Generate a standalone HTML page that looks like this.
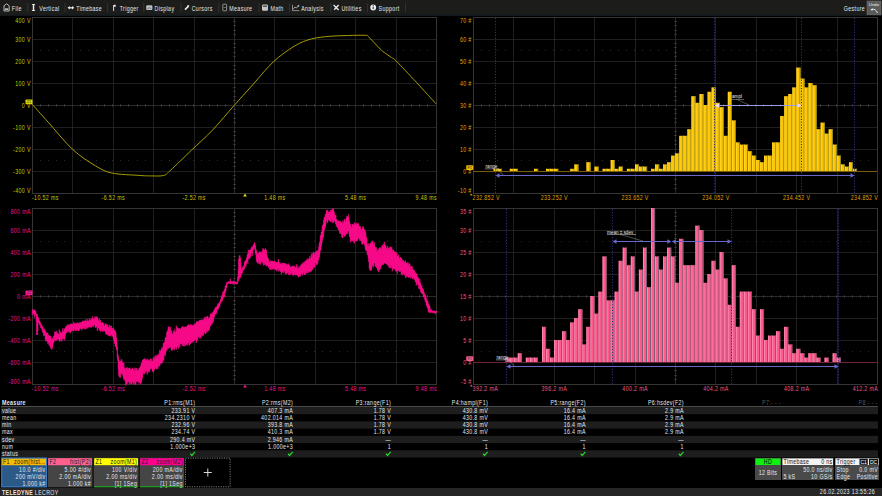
<!DOCTYPE html><html><head><meta charset="utf-8"><style>
html,body{margin:0;padding:0;background:#000;width:882px;height:496px;overflow:hidden}
svg{display:block}
text{font-family:"Liberation Sans", sans-serif}
</style></head><body>
<svg width="882" height="496" viewBox="0 0 882 496">
<rect x="0" y="0" width="882" height="496" fill="#000"/>

<rect x="0" y="0" width="882" height="15" fill="#1c1c1a"/>
<rect x="0" y="14.6" width="882" height="1.2" fill="#161d22"/>
<text transform="translate(11.8 10.7) scale(0.8 1)" letter-spacing="0.45" font-size="6.6" fill="#e4eaf0">File</text>
<rect x="27.4" y="3" width="0.8" height="9" fill="#383838"/>
<text transform="translate(39.3 10.7) scale(0.8 1)" letter-spacing="0.45" font-size="6.6" fill="#e4eaf0">Vertical</text>
<rect x="64.6" y="3" width="0.8" height="9" fill="#383838"/>
<text transform="translate(76.3 10.7) scale(0.8 1)" letter-spacing="0.45" font-size="6.6" fill="#e4eaf0">Timebase</text>
<rect x="107.3" y="3" width="0.8" height="9" fill="#383838"/>
<text transform="translate(119.7 10.7) scale(0.8 1)" letter-spacing="0.45" font-size="6.6" fill="#e4eaf0">Trigger</text>
<rect x="143.4" y="3" width="0.8" height="9" fill="#383838"/>
<text transform="translate(154.6 10.7) scale(0.8 1)" letter-spacing="0.45" font-size="6.6" fill="#e4eaf0">Display</text>
<rect x="180.5" y="3" width="0.8" height="9" fill="#383838"/>
<text transform="translate(191.7 10.7) scale(0.8 1)" letter-spacing="0.45" font-size="6.6" fill="#e4eaf0">Cursors</text>
<rect x="218.5" y="3" width="0.8" height="9" fill="#383838"/>
<text transform="translate(229.3 10.7) scale(0.8 1)" letter-spacing="0.45" font-size="6.6" fill="#e4eaf0">Measure</text>
<rect x="258.6" y="3" width="0.8" height="9" fill="#383838"/>
<text transform="translate(270.5 10.7) scale(0.8 1)" letter-spacing="0.45" font-size="6.6" fill="#e4eaf0">Math</text>
<rect x="289.2" y="3" width="0.8" height="9" fill="#383838"/>
<text transform="translate(301.2 10.7) scale(0.8 1)" letter-spacing="0.45" font-size="6.6" fill="#e4eaf0">Analysis</text>
<rect x="330.5" y="3" width="0.8" height="9" fill="#383838"/>
<text transform="translate(341.4 10.7) scale(0.8 1)" letter-spacing="0.45" font-size="6.6" fill="#e4eaf0">Utilities</text>
<rect x="367.3" y="3" width="0.8" height="9" fill="#383838"/>
<text transform="translate(378.6 10.7) scale(0.8 1)" letter-spacing="0.45" font-size="6.6" fill="#e4eaf0">Support</text>
<rect x="405" y="3" width="0.8" height="9" fill="#383838"/>
<path d="M4 11 v-5.2 l2.6 -2 l2.6 2 v5.2 z" fill="none" stroke="#b8b8b8" stroke-width="1"/><rect x="4.9" y="8.3" width="3.4" height="1.7" fill="#bbb"/>
<path d="M33.5 5.2 v4.6" stroke="#f4f4f4" stroke-width="1.4"/><path d="M31.6 4 h3.8 l-1.9 2 z M31.6 11 h3.8 l-1.9 -2 z" fill="#f4f4f4"/>
<path d="M69.5 7.8 h3" stroke="#eee" stroke-width="1.3"/><path d="M67.5 7.8 l2.3 -1.8 v3.6 z M74.3 7.8 l-2.3 -1.8 v3.6 z" fill="#eee"/>
<path d="M113.6 5 v6" stroke="#ddd" stroke-width="1"/><path d="M114 4.8 h1.8 v2 h-1.8 z" fill="#ddd"/>
<rect x="146.2" y="5.3" width="6.2" height="4.8" rx="1.2" fill="#bdbdbd"/><path d="M147.3 8.8 q2 -2.2 4 0" stroke="#555" stroke-width="0.7" fill="none"/>
<path d="M185 9.6 l3.6 -3.6" stroke="#eee" stroke-width="1.5"/><path d="M189.2 5.2 l-2.4 0.3 l2.1 2.1 z" fill="#eee"/>
<rect x="222.8" y="4.2" width="3.8" height="6.6" rx="0.6" fill="none" stroke="#aaa" stroke-width="0.8"/><rect x="223.6" y="7.3" width="2.2" height="0.6" fill="#aaa"/>
<rect x="262" y="4.6" width="6" height="6.2" rx="1.2" fill="#c4c4c4"/><rect x="263" y="5.5" width="4" height="1.5" fill="#555"/>
<path d="M292.5 4.8 v5.8 h6.8" stroke="#aaa" stroke-width="0.8" fill="none"/><path d="M293.3 9 l1.6 -2 l1.5 1 l1.6 -2" stroke="#bbb" stroke-width="0.8" fill="none"/><rect x="297.6" y="5.2" width="1.6" height="1.4" fill="#ccc"/>
<path d="M333.6 5 l5 5 M338.6 5 l-4.4 4.8" stroke="#eee" stroke-width="1.3" fill="none"/>
<circle cx="373.2" cy="7.5" r="2.9" fill="#eee"/><rect x="372.7" y="6.6" width="1" height="2.6" fill="#222"/><rect x="372.7" y="5.2" width="1" height="0.9" fill="#222"/>
<text transform="translate(865.10 11) scale(0.8 1)" letter-spacing="0.45" font-size="6.6" fill="#e4eaf0" text-anchor="end">Gesture</text>
<rect x="867" y="1" width="14" height="13.8" fill="#5a5a5a" stroke="#777" stroke-width="0.5"/>
<text x="874" y="6.2" font-size="4.3" fill="#eee" text-anchor="middle">Undo</text>
<path d="M871.5 9.6 q4 -1.6 6 3.4" stroke="#eee" stroke-width="0.9" fill="none"/><path d="M870.3 9.9 l2.2 -1.6 l0.3 2.2 z" fill="#eee"/>
<rect x="72" y="17" width="1" height="176" fill="#1f1f1f"/>
<rect x="113" y="17" width="1" height="176" fill="#1f1f1f"/>
<rect x="153" y="17" width="1" height="176" fill="#1f1f1f"/>
<rect x="194" y="17" width="1" height="176" fill="#1f1f1f"/>
<rect x="274" y="17" width="1" height="176" fill="#1f1f1f"/>
<rect x="315" y="17" width="1" height="176" fill="#1f1f1f"/>
<rect x="355" y="17" width="1" height="176" fill="#1f1f1f"/>
<rect x="396" y="17" width="1" height="176" fill="#1f1f1f"/>
<rect x="32" y="39" width="404" height="1" fill="#1f1f1f"/>
<rect x="32" y="61" width="404" height="1" fill="#1f1f1f"/>
<rect x="32" y="83" width="404" height="1" fill="#1f1f1f"/>
<rect x="32" y="127" width="404" height="1" fill="#1f1f1f"/>
<rect x="32" y="149" width="404" height="1" fill="#1f1f1f"/>
<rect x="32" y="171" width="404" height="1" fill="#1f1f1f"/>
<rect x="40" y="50" width="1" height="1" fill="#2a2a2a"/>
<rect x="48" y="50" width="1" height="1" fill="#2a2a2a"/>
<rect x="56" y="50" width="1" height="1" fill="#2a2a2a"/>
<rect x="64" y="50" width="1" height="1" fill="#2a2a2a"/>
<rect x="72" y="50" width="1" height="1" fill="#2a2a2a"/>
<rect x="80" y="50" width="1" height="1" fill="#2a2a2a"/>
<rect x="88" y="50" width="1" height="1" fill="#2a2a2a"/>
<rect x="96" y="50" width="1" height="1" fill="#2a2a2a"/>
<rect x="104" y="50" width="1" height="1" fill="#2a2a2a"/>
<rect x="112" y="50" width="1" height="1" fill="#2a2a2a"/>
<rect x="120" y="50" width="1" height="1" fill="#2a2a2a"/>
<rect x="128" y="50" width="1" height="1" fill="#2a2a2a"/>
<rect x="137" y="50" width="1" height="1" fill="#2a2a2a"/>
<rect x="145" y="50" width="1" height="1" fill="#2a2a2a"/>
<rect x="153" y="50" width="1" height="1" fill="#2a2a2a"/>
<rect x="161" y="50" width="1" height="1" fill="#2a2a2a"/>
<rect x="169" y="50" width="1" height="1" fill="#2a2a2a"/>
<rect x="177" y="50" width="1" height="1" fill="#2a2a2a"/>
<rect x="185" y="50" width="1" height="1" fill="#2a2a2a"/>
<rect x="193" y="50" width="1" height="1" fill="#2a2a2a"/>
<rect x="201" y="50" width="1" height="1" fill="#2a2a2a"/>
<rect x="209" y="50" width="1" height="1" fill="#2a2a2a"/>
<rect x="217" y="50" width="1" height="1" fill="#2a2a2a"/>
<rect x="225" y="50" width="1" height="1" fill="#2a2a2a"/>
<rect x="234" y="50" width="1" height="1" fill="#2a2a2a"/>
<rect x="242" y="50" width="1" height="1" fill="#2a2a2a"/>
<rect x="250" y="50" width="1" height="1" fill="#2a2a2a"/>
<rect x="258" y="50" width="1" height="1" fill="#2a2a2a"/>
<rect x="266" y="50" width="1" height="1" fill="#2a2a2a"/>
<rect x="274" y="50" width="1" height="1" fill="#2a2a2a"/>
<rect x="282" y="50" width="1" height="1" fill="#2a2a2a"/>
<rect x="290" y="50" width="1" height="1" fill="#2a2a2a"/>
<rect x="298" y="50" width="1" height="1" fill="#2a2a2a"/>
<rect x="306" y="50" width="1" height="1" fill="#2a2a2a"/>
<rect x="314" y="50" width="1" height="1" fill="#2a2a2a"/>
<rect x="322" y="50" width="1" height="1" fill="#2a2a2a"/>
<rect x="330" y="50" width="1" height="1" fill="#2a2a2a"/>
<rect x="339" y="50" width="1" height="1" fill="#2a2a2a"/>
<rect x="347" y="50" width="1" height="1" fill="#2a2a2a"/>
<rect x="355" y="50" width="1" height="1" fill="#2a2a2a"/>
<rect x="363" y="50" width="1" height="1" fill="#2a2a2a"/>
<rect x="371" y="50" width="1" height="1" fill="#2a2a2a"/>
<rect x="379" y="50" width="1" height="1" fill="#2a2a2a"/>
<rect x="387" y="50" width="1" height="1" fill="#2a2a2a"/>
<rect x="395" y="50" width="1" height="1" fill="#2a2a2a"/>
<rect x="403" y="50" width="1" height="1" fill="#2a2a2a"/>
<rect x="411" y="50" width="1" height="1" fill="#2a2a2a"/>
<rect x="419" y="50" width="1" height="1" fill="#2a2a2a"/>
<rect x="427" y="50" width="1" height="1" fill="#2a2a2a"/>
<rect x="40" y="160" width="1" height="1" fill="#2a2a2a"/>
<rect x="48" y="160" width="1" height="1" fill="#2a2a2a"/>
<rect x="56" y="160" width="1" height="1" fill="#2a2a2a"/>
<rect x="64" y="160" width="1" height="1" fill="#2a2a2a"/>
<rect x="72" y="160" width="1" height="1" fill="#2a2a2a"/>
<rect x="80" y="160" width="1" height="1" fill="#2a2a2a"/>
<rect x="88" y="160" width="1" height="1" fill="#2a2a2a"/>
<rect x="96" y="160" width="1" height="1" fill="#2a2a2a"/>
<rect x="104" y="160" width="1" height="1" fill="#2a2a2a"/>
<rect x="112" y="160" width="1" height="1" fill="#2a2a2a"/>
<rect x="120" y="160" width="1" height="1" fill="#2a2a2a"/>
<rect x="128" y="160" width="1" height="1" fill="#2a2a2a"/>
<rect x="137" y="160" width="1" height="1" fill="#2a2a2a"/>
<rect x="145" y="160" width="1" height="1" fill="#2a2a2a"/>
<rect x="153" y="160" width="1" height="1" fill="#2a2a2a"/>
<rect x="161" y="160" width="1" height="1" fill="#2a2a2a"/>
<rect x="169" y="160" width="1" height="1" fill="#2a2a2a"/>
<rect x="177" y="160" width="1" height="1" fill="#2a2a2a"/>
<rect x="185" y="160" width="1" height="1" fill="#2a2a2a"/>
<rect x="193" y="160" width="1" height="1" fill="#2a2a2a"/>
<rect x="201" y="160" width="1" height="1" fill="#2a2a2a"/>
<rect x="209" y="160" width="1" height="1" fill="#2a2a2a"/>
<rect x="217" y="160" width="1" height="1" fill="#2a2a2a"/>
<rect x="225" y="160" width="1" height="1" fill="#2a2a2a"/>
<rect x="234" y="160" width="1" height="1" fill="#2a2a2a"/>
<rect x="242" y="160" width="1" height="1" fill="#2a2a2a"/>
<rect x="250" y="160" width="1" height="1" fill="#2a2a2a"/>
<rect x="258" y="160" width="1" height="1" fill="#2a2a2a"/>
<rect x="266" y="160" width="1" height="1" fill="#2a2a2a"/>
<rect x="274" y="160" width="1" height="1" fill="#2a2a2a"/>
<rect x="282" y="160" width="1" height="1" fill="#2a2a2a"/>
<rect x="290" y="160" width="1" height="1" fill="#2a2a2a"/>
<rect x="298" y="160" width="1" height="1" fill="#2a2a2a"/>
<rect x="306" y="160" width="1" height="1" fill="#2a2a2a"/>
<rect x="314" y="160" width="1" height="1" fill="#2a2a2a"/>
<rect x="322" y="160" width="1" height="1" fill="#2a2a2a"/>
<rect x="330" y="160" width="1" height="1" fill="#2a2a2a"/>
<rect x="339" y="160" width="1" height="1" fill="#2a2a2a"/>
<rect x="347" y="160" width="1" height="1" fill="#2a2a2a"/>
<rect x="355" y="160" width="1" height="1" fill="#2a2a2a"/>
<rect x="363" y="160" width="1" height="1" fill="#2a2a2a"/>
<rect x="371" y="160" width="1" height="1" fill="#2a2a2a"/>
<rect x="379" y="160" width="1" height="1" fill="#2a2a2a"/>
<rect x="387" y="160" width="1" height="1" fill="#2a2a2a"/>
<rect x="395" y="160" width="1" height="1" fill="#2a2a2a"/>
<rect x="403" y="160" width="1" height="1" fill="#2a2a2a"/>
<rect x="411" y="160" width="1" height="1" fill="#2a2a2a"/>
<rect x="419" y="160" width="1" height="1" fill="#2a2a2a"/>
<rect x="427" y="160" width="1" height="1" fill="#2a2a2a"/>
<rect x="32" y="105" width="404" height="1" fill="#2a2a2a"/>
<rect x="234" y="17" width="1" height="176" fill="#2a2a2a"/>
<rect x="40" y="104" width="1" height="3" fill="#262626"/><rect x="40" y="105" width="1" height="1" fill="#444"/>
<rect x="48" y="104" width="1" height="3" fill="#262626"/><rect x="48" y="105" width="1" height="1" fill="#444"/>
<rect x="56" y="104" width="1" height="3" fill="#262626"/><rect x="56" y="105" width="1" height="1" fill="#444"/>
<rect x="64" y="104" width="1" height="3" fill="#262626"/><rect x="64" y="105" width="1" height="1" fill="#444"/>
<rect x="72" y="104" width="1" height="3" fill="#262626"/><rect x="72" y="105" width="1" height="1" fill="#444"/>
<rect x="80" y="104" width="1" height="3" fill="#262626"/><rect x="80" y="105" width="1" height="1" fill="#444"/>
<rect x="88" y="104" width="1" height="3" fill="#262626"/><rect x="88" y="105" width="1" height="1" fill="#444"/>
<rect x="96" y="104" width="1" height="3" fill="#262626"/><rect x="96" y="105" width="1" height="1" fill="#444"/>
<rect x="104" y="104" width="1" height="3" fill="#262626"/><rect x="104" y="105" width="1" height="1" fill="#444"/>
<rect x="112" y="104" width="1" height="3" fill="#262626"/><rect x="112" y="105" width="1" height="1" fill="#444"/>
<rect x="120" y="104" width="1" height="3" fill="#262626"/><rect x="120" y="105" width="1" height="1" fill="#444"/>
<rect x="128" y="104" width="1" height="3" fill="#262626"/><rect x="128" y="105" width="1" height="1" fill="#444"/>
<rect x="137" y="104" width="1" height="3" fill="#262626"/><rect x="137" y="105" width="1" height="1" fill="#444"/>
<rect x="145" y="104" width="1" height="3" fill="#262626"/><rect x="145" y="105" width="1" height="1" fill="#444"/>
<rect x="153" y="104" width="1" height="3" fill="#262626"/><rect x="153" y="105" width="1" height="1" fill="#444"/>
<rect x="161" y="104" width="1" height="3" fill="#262626"/><rect x="161" y="105" width="1" height="1" fill="#444"/>
<rect x="169" y="104" width="1" height="3" fill="#262626"/><rect x="169" y="105" width="1" height="1" fill="#444"/>
<rect x="177" y="104" width="1" height="3" fill="#262626"/><rect x="177" y="105" width="1" height="1" fill="#444"/>
<rect x="185" y="104" width="1" height="3" fill="#262626"/><rect x="185" y="105" width="1" height="1" fill="#444"/>
<rect x="193" y="104" width="1" height="3" fill="#262626"/><rect x="193" y="105" width="1" height="1" fill="#444"/>
<rect x="201" y="104" width="1" height="3" fill="#262626"/><rect x="201" y="105" width="1" height="1" fill="#444"/>
<rect x="209" y="104" width="1" height="3" fill="#262626"/><rect x="209" y="105" width="1" height="1" fill="#444"/>
<rect x="217" y="104" width="1" height="3" fill="#262626"/><rect x="217" y="105" width="1" height="1" fill="#444"/>
<rect x="225" y="104" width="1" height="3" fill="#262626"/><rect x="225" y="105" width="1" height="1" fill="#444"/>
<rect x="234" y="104" width="1" height="3" fill="#262626"/><rect x="234" y="105" width="1" height="1" fill="#444"/>
<rect x="242" y="104" width="1" height="3" fill="#262626"/><rect x="242" y="105" width="1" height="1" fill="#444"/>
<rect x="250" y="104" width="1" height="3" fill="#262626"/><rect x="250" y="105" width="1" height="1" fill="#444"/>
<rect x="258" y="104" width="1" height="3" fill="#262626"/><rect x="258" y="105" width="1" height="1" fill="#444"/>
<rect x="266" y="104" width="1" height="3" fill="#262626"/><rect x="266" y="105" width="1" height="1" fill="#444"/>
<rect x="274" y="104" width="1" height="3" fill="#262626"/><rect x="274" y="105" width="1" height="1" fill="#444"/>
<rect x="282" y="104" width="1" height="3" fill="#262626"/><rect x="282" y="105" width="1" height="1" fill="#444"/>
<rect x="290" y="104" width="1" height="3" fill="#262626"/><rect x="290" y="105" width="1" height="1" fill="#444"/>
<rect x="298" y="104" width="1" height="3" fill="#262626"/><rect x="298" y="105" width="1" height="1" fill="#444"/>
<rect x="306" y="104" width="1" height="3" fill="#262626"/><rect x="306" y="105" width="1" height="1" fill="#444"/>
<rect x="314" y="104" width="1" height="3" fill="#262626"/><rect x="314" y="105" width="1" height="1" fill="#444"/>
<rect x="322" y="104" width="1" height="3" fill="#262626"/><rect x="322" y="105" width="1" height="1" fill="#444"/>
<rect x="330" y="104" width="1" height="3" fill="#262626"/><rect x="330" y="105" width="1" height="1" fill="#444"/>
<rect x="339" y="104" width="1" height="3" fill="#262626"/><rect x="339" y="105" width="1" height="1" fill="#444"/>
<rect x="347" y="104" width="1" height="3" fill="#262626"/><rect x="347" y="105" width="1" height="1" fill="#444"/>
<rect x="355" y="104" width="1" height="3" fill="#262626"/><rect x="355" y="105" width="1" height="1" fill="#444"/>
<rect x="363" y="104" width="1" height="3" fill="#262626"/><rect x="363" y="105" width="1" height="1" fill="#444"/>
<rect x="371" y="104" width="1" height="3" fill="#262626"/><rect x="371" y="105" width="1" height="1" fill="#444"/>
<rect x="379" y="104" width="1" height="3" fill="#262626"/><rect x="379" y="105" width="1" height="1" fill="#444"/>
<rect x="387" y="104" width="1" height="3" fill="#262626"/><rect x="387" y="105" width="1" height="1" fill="#444"/>
<rect x="395" y="104" width="1" height="3" fill="#262626"/><rect x="395" y="105" width="1" height="1" fill="#444"/>
<rect x="403" y="104" width="1" height="3" fill="#262626"/><rect x="403" y="105" width="1" height="1" fill="#444"/>
<rect x="411" y="104" width="1" height="3" fill="#262626"/><rect x="411" y="105" width="1" height="1" fill="#444"/>
<rect x="419" y="104" width="1" height="3" fill="#262626"/><rect x="419" y="105" width="1" height="1" fill="#444"/>
<rect x="427" y="104" width="1" height="3" fill="#262626"/><rect x="427" y="105" width="1" height="1" fill="#444"/>
<rect x="233" y="21" width="3" height="1" fill="#262626"/><rect x="234" y="21" width="1" height="1" fill="#444"/>
<rect x="233" y="25" width="3" height="1" fill="#262626"/><rect x="234" y="25" width="1" height="1" fill="#444"/>
<rect x="233" y="30" width="3" height="1" fill="#262626"/><rect x="234" y="30" width="1" height="1" fill="#444"/>
<rect x="233" y="34" width="3" height="1" fill="#262626"/><rect x="234" y="34" width="1" height="1" fill="#444"/>
<rect x="233" y="39" width="3" height="1" fill="#262626"/><rect x="234" y="39" width="1" height="1" fill="#444"/>
<rect x="233" y="43" width="3" height="1" fill="#262626"/><rect x="234" y="43" width="1" height="1" fill="#444"/>
<rect x="233" y="47" width="3" height="1" fill="#262626"/><rect x="234" y="47" width="1" height="1" fill="#444"/>
<rect x="233" y="52" width="3" height="1" fill="#262626"/><rect x="234" y="52" width="1" height="1" fill="#444"/>
<rect x="233" y="56" width="3" height="1" fill="#262626"/><rect x="234" y="56" width="1" height="1" fill="#444"/>
<rect x="233" y="61" width="3" height="1" fill="#262626"/><rect x="234" y="61" width="1" height="1" fill="#444"/>
<rect x="233" y="65" width="3" height="1" fill="#262626"/><rect x="234" y="65" width="1" height="1" fill="#444"/>
<rect x="233" y="69" width="3" height="1" fill="#262626"/><rect x="234" y="69" width="1" height="1" fill="#444"/>
<rect x="233" y="74" width="3" height="1" fill="#262626"/><rect x="234" y="74" width="1" height="1" fill="#444"/>
<rect x="233" y="78" width="3" height="1" fill="#262626"/><rect x="234" y="78" width="1" height="1" fill="#444"/>
<rect x="233" y="83" width="3" height="1" fill="#262626"/><rect x="234" y="83" width="1" height="1" fill="#444"/>
<rect x="233" y="87" width="3" height="1" fill="#262626"/><rect x="234" y="87" width="1" height="1" fill="#444"/>
<rect x="233" y="91" width="3" height="1" fill="#262626"/><rect x="234" y="91" width="1" height="1" fill="#444"/>
<rect x="233" y="96" width="3" height="1" fill="#262626"/><rect x="234" y="96" width="1" height="1" fill="#444"/>
<rect x="233" y="100" width="3" height="1" fill="#262626"/><rect x="234" y="100" width="1" height="1" fill="#444"/>
<rect x="233" y="105" width="3" height="1" fill="#262626"/><rect x="234" y="105" width="1" height="1" fill="#444"/>
<rect x="233" y="109" width="3" height="1" fill="#262626"/><rect x="234" y="109" width="1" height="1" fill="#444"/>
<rect x="233" y="113" width="3" height="1" fill="#262626"/><rect x="234" y="113" width="1" height="1" fill="#444"/>
<rect x="233" y="118" width="3" height="1" fill="#262626"/><rect x="234" y="118" width="1" height="1" fill="#444"/>
<rect x="233" y="122" width="3" height="1" fill="#262626"/><rect x="234" y="122" width="1" height="1" fill="#444"/>
<rect x="233" y="127" width="3" height="1" fill="#262626"/><rect x="234" y="127" width="1" height="1" fill="#444"/>
<rect x="233" y="131" width="3" height="1" fill="#262626"/><rect x="234" y="131" width="1" height="1" fill="#444"/>
<rect x="233" y="135" width="3" height="1" fill="#262626"/><rect x="234" y="135" width="1" height="1" fill="#444"/>
<rect x="233" y="140" width="3" height="1" fill="#262626"/><rect x="234" y="140" width="1" height="1" fill="#444"/>
<rect x="233" y="144" width="3" height="1" fill="#262626"/><rect x="234" y="144" width="1" height="1" fill="#444"/>
<rect x="233" y="149" width="3" height="1" fill="#262626"/><rect x="234" y="149" width="1" height="1" fill="#444"/>
<rect x="233" y="153" width="3" height="1" fill="#262626"/><rect x="234" y="153" width="1" height="1" fill="#444"/>
<rect x="233" y="157" width="3" height="1" fill="#262626"/><rect x="234" y="157" width="1" height="1" fill="#444"/>
<rect x="233" y="162" width="3" height="1" fill="#262626"/><rect x="234" y="162" width="1" height="1" fill="#444"/>
<rect x="233" y="166" width="3" height="1" fill="#262626"/><rect x="234" y="166" width="1" height="1" fill="#444"/>
<rect x="233" y="171" width="3" height="1" fill="#262626"/><rect x="234" y="171" width="1" height="1" fill="#444"/>
<rect x="233" y="175" width="3" height="1" fill="#262626"/><rect x="234" y="175" width="1" height="1" fill="#444"/>
<rect x="233" y="179" width="3" height="1" fill="#262626"/><rect x="234" y="179" width="1" height="1" fill="#444"/>
<rect x="233" y="184" width="3" height="1" fill="#262626"/><rect x="234" y="184" width="1" height="1" fill="#444"/>
<rect x="233" y="188" width="3" height="1" fill="#262626"/><rect x="234" y="188" width="1" height="1" fill="#444"/>
<rect x="72" y="39" width="1" height="1" fill="#2c2c2c"/>
<rect x="72" y="61" width="1" height="1" fill="#2c2c2c"/>
<rect x="72" y="83" width="1" height="1" fill="#2c2c2c"/>
<rect x="72" y="105" width="1" height="1" fill="#2c2c2c"/>
<rect x="72" y="127" width="1" height="1" fill="#2c2c2c"/>
<rect x="72" y="149" width="1" height="1" fill="#2c2c2c"/>
<rect x="72" y="171" width="1" height="1" fill="#2c2c2c"/>
<rect x="113" y="39" width="1" height="1" fill="#2c2c2c"/>
<rect x="113" y="61" width="1" height="1" fill="#2c2c2c"/>
<rect x="113" y="83" width="1" height="1" fill="#2c2c2c"/>
<rect x="113" y="105" width="1" height="1" fill="#2c2c2c"/>
<rect x="113" y="127" width="1" height="1" fill="#2c2c2c"/>
<rect x="113" y="149" width="1" height="1" fill="#2c2c2c"/>
<rect x="113" y="171" width="1" height="1" fill="#2c2c2c"/>
<rect x="153" y="39" width="1" height="1" fill="#2c2c2c"/>
<rect x="153" y="61" width="1" height="1" fill="#2c2c2c"/>
<rect x="153" y="83" width="1" height="1" fill="#2c2c2c"/>
<rect x="153" y="105" width="1" height="1" fill="#2c2c2c"/>
<rect x="153" y="127" width="1" height="1" fill="#2c2c2c"/>
<rect x="153" y="149" width="1" height="1" fill="#2c2c2c"/>
<rect x="153" y="171" width="1" height="1" fill="#2c2c2c"/>
<rect x="194" y="39" width="1" height="1" fill="#2c2c2c"/>
<rect x="194" y="61" width="1" height="1" fill="#2c2c2c"/>
<rect x="194" y="83" width="1" height="1" fill="#2c2c2c"/>
<rect x="194" y="105" width="1" height="1" fill="#2c2c2c"/>
<rect x="194" y="127" width="1" height="1" fill="#2c2c2c"/>
<rect x="194" y="149" width="1" height="1" fill="#2c2c2c"/>
<rect x="194" y="171" width="1" height="1" fill="#2c2c2c"/>
<rect x="234" y="39" width="1" height="1" fill="#2c2c2c"/>
<rect x="234" y="61" width="1" height="1" fill="#2c2c2c"/>
<rect x="234" y="83" width="1" height="1" fill="#2c2c2c"/>
<rect x="234" y="105" width="1" height="1" fill="#2c2c2c"/>
<rect x="234" y="127" width="1" height="1" fill="#2c2c2c"/>
<rect x="234" y="149" width="1" height="1" fill="#2c2c2c"/>
<rect x="234" y="171" width="1" height="1" fill="#2c2c2c"/>
<rect x="274" y="39" width="1" height="1" fill="#2c2c2c"/>
<rect x="274" y="61" width="1" height="1" fill="#2c2c2c"/>
<rect x="274" y="83" width="1" height="1" fill="#2c2c2c"/>
<rect x="274" y="105" width="1" height="1" fill="#2c2c2c"/>
<rect x="274" y="127" width="1" height="1" fill="#2c2c2c"/>
<rect x="274" y="149" width="1" height="1" fill="#2c2c2c"/>
<rect x="274" y="171" width="1" height="1" fill="#2c2c2c"/>
<rect x="315" y="39" width="1" height="1" fill="#2c2c2c"/>
<rect x="315" y="61" width="1" height="1" fill="#2c2c2c"/>
<rect x="315" y="83" width="1" height="1" fill="#2c2c2c"/>
<rect x="315" y="105" width="1" height="1" fill="#2c2c2c"/>
<rect x="315" y="127" width="1" height="1" fill="#2c2c2c"/>
<rect x="315" y="149" width="1" height="1" fill="#2c2c2c"/>
<rect x="315" y="171" width="1" height="1" fill="#2c2c2c"/>
<rect x="355" y="39" width="1" height="1" fill="#2c2c2c"/>
<rect x="355" y="61" width="1" height="1" fill="#2c2c2c"/>
<rect x="355" y="83" width="1" height="1" fill="#2c2c2c"/>
<rect x="355" y="105" width="1" height="1" fill="#2c2c2c"/>
<rect x="355" y="127" width="1" height="1" fill="#2c2c2c"/>
<rect x="355" y="149" width="1" height="1" fill="#2c2c2c"/>
<rect x="355" y="171" width="1" height="1" fill="#2c2c2c"/>
<rect x="396" y="39" width="1" height="1" fill="#2c2c2c"/>
<rect x="396" y="61" width="1" height="1" fill="#2c2c2c"/>
<rect x="396" y="83" width="1" height="1" fill="#2c2c2c"/>
<rect x="396" y="105" width="1" height="1" fill="#2c2c2c"/>
<rect x="396" y="127" width="1" height="1" fill="#2c2c2c"/>
<rect x="396" y="149" width="1" height="1" fill="#2c2c2c"/>
<rect x="396" y="171" width="1" height="1" fill="#2c2c2c"/>
<rect x="32.5" y="17.5" width="404" height="176" fill="none" stroke="#353535" stroke-width="1"/>
<rect x="72" y="208" width="1" height="176" fill="#1f1f1f"/>
<rect x="113" y="208" width="1" height="176" fill="#1f1f1f"/>
<rect x="153" y="208" width="1" height="176" fill="#1f1f1f"/>
<rect x="194" y="208" width="1" height="176" fill="#1f1f1f"/>
<rect x="274" y="208" width="1" height="176" fill="#1f1f1f"/>
<rect x="315" y="208" width="1" height="176" fill="#1f1f1f"/>
<rect x="355" y="208" width="1" height="176" fill="#1f1f1f"/>
<rect x="396" y="208" width="1" height="176" fill="#1f1f1f"/>
<rect x="32" y="230" width="404" height="1" fill="#1f1f1f"/>
<rect x="32" y="252" width="404" height="1" fill="#1f1f1f"/>
<rect x="32" y="274" width="404" height="1" fill="#1f1f1f"/>
<rect x="32" y="318" width="404" height="1" fill="#1f1f1f"/>
<rect x="32" y="340" width="404" height="1" fill="#1f1f1f"/>
<rect x="32" y="362" width="404" height="1" fill="#1f1f1f"/>
<rect x="40" y="241" width="1" height="1" fill="#2a2a2a"/>
<rect x="48" y="241" width="1" height="1" fill="#2a2a2a"/>
<rect x="56" y="241" width="1" height="1" fill="#2a2a2a"/>
<rect x="64" y="241" width="1" height="1" fill="#2a2a2a"/>
<rect x="72" y="241" width="1" height="1" fill="#2a2a2a"/>
<rect x="80" y="241" width="1" height="1" fill="#2a2a2a"/>
<rect x="88" y="241" width="1" height="1" fill="#2a2a2a"/>
<rect x="96" y="241" width="1" height="1" fill="#2a2a2a"/>
<rect x="104" y="241" width="1" height="1" fill="#2a2a2a"/>
<rect x="112" y="241" width="1" height="1" fill="#2a2a2a"/>
<rect x="120" y="241" width="1" height="1" fill="#2a2a2a"/>
<rect x="128" y="241" width="1" height="1" fill="#2a2a2a"/>
<rect x="137" y="241" width="1" height="1" fill="#2a2a2a"/>
<rect x="145" y="241" width="1" height="1" fill="#2a2a2a"/>
<rect x="153" y="241" width="1" height="1" fill="#2a2a2a"/>
<rect x="161" y="241" width="1" height="1" fill="#2a2a2a"/>
<rect x="169" y="241" width="1" height="1" fill="#2a2a2a"/>
<rect x="177" y="241" width="1" height="1" fill="#2a2a2a"/>
<rect x="185" y="241" width="1" height="1" fill="#2a2a2a"/>
<rect x="193" y="241" width="1" height="1" fill="#2a2a2a"/>
<rect x="201" y="241" width="1" height="1" fill="#2a2a2a"/>
<rect x="209" y="241" width="1" height="1" fill="#2a2a2a"/>
<rect x="217" y="241" width="1" height="1" fill="#2a2a2a"/>
<rect x="225" y="241" width="1" height="1" fill="#2a2a2a"/>
<rect x="234" y="241" width="1" height="1" fill="#2a2a2a"/>
<rect x="242" y="241" width="1" height="1" fill="#2a2a2a"/>
<rect x="250" y="241" width="1" height="1" fill="#2a2a2a"/>
<rect x="258" y="241" width="1" height="1" fill="#2a2a2a"/>
<rect x="266" y="241" width="1" height="1" fill="#2a2a2a"/>
<rect x="274" y="241" width="1" height="1" fill="#2a2a2a"/>
<rect x="282" y="241" width="1" height="1" fill="#2a2a2a"/>
<rect x="290" y="241" width="1" height="1" fill="#2a2a2a"/>
<rect x="298" y="241" width="1" height="1" fill="#2a2a2a"/>
<rect x="306" y="241" width="1" height="1" fill="#2a2a2a"/>
<rect x="314" y="241" width="1" height="1" fill="#2a2a2a"/>
<rect x="322" y="241" width="1" height="1" fill="#2a2a2a"/>
<rect x="330" y="241" width="1" height="1" fill="#2a2a2a"/>
<rect x="339" y="241" width="1" height="1" fill="#2a2a2a"/>
<rect x="347" y="241" width="1" height="1" fill="#2a2a2a"/>
<rect x="355" y="241" width="1" height="1" fill="#2a2a2a"/>
<rect x="363" y="241" width="1" height="1" fill="#2a2a2a"/>
<rect x="371" y="241" width="1" height="1" fill="#2a2a2a"/>
<rect x="379" y="241" width="1" height="1" fill="#2a2a2a"/>
<rect x="387" y="241" width="1" height="1" fill="#2a2a2a"/>
<rect x="395" y="241" width="1" height="1" fill="#2a2a2a"/>
<rect x="403" y="241" width="1" height="1" fill="#2a2a2a"/>
<rect x="411" y="241" width="1" height="1" fill="#2a2a2a"/>
<rect x="419" y="241" width="1" height="1" fill="#2a2a2a"/>
<rect x="427" y="241" width="1" height="1" fill="#2a2a2a"/>
<rect x="40" y="351" width="1" height="1" fill="#2a2a2a"/>
<rect x="48" y="351" width="1" height="1" fill="#2a2a2a"/>
<rect x="56" y="351" width="1" height="1" fill="#2a2a2a"/>
<rect x="64" y="351" width="1" height="1" fill="#2a2a2a"/>
<rect x="72" y="351" width="1" height="1" fill="#2a2a2a"/>
<rect x="80" y="351" width="1" height="1" fill="#2a2a2a"/>
<rect x="88" y="351" width="1" height="1" fill="#2a2a2a"/>
<rect x="96" y="351" width="1" height="1" fill="#2a2a2a"/>
<rect x="104" y="351" width="1" height="1" fill="#2a2a2a"/>
<rect x="112" y="351" width="1" height="1" fill="#2a2a2a"/>
<rect x="120" y="351" width="1" height="1" fill="#2a2a2a"/>
<rect x="128" y="351" width="1" height="1" fill="#2a2a2a"/>
<rect x="137" y="351" width="1" height="1" fill="#2a2a2a"/>
<rect x="145" y="351" width="1" height="1" fill="#2a2a2a"/>
<rect x="153" y="351" width="1" height="1" fill="#2a2a2a"/>
<rect x="161" y="351" width="1" height="1" fill="#2a2a2a"/>
<rect x="169" y="351" width="1" height="1" fill="#2a2a2a"/>
<rect x="177" y="351" width="1" height="1" fill="#2a2a2a"/>
<rect x="185" y="351" width="1" height="1" fill="#2a2a2a"/>
<rect x="193" y="351" width="1" height="1" fill="#2a2a2a"/>
<rect x="201" y="351" width="1" height="1" fill="#2a2a2a"/>
<rect x="209" y="351" width="1" height="1" fill="#2a2a2a"/>
<rect x="217" y="351" width="1" height="1" fill="#2a2a2a"/>
<rect x="225" y="351" width="1" height="1" fill="#2a2a2a"/>
<rect x="234" y="351" width="1" height="1" fill="#2a2a2a"/>
<rect x="242" y="351" width="1" height="1" fill="#2a2a2a"/>
<rect x="250" y="351" width="1" height="1" fill="#2a2a2a"/>
<rect x="258" y="351" width="1" height="1" fill="#2a2a2a"/>
<rect x="266" y="351" width="1" height="1" fill="#2a2a2a"/>
<rect x="274" y="351" width="1" height="1" fill="#2a2a2a"/>
<rect x="282" y="351" width="1" height="1" fill="#2a2a2a"/>
<rect x="290" y="351" width="1" height="1" fill="#2a2a2a"/>
<rect x="298" y="351" width="1" height="1" fill="#2a2a2a"/>
<rect x="306" y="351" width="1" height="1" fill="#2a2a2a"/>
<rect x="314" y="351" width="1" height="1" fill="#2a2a2a"/>
<rect x="322" y="351" width="1" height="1" fill="#2a2a2a"/>
<rect x="330" y="351" width="1" height="1" fill="#2a2a2a"/>
<rect x="339" y="351" width="1" height="1" fill="#2a2a2a"/>
<rect x="347" y="351" width="1" height="1" fill="#2a2a2a"/>
<rect x="355" y="351" width="1" height="1" fill="#2a2a2a"/>
<rect x="363" y="351" width="1" height="1" fill="#2a2a2a"/>
<rect x="371" y="351" width="1" height="1" fill="#2a2a2a"/>
<rect x="379" y="351" width="1" height="1" fill="#2a2a2a"/>
<rect x="387" y="351" width="1" height="1" fill="#2a2a2a"/>
<rect x="395" y="351" width="1" height="1" fill="#2a2a2a"/>
<rect x="403" y="351" width="1" height="1" fill="#2a2a2a"/>
<rect x="411" y="351" width="1" height="1" fill="#2a2a2a"/>
<rect x="419" y="351" width="1" height="1" fill="#2a2a2a"/>
<rect x="427" y="351" width="1" height="1" fill="#2a2a2a"/>
<rect x="32" y="296" width="404" height="1" fill="#2a2a2a"/>
<rect x="234" y="208" width="1" height="176" fill="#2a2a2a"/>
<rect x="40" y="295" width="1" height="3" fill="#262626"/><rect x="40" y="296" width="1" height="1" fill="#444"/>
<rect x="48" y="295" width="1" height="3" fill="#262626"/><rect x="48" y="296" width="1" height="1" fill="#444"/>
<rect x="56" y="295" width="1" height="3" fill="#262626"/><rect x="56" y="296" width="1" height="1" fill="#444"/>
<rect x="64" y="295" width="1" height="3" fill="#262626"/><rect x="64" y="296" width="1" height="1" fill="#444"/>
<rect x="72" y="295" width="1" height="3" fill="#262626"/><rect x="72" y="296" width="1" height="1" fill="#444"/>
<rect x="80" y="295" width="1" height="3" fill="#262626"/><rect x="80" y="296" width="1" height="1" fill="#444"/>
<rect x="88" y="295" width="1" height="3" fill="#262626"/><rect x="88" y="296" width="1" height="1" fill="#444"/>
<rect x="96" y="295" width="1" height="3" fill="#262626"/><rect x="96" y="296" width="1" height="1" fill="#444"/>
<rect x="104" y="295" width="1" height="3" fill="#262626"/><rect x="104" y="296" width="1" height="1" fill="#444"/>
<rect x="112" y="295" width="1" height="3" fill="#262626"/><rect x="112" y="296" width="1" height="1" fill="#444"/>
<rect x="120" y="295" width="1" height="3" fill="#262626"/><rect x="120" y="296" width="1" height="1" fill="#444"/>
<rect x="128" y="295" width="1" height="3" fill="#262626"/><rect x="128" y="296" width="1" height="1" fill="#444"/>
<rect x="137" y="295" width="1" height="3" fill="#262626"/><rect x="137" y="296" width="1" height="1" fill="#444"/>
<rect x="145" y="295" width="1" height="3" fill="#262626"/><rect x="145" y="296" width="1" height="1" fill="#444"/>
<rect x="153" y="295" width="1" height="3" fill="#262626"/><rect x="153" y="296" width="1" height="1" fill="#444"/>
<rect x="161" y="295" width="1" height="3" fill="#262626"/><rect x="161" y="296" width="1" height="1" fill="#444"/>
<rect x="169" y="295" width="1" height="3" fill="#262626"/><rect x="169" y="296" width="1" height="1" fill="#444"/>
<rect x="177" y="295" width="1" height="3" fill="#262626"/><rect x="177" y="296" width="1" height="1" fill="#444"/>
<rect x="185" y="295" width="1" height="3" fill="#262626"/><rect x="185" y="296" width="1" height="1" fill="#444"/>
<rect x="193" y="295" width="1" height="3" fill="#262626"/><rect x="193" y="296" width="1" height="1" fill="#444"/>
<rect x="201" y="295" width="1" height="3" fill="#262626"/><rect x="201" y="296" width="1" height="1" fill="#444"/>
<rect x="209" y="295" width="1" height="3" fill="#262626"/><rect x="209" y="296" width="1" height="1" fill="#444"/>
<rect x="217" y="295" width="1" height="3" fill="#262626"/><rect x="217" y="296" width="1" height="1" fill="#444"/>
<rect x="225" y="295" width="1" height="3" fill="#262626"/><rect x="225" y="296" width="1" height="1" fill="#444"/>
<rect x="234" y="295" width="1" height="3" fill="#262626"/><rect x="234" y="296" width="1" height="1" fill="#444"/>
<rect x="242" y="295" width="1" height="3" fill="#262626"/><rect x="242" y="296" width="1" height="1" fill="#444"/>
<rect x="250" y="295" width="1" height="3" fill="#262626"/><rect x="250" y="296" width="1" height="1" fill="#444"/>
<rect x="258" y="295" width="1" height="3" fill="#262626"/><rect x="258" y="296" width="1" height="1" fill="#444"/>
<rect x="266" y="295" width="1" height="3" fill="#262626"/><rect x="266" y="296" width="1" height="1" fill="#444"/>
<rect x="274" y="295" width="1" height="3" fill="#262626"/><rect x="274" y="296" width="1" height="1" fill="#444"/>
<rect x="282" y="295" width="1" height="3" fill="#262626"/><rect x="282" y="296" width="1" height="1" fill="#444"/>
<rect x="290" y="295" width="1" height="3" fill="#262626"/><rect x="290" y="296" width="1" height="1" fill="#444"/>
<rect x="298" y="295" width="1" height="3" fill="#262626"/><rect x="298" y="296" width="1" height="1" fill="#444"/>
<rect x="306" y="295" width="1" height="3" fill="#262626"/><rect x="306" y="296" width="1" height="1" fill="#444"/>
<rect x="314" y="295" width="1" height="3" fill="#262626"/><rect x="314" y="296" width="1" height="1" fill="#444"/>
<rect x="322" y="295" width="1" height="3" fill="#262626"/><rect x="322" y="296" width="1" height="1" fill="#444"/>
<rect x="330" y="295" width="1" height="3" fill="#262626"/><rect x="330" y="296" width="1" height="1" fill="#444"/>
<rect x="339" y="295" width="1" height="3" fill="#262626"/><rect x="339" y="296" width="1" height="1" fill="#444"/>
<rect x="347" y="295" width="1" height="3" fill="#262626"/><rect x="347" y="296" width="1" height="1" fill="#444"/>
<rect x="355" y="295" width="1" height="3" fill="#262626"/><rect x="355" y="296" width="1" height="1" fill="#444"/>
<rect x="363" y="295" width="1" height="3" fill="#262626"/><rect x="363" y="296" width="1" height="1" fill="#444"/>
<rect x="371" y="295" width="1" height="3" fill="#262626"/><rect x="371" y="296" width="1" height="1" fill="#444"/>
<rect x="379" y="295" width="1" height="3" fill="#262626"/><rect x="379" y="296" width="1" height="1" fill="#444"/>
<rect x="387" y="295" width="1" height="3" fill="#262626"/><rect x="387" y="296" width="1" height="1" fill="#444"/>
<rect x="395" y="295" width="1" height="3" fill="#262626"/><rect x="395" y="296" width="1" height="1" fill="#444"/>
<rect x="403" y="295" width="1" height="3" fill="#262626"/><rect x="403" y="296" width="1" height="1" fill="#444"/>
<rect x="411" y="295" width="1" height="3" fill="#262626"/><rect x="411" y="296" width="1" height="1" fill="#444"/>
<rect x="419" y="295" width="1" height="3" fill="#262626"/><rect x="419" y="296" width="1" height="1" fill="#444"/>
<rect x="427" y="295" width="1" height="3" fill="#262626"/><rect x="427" y="296" width="1" height="1" fill="#444"/>
<rect x="233" y="212" width="3" height="1" fill="#262626"/><rect x="234" y="212" width="1" height="1" fill="#444"/>
<rect x="233" y="216" width="3" height="1" fill="#262626"/><rect x="234" y="216" width="1" height="1" fill="#444"/>
<rect x="233" y="221" width="3" height="1" fill="#262626"/><rect x="234" y="221" width="1" height="1" fill="#444"/>
<rect x="233" y="225" width="3" height="1" fill="#262626"/><rect x="234" y="225" width="1" height="1" fill="#444"/>
<rect x="233" y="230" width="3" height="1" fill="#262626"/><rect x="234" y="230" width="1" height="1" fill="#444"/>
<rect x="233" y="234" width="3" height="1" fill="#262626"/><rect x="234" y="234" width="1" height="1" fill="#444"/>
<rect x="233" y="238" width="3" height="1" fill="#262626"/><rect x="234" y="238" width="1" height="1" fill="#444"/>
<rect x="233" y="243" width="3" height="1" fill="#262626"/><rect x="234" y="243" width="1" height="1" fill="#444"/>
<rect x="233" y="247" width="3" height="1" fill="#262626"/><rect x="234" y="247" width="1" height="1" fill="#444"/>
<rect x="233" y="252" width="3" height="1" fill="#262626"/><rect x="234" y="252" width="1" height="1" fill="#444"/>
<rect x="233" y="256" width="3" height="1" fill="#262626"/><rect x="234" y="256" width="1" height="1" fill="#444"/>
<rect x="233" y="260" width="3" height="1" fill="#262626"/><rect x="234" y="260" width="1" height="1" fill="#444"/>
<rect x="233" y="265" width="3" height="1" fill="#262626"/><rect x="234" y="265" width="1" height="1" fill="#444"/>
<rect x="233" y="269" width="3" height="1" fill="#262626"/><rect x="234" y="269" width="1" height="1" fill="#444"/>
<rect x="233" y="274" width="3" height="1" fill="#262626"/><rect x="234" y="274" width="1" height="1" fill="#444"/>
<rect x="233" y="278" width="3" height="1" fill="#262626"/><rect x="234" y="278" width="1" height="1" fill="#444"/>
<rect x="233" y="282" width="3" height="1" fill="#262626"/><rect x="234" y="282" width="1" height="1" fill="#444"/>
<rect x="233" y="287" width="3" height="1" fill="#262626"/><rect x="234" y="287" width="1" height="1" fill="#444"/>
<rect x="233" y="291" width="3" height="1" fill="#262626"/><rect x="234" y="291" width="1" height="1" fill="#444"/>
<rect x="233" y="296" width="3" height="1" fill="#262626"/><rect x="234" y="296" width="1" height="1" fill="#444"/>
<rect x="233" y="300" width="3" height="1" fill="#262626"/><rect x="234" y="300" width="1" height="1" fill="#444"/>
<rect x="233" y="304" width="3" height="1" fill="#262626"/><rect x="234" y="304" width="1" height="1" fill="#444"/>
<rect x="233" y="309" width="3" height="1" fill="#262626"/><rect x="234" y="309" width="1" height="1" fill="#444"/>
<rect x="233" y="313" width="3" height="1" fill="#262626"/><rect x="234" y="313" width="1" height="1" fill="#444"/>
<rect x="233" y="318" width="3" height="1" fill="#262626"/><rect x="234" y="318" width="1" height="1" fill="#444"/>
<rect x="233" y="322" width="3" height="1" fill="#262626"/><rect x="234" y="322" width="1" height="1" fill="#444"/>
<rect x="233" y="326" width="3" height="1" fill="#262626"/><rect x="234" y="326" width="1" height="1" fill="#444"/>
<rect x="233" y="331" width="3" height="1" fill="#262626"/><rect x="234" y="331" width="1" height="1" fill="#444"/>
<rect x="233" y="335" width="3" height="1" fill="#262626"/><rect x="234" y="335" width="1" height="1" fill="#444"/>
<rect x="233" y="340" width="3" height="1" fill="#262626"/><rect x="234" y="340" width="1" height="1" fill="#444"/>
<rect x="233" y="344" width="3" height="1" fill="#262626"/><rect x="234" y="344" width="1" height="1" fill="#444"/>
<rect x="233" y="348" width="3" height="1" fill="#262626"/><rect x="234" y="348" width="1" height="1" fill="#444"/>
<rect x="233" y="353" width="3" height="1" fill="#262626"/><rect x="234" y="353" width="1" height="1" fill="#444"/>
<rect x="233" y="357" width="3" height="1" fill="#262626"/><rect x="234" y="357" width="1" height="1" fill="#444"/>
<rect x="233" y="362" width="3" height="1" fill="#262626"/><rect x="234" y="362" width="1" height="1" fill="#444"/>
<rect x="233" y="366" width="3" height="1" fill="#262626"/><rect x="234" y="366" width="1" height="1" fill="#444"/>
<rect x="233" y="370" width="3" height="1" fill="#262626"/><rect x="234" y="370" width="1" height="1" fill="#444"/>
<rect x="233" y="375" width="3" height="1" fill="#262626"/><rect x="234" y="375" width="1" height="1" fill="#444"/>
<rect x="233" y="379" width="3" height="1" fill="#262626"/><rect x="234" y="379" width="1" height="1" fill="#444"/>
<rect x="72" y="230" width="1" height="1" fill="#2c2c2c"/>
<rect x="72" y="252" width="1" height="1" fill="#2c2c2c"/>
<rect x="72" y="274" width="1" height="1" fill="#2c2c2c"/>
<rect x="72" y="296" width="1" height="1" fill="#2c2c2c"/>
<rect x="72" y="318" width="1" height="1" fill="#2c2c2c"/>
<rect x="72" y="340" width="1" height="1" fill="#2c2c2c"/>
<rect x="72" y="362" width="1" height="1" fill="#2c2c2c"/>
<rect x="113" y="230" width="1" height="1" fill="#2c2c2c"/>
<rect x="113" y="252" width="1" height="1" fill="#2c2c2c"/>
<rect x="113" y="274" width="1" height="1" fill="#2c2c2c"/>
<rect x="113" y="296" width="1" height="1" fill="#2c2c2c"/>
<rect x="113" y="318" width="1" height="1" fill="#2c2c2c"/>
<rect x="113" y="340" width="1" height="1" fill="#2c2c2c"/>
<rect x="113" y="362" width="1" height="1" fill="#2c2c2c"/>
<rect x="153" y="230" width="1" height="1" fill="#2c2c2c"/>
<rect x="153" y="252" width="1" height="1" fill="#2c2c2c"/>
<rect x="153" y="274" width="1" height="1" fill="#2c2c2c"/>
<rect x="153" y="296" width="1" height="1" fill="#2c2c2c"/>
<rect x="153" y="318" width="1" height="1" fill="#2c2c2c"/>
<rect x="153" y="340" width="1" height="1" fill="#2c2c2c"/>
<rect x="153" y="362" width="1" height="1" fill="#2c2c2c"/>
<rect x="194" y="230" width="1" height="1" fill="#2c2c2c"/>
<rect x="194" y="252" width="1" height="1" fill="#2c2c2c"/>
<rect x="194" y="274" width="1" height="1" fill="#2c2c2c"/>
<rect x="194" y="296" width="1" height="1" fill="#2c2c2c"/>
<rect x="194" y="318" width="1" height="1" fill="#2c2c2c"/>
<rect x="194" y="340" width="1" height="1" fill="#2c2c2c"/>
<rect x="194" y="362" width="1" height="1" fill="#2c2c2c"/>
<rect x="234" y="230" width="1" height="1" fill="#2c2c2c"/>
<rect x="234" y="252" width="1" height="1" fill="#2c2c2c"/>
<rect x="234" y="274" width="1" height="1" fill="#2c2c2c"/>
<rect x="234" y="296" width="1" height="1" fill="#2c2c2c"/>
<rect x="234" y="318" width="1" height="1" fill="#2c2c2c"/>
<rect x="234" y="340" width="1" height="1" fill="#2c2c2c"/>
<rect x="234" y="362" width="1" height="1" fill="#2c2c2c"/>
<rect x="274" y="230" width="1" height="1" fill="#2c2c2c"/>
<rect x="274" y="252" width="1" height="1" fill="#2c2c2c"/>
<rect x="274" y="274" width="1" height="1" fill="#2c2c2c"/>
<rect x="274" y="296" width="1" height="1" fill="#2c2c2c"/>
<rect x="274" y="318" width="1" height="1" fill="#2c2c2c"/>
<rect x="274" y="340" width="1" height="1" fill="#2c2c2c"/>
<rect x="274" y="362" width="1" height="1" fill="#2c2c2c"/>
<rect x="315" y="230" width="1" height="1" fill="#2c2c2c"/>
<rect x="315" y="252" width="1" height="1" fill="#2c2c2c"/>
<rect x="315" y="274" width="1" height="1" fill="#2c2c2c"/>
<rect x="315" y="296" width="1" height="1" fill="#2c2c2c"/>
<rect x="315" y="318" width="1" height="1" fill="#2c2c2c"/>
<rect x="315" y="340" width="1" height="1" fill="#2c2c2c"/>
<rect x="315" y="362" width="1" height="1" fill="#2c2c2c"/>
<rect x="355" y="230" width="1" height="1" fill="#2c2c2c"/>
<rect x="355" y="252" width="1" height="1" fill="#2c2c2c"/>
<rect x="355" y="274" width="1" height="1" fill="#2c2c2c"/>
<rect x="355" y="296" width="1" height="1" fill="#2c2c2c"/>
<rect x="355" y="318" width="1" height="1" fill="#2c2c2c"/>
<rect x="355" y="340" width="1" height="1" fill="#2c2c2c"/>
<rect x="355" y="362" width="1" height="1" fill="#2c2c2c"/>
<rect x="396" y="230" width="1" height="1" fill="#2c2c2c"/>
<rect x="396" y="252" width="1" height="1" fill="#2c2c2c"/>
<rect x="396" y="274" width="1" height="1" fill="#2c2c2c"/>
<rect x="396" y="296" width="1" height="1" fill="#2c2c2c"/>
<rect x="396" y="318" width="1" height="1" fill="#2c2c2c"/>
<rect x="396" y="340" width="1" height="1" fill="#2c2c2c"/>
<rect x="396" y="362" width="1" height="1" fill="#2c2c2c"/>
<rect x="32.5" y="208.5" width="404" height="176" fill="none" stroke="#353535" stroke-width="1"/>
<rect x="513" y="17" width="1" height="176" fill="#1f1f1f"/>
<rect x="554" y="17" width="1" height="176" fill="#1f1f1f"/>
<rect x="594" y="17" width="1" height="176" fill="#1f1f1f"/>
<rect x="635" y="17" width="1" height="176" fill="#1f1f1f"/>
<rect x="715" y="17" width="1" height="176" fill="#1f1f1f"/>
<rect x="756" y="17" width="1" height="176" fill="#1f1f1f"/>
<rect x="796" y="17" width="1" height="176" fill="#1f1f1f"/>
<rect x="837" y="17" width="1" height="176" fill="#1f1f1f"/>
<rect x="473" y="39" width="404" height="1" fill="#1f1f1f"/>
<rect x="473" y="61" width="404" height="1" fill="#1f1f1f"/>
<rect x="473" y="83" width="404" height="1" fill="#1f1f1f"/>
<rect x="473" y="127" width="404" height="1" fill="#1f1f1f"/>
<rect x="473" y="149" width="404" height="1" fill="#1f1f1f"/>
<rect x="473" y="171" width="404" height="1" fill="#1f1f1f"/>
<rect x="481" y="50" width="1" height="1" fill="#2a2a2a"/>
<rect x="489" y="50" width="1" height="1" fill="#2a2a2a"/>
<rect x="497" y="50" width="1" height="1" fill="#2a2a2a"/>
<rect x="505" y="50" width="1" height="1" fill="#2a2a2a"/>
<rect x="513" y="50" width="1" height="1" fill="#2a2a2a"/>
<rect x="521" y="50" width="1" height="1" fill="#2a2a2a"/>
<rect x="529" y="50" width="1" height="1" fill="#2a2a2a"/>
<rect x="537" y="50" width="1" height="1" fill="#2a2a2a"/>
<rect x="545" y="50" width="1" height="1" fill="#2a2a2a"/>
<rect x="553" y="50" width="1" height="1" fill="#2a2a2a"/>
<rect x="561" y="50" width="1" height="1" fill="#2a2a2a"/>
<rect x="569" y="50" width="1" height="1" fill="#2a2a2a"/>
<rect x="578" y="50" width="1" height="1" fill="#2a2a2a"/>
<rect x="586" y="50" width="1" height="1" fill="#2a2a2a"/>
<rect x="594" y="50" width="1" height="1" fill="#2a2a2a"/>
<rect x="602" y="50" width="1" height="1" fill="#2a2a2a"/>
<rect x="610" y="50" width="1" height="1" fill="#2a2a2a"/>
<rect x="618" y="50" width="1" height="1" fill="#2a2a2a"/>
<rect x="626" y="50" width="1" height="1" fill="#2a2a2a"/>
<rect x="634" y="50" width="1" height="1" fill="#2a2a2a"/>
<rect x="642" y="50" width="1" height="1" fill="#2a2a2a"/>
<rect x="650" y="50" width="1" height="1" fill="#2a2a2a"/>
<rect x="658" y="50" width="1" height="1" fill="#2a2a2a"/>
<rect x="666" y="50" width="1" height="1" fill="#2a2a2a"/>
<rect x="675" y="50" width="1" height="1" fill="#2a2a2a"/>
<rect x="683" y="50" width="1" height="1" fill="#2a2a2a"/>
<rect x="691" y="50" width="1" height="1" fill="#2a2a2a"/>
<rect x="699" y="50" width="1" height="1" fill="#2a2a2a"/>
<rect x="707" y="50" width="1" height="1" fill="#2a2a2a"/>
<rect x="715" y="50" width="1" height="1" fill="#2a2a2a"/>
<rect x="723" y="50" width="1" height="1" fill="#2a2a2a"/>
<rect x="731" y="50" width="1" height="1" fill="#2a2a2a"/>
<rect x="739" y="50" width="1" height="1" fill="#2a2a2a"/>
<rect x="747" y="50" width="1" height="1" fill="#2a2a2a"/>
<rect x="755" y="50" width="1" height="1" fill="#2a2a2a"/>
<rect x="763" y="50" width="1" height="1" fill="#2a2a2a"/>
<rect x="771" y="50" width="1" height="1" fill="#2a2a2a"/>
<rect x="780" y="50" width="1" height="1" fill="#2a2a2a"/>
<rect x="788" y="50" width="1" height="1" fill="#2a2a2a"/>
<rect x="796" y="50" width="1" height="1" fill="#2a2a2a"/>
<rect x="804" y="50" width="1" height="1" fill="#2a2a2a"/>
<rect x="812" y="50" width="1" height="1" fill="#2a2a2a"/>
<rect x="820" y="50" width="1" height="1" fill="#2a2a2a"/>
<rect x="828" y="50" width="1" height="1" fill="#2a2a2a"/>
<rect x="836" y="50" width="1" height="1" fill="#2a2a2a"/>
<rect x="844" y="50" width="1" height="1" fill="#2a2a2a"/>
<rect x="852" y="50" width="1" height="1" fill="#2a2a2a"/>
<rect x="860" y="50" width="1" height="1" fill="#2a2a2a"/>
<rect x="868" y="50" width="1" height="1" fill="#2a2a2a"/>
<rect x="481" y="160" width="1" height="1" fill="#2a2a2a"/>
<rect x="489" y="160" width="1" height="1" fill="#2a2a2a"/>
<rect x="497" y="160" width="1" height="1" fill="#2a2a2a"/>
<rect x="505" y="160" width="1" height="1" fill="#2a2a2a"/>
<rect x="513" y="160" width="1" height="1" fill="#2a2a2a"/>
<rect x="521" y="160" width="1" height="1" fill="#2a2a2a"/>
<rect x="529" y="160" width="1" height="1" fill="#2a2a2a"/>
<rect x="537" y="160" width="1" height="1" fill="#2a2a2a"/>
<rect x="545" y="160" width="1" height="1" fill="#2a2a2a"/>
<rect x="553" y="160" width="1" height="1" fill="#2a2a2a"/>
<rect x="561" y="160" width="1" height="1" fill="#2a2a2a"/>
<rect x="569" y="160" width="1" height="1" fill="#2a2a2a"/>
<rect x="578" y="160" width="1" height="1" fill="#2a2a2a"/>
<rect x="586" y="160" width="1" height="1" fill="#2a2a2a"/>
<rect x="594" y="160" width="1" height="1" fill="#2a2a2a"/>
<rect x="602" y="160" width="1" height="1" fill="#2a2a2a"/>
<rect x="610" y="160" width="1" height="1" fill="#2a2a2a"/>
<rect x="618" y="160" width="1" height="1" fill="#2a2a2a"/>
<rect x="626" y="160" width="1" height="1" fill="#2a2a2a"/>
<rect x="634" y="160" width="1" height="1" fill="#2a2a2a"/>
<rect x="642" y="160" width="1" height="1" fill="#2a2a2a"/>
<rect x="650" y="160" width="1" height="1" fill="#2a2a2a"/>
<rect x="658" y="160" width="1" height="1" fill="#2a2a2a"/>
<rect x="666" y="160" width="1" height="1" fill="#2a2a2a"/>
<rect x="675" y="160" width="1" height="1" fill="#2a2a2a"/>
<rect x="683" y="160" width="1" height="1" fill="#2a2a2a"/>
<rect x="691" y="160" width="1" height="1" fill="#2a2a2a"/>
<rect x="699" y="160" width="1" height="1" fill="#2a2a2a"/>
<rect x="707" y="160" width="1" height="1" fill="#2a2a2a"/>
<rect x="715" y="160" width="1" height="1" fill="#2a2a2a"/>
<rect x="723" y="160" width="1" height="1" fill="#2a2a2a"/>
<rect x="731" y="160" width="1" height="1" fill="#2a2a2a"/>
<rect x="739" y="160" width="1" height="1" fill="#2a2a2a"/>
<rect x="747" y="160" width="1" height="1" fill="#2a2a2a"/>
<rect x="755" y="160" width="1" height="1" fill="#2a2a2a"/>
<rect x="763" y="160" width="1" height="1" fill="#2a2a2a"/>
<rect x="771" y="160" width="1" height="1" fill="#2a2a2a"/>
<rect x="780" y="160" width="1" height="1" fill="#2a2a2a"/>
<rect x="788" y="160" width="1" height="1" fill="#2a2a2a"/>
<rect x="796" y="160" width="1" height="1" fill="#2a2a2a"/>
<rect x="804" y="160" width="1" height="1" fill="#2a2a2a"/>
<rect x="812" y="160" width="1" height="1" fill="#2a2a2a"/>
<rect x="820" y="160" width="1" height="1" fill="#2a2a2a"/>
<rect x="828" y="160" width="1" height="1" fill="#2a2a2a"/>
<rect x="836" y="160" width="1" height="1" fill="#2a2a2a"/>
<rect x="844" y="160" width="1" height="1" fill="#2a2a2a"/>
<rect x="852" y="160" width="1" height="1" fill="#2a2a2a"/>
<rect x="860" y="160" width="1" height="1" fill="#2a2a2a"/>
<rect x="868" y="160" width="1" height="1" fill="#2a2a2a"/>
<rect x="473" y="105" width="404" height="1" fill="#2a2a2a"/>
<rect x="675" y="17" width="1" height="176" fill="#2a2a2a"/>
<rect x="481" y="104" width="1" height="3" fill="#262626"/><rect x="481" y="105" width="1" height="1" fill="#444"/>
<rect x="489" y="104" width="1" height="3" fill="#262626"/><rect x="489" y="105" width="1" height="1" fill="#444"/>
<rect x="497" y="104" width="1" height="3" fill="#262626"/><rect x="497" y="105" width="1" height="1" fill="#444"/>
<rect x="505" y="104" width="1" height="3" fill="#262626"/><rect x="505" y="105" width="1" height="1" fill="#444"/>
<rect x="513" y="104" width="1" height="3" fill="#262626"/><rect x="513" y="105" width="1" height="1" fill="#444"/>
<rect x="521" y="104" width="1" height="3" fill="#262626"/><rect x="521" y="105" width="1" height="1" fill="#444"/>
<rect x="529" y="104" width="1" height="3" fill="#262626"/><rect x="529" y="105" width="1" height="1" fill="#444"/>
<rect x="537" y="104" width="1" height="3" fill="#262626"/><rect x="537" y="105" width="1" height="1" fill="#444"/>
<rect x="545" y="104" width="1" height="3" fill="#262626"/><rect x="545" y="105" width="1" height="1" fill="#444"/>
<rect x="553" y="104" width="1" height="3" fill="#262626"/><rect x="553" y="105" width="1" height="1" fill="#444"/>
<rect x="561" y="104" width="1" height="3" fill="#262626"/><rect x="561" y="105" width="1" height="1" fill="#444"/>
<rect x="569" y="104" width="1" height="3" fill="#262626"/><rect x="569" y="105" width="1" height="1" fill="#444"/>
<rect x="578" y="104" width="1" height="3" fill="#262626"/><rect x="578" y="105" width="1" height="1" fill="#444"/>
<rect x="586" y="104" width="1" height="3" fill="#262626"/><rect x="586" y="105" width="1" height="1" fill="#444"/>
<rect x="594" y="104" width="1" height="3" fill="#262626"/><rect x="594" y="105" width="1" height="1" fill="#444"/>
<rect x="602" y="104" width="1" height="3" fill="#262626"/><rect x="602" y="105" width="1" height="1" fill="#444"/>
<rect x="610" y="104" width="1" height="3" fill="#262626"/><rect x="610" y="105" width="1" height="1" fill="#444"/>
<rect x="618" y="104" width="1" height="3" fill="#262626"/><rect x="618" y="105" width="1" height="1" fill="#444"/>
<rect x="626" y="104" width="1" height="3" fill="#262626"/><rect x="626" y="105" width="1" height="1" fill="#444"/>
<rect x="634" y="104" width="1" height="3" fill="#262626"/><rect x="634" y="105" width="1" height="1" fill="#444"/>
<rect x="642" y="104" width="1" height="3" fill="#262626"/><rect x="642" y="105" width="1" height="1" fill="#444"/>
<rect x="650" y="104" width="1" height="3" fill="#262626"/><rect x="650" y="105" width="1" height="1" fill="#444"/>
<rect x="658" y="104" width="1" height="3" fill="#262626"/><rect x="658" y="105" width="1" height="1" fill="#444"/>
<rect x="666" y="104" width="1" height="3" fill="#262626"/><rect x="666" y="105" width="1" height="1" fill="#444"/>
<rect x="675" y="104" width="1" height="3" fill="#262626"/><rect x="675" y="105" width="1" height="1" fill="#444"/>
<rect x="683" y="104" width="1" height="3" fill="#262626"/><rect x="683" y="105" width="1" height="1" fill="#444"/>
<rect x="691" y="104" width="1" height="3" fill="#262626"/><rect x="691" y="105" width="1" height="1" fill="#444"/>
<rect x="699" y="104" width="1" height="3" fill="#262626"/><rect x="699" y="105" width="1" height="1" fill="#444"/>
<rect x="707" y="104" width="1" height="3" fill="#262626"/><rect x="707" y="105" width="1" height="1" fill="#444"/>
<rect x="715" y="104" width="1" height="3" fill="#262626"/><rect x="715" y="105" width="1" height="1" fill="#444"/>
<rect x="723" y="104" width="1" height="3" fill="#262626"/><rect x="723" y="105" width="1" height="1" fill="#444"/>
<rect x="731" y="104" width="1" height="3" fill="#262626"/><rect x="731" y="105" width="1" height="1" fill="#444"/>
<rect x="739" y="104" width="1" height="3" fill="#262626"/><rect x="739" y="105" width="1" height="1" fill="#444"/>
<rect x="747" y="104" width="1" height="3" fill="#262626"/><rect x="747" y="105" width="1" height="1" fill="#444"/>
<rect x="755" y="104" width="1" height="3" fill="#262626"/><rect x="755" y="105" width="1" height="1" fill="#444"/>
<rect x="763" y="104" width="1" height="3" fill="#262626"/><rect x="763" y="105" width="1" height="1" fill="#444"/>
<rect x="771" y="104" width="1" height="3" fill="#262626"/><rect x="771" y="105" width="1" height="1" fill="#444"/>
<rect x="780" y="104" width="1" height="3" fill="#262626"/><rect x="780" y="105" width="1" height="1" fill="#444"/>
<rect x="788" y="104" width="1" height="3" fill="#262626"/><rect x="788" y="105" width="1" height="1" fill="#444"/>
<rect x="796" y="104" width="1" height="3" fill="#262626"/><rect x="796" y="105" width="1" height="1" fill="#444"/>
<rect x="804" y="104" width="1" height="3" fill="#262626"/><rect x="804" y="105" width="1" height="1" fill="#444"/>
<rect x="812" y="104" width="1" height="3" fill="#262626"/><rect x="812" y="105" width="1" height="1" fill="#444"/>
<rect x="820" y="104" width="1" height="3" fill="#262626"/><rect x="820" y="105" width="1" height="1" fill="#444"/>
<rect x="828" y="104" width="1" height="3" fill="#262626"/><rect x="828" y="105" width="1" height="1" fill="#444"/>
<rect x="836" y="104" width="1" height="3" fill="#262626"/><rect x="836" y="105" width="1" height="1" fill="#444"/>
<rect x="844" y="104" width="1" height="3" fill="#262626"/><rect x="844" y="105" width="1" height="1" fill="#444"/>
<rect x="852" y="104" width="1" height="3" fill="#262626"/><rect x="852" y="105" width="1" height="1" fill="#444"/>
<rect x="860" y="104" width="1" height="3" fill="#262626"/><rect x="860" y="105" width="1" height="1" fill="#444"/>
<rect x="868" y="104" width="1" height="3" fill="#262626"/><rect x="868" y="105" width="1" height="1" fill="#444"/>
<rect x="674" y="21" width="3" height="1" fill="#262626"/><rect x="675" y="21" width="1" height="1" fill="#444"/>
<rect x="674" y="25" width="3" height="1" fill="#262626"/><rect x="675" y="25" width="1" height="1" fill="#444"/>
<rect x="674" y="30" width="3" height="1" fill="#262626"/><rect x="675" y="30" width="1" height="1" fill="#444"/>
<rect x="674" y="34" width="3" height="1" fill="#262626"/><rect x="675" y="34" width="1" height="1" fill="#444"/>
<rect x="674" y="39" width="3" height="1" fill="#262626"/><rect x="675" y="39" width="1" height="1" fill="#444"/>
<rect x="674" y="43" width="3" height="1" fill="#262626"/><rect x="675" y="43" width="1" height="1" fill="#444"/>
<rect x="674" y="47" width="3" height="1" fill="#262626"/><rect x="675" y="47" width="1" height="1" fill="#444"/>
<rect x="674" y="52" width="3" height="1" fill="#262626"/><rect x="675" y="52" width="1" height="1" fill="#444"/>
<rect x="674" y="56" width="3" height="1" fill="#262626"/><rect x="675" y="56" width="1" height="1" fill="#444"/>
<rect x="674" y="61" width="3" height="1" fill="#262626"/><rect x="675" y="61" width="1" height="1" fill="#444"/>
<rect x="674" y="65" width="3" height="1" fill="#262626"/><rect x="675" y="65" width="1" height="1" fill="#444"/>
<rect x="674" y="69" width="3" height="1" fill="#262626"/><rect x="675" y="69" width="1" height="1" fill="#444"/>
<rect x="674" y="74" width="3" height="1" fill="#262626"/><rect x="675" y="74" width="1" height="1" fill="#444"/>
<rect x="674" y="78" width="3" height="1" fill="#262626"/><rect x="675" y="78" width="1" height="1" fill="#444"/>
<rect x="674" y="83" width="3" height="1" fill="#262626"/><rect x="675" y="83" width="1" height="1" fill="#444"/>
<rect x="674" y="87" width="3" height="1" fill="#262626"/><rect x="675" y="87" width="1" height="1" fill="#444"/>
<rect x="674" y="91" width="3" height="1" fill="#262626"/><rect x="675" y="91" width="1" height="1" fill="#444"/>
<rect x="674" y="96" width="3" height="1" fill="#262626"/><rect x="675" y="96" width="1" height="1" fill="#444"/>
<rect x="674" y="100" width="3" height="1" fill="#262626"/><rect x="675" y="100" width="1" height="1" fill="#444"/>
<rect x="674" y="105" width="3" height="1" fill="#262626"/><rect x="675" y="105" width="1" height="1" fill="#444"/>
<rect x="674" y="109" width="3" height="1" fill="#262626"/><rect x="675" y="109" width="1" height="1" fill="#444"/>
<rect x="674" y="113" width="3" height="1" fill="#262626"/><rect x="675" y="113" width="1" height="1" fill="#444"/>
<rect x="674" y="118" width="3" height="1" fill="#262626"/><rect x="675" y="118" width="1" height="1" fill="#444"/>
<rect x="674" y="122" width="3" height="1" fill="#262626"/><rect x="675" y="122" width="1" height="1" fill="#444"/>
<rect x="674" y="127" width="3" height="1" fill="#262626"/><rect x="675" y="127" width="1" height="1" fill="#444"/>
<rect x="674" y="131" width="3" height="1" fill="#262626"/><rect x="675" y="131" width="1" height="1" fill="#444"/>
<rect x="674" y="135" width="3" height="1" fill="#262626"/><rect x="675" y="135" width="1" height="1" fill="#444"/>
<rect x="674" y="140" width="3" height="1" fill="#262626"/><rect x="675" y="140" width="1" height="1" fill="#444"/>
<rect x="674" y="144" width="3" height="1" fill="#262626"/><rect x="675" y="144" width="1" height="1" fill="#444"/>
<rect x="674" y="149" width="3" height="1" fill="#262626"/><rect x="675" y="149" width="1" height="1" fill="#444"/>
<rect x="674" y="153" width="3" height="1" fill="#262626"/><rect x="675" y="153" width="1" height="1" fill="#444"/>
<rect x="674" y="157" width="3" height="1" fill="#262626"/><rect x="675" y="157" width="1" height="1" fill="#444"/>
<rect x="674" y="162" width="3" height="1" fill="#262626"/><rect x="675" y="162" width="1" height="1" fill="#444"/>
<rect x="674" y="166" width="3" height="1" fill="#262626"/><rect x="675" y="166" width="1" height="1" fill="#444"/>
<rect x="674" y="171" width="3" height="1" fill="#262626"/><rect x="675" y="171" width="1" height="1" fill="#444"/>
<rect x="674" y="175" width="3" height="1" fill="#262626"/><rect x="675" y="175" width="1" height="1" fill="#444"/>
<rect x="674" y="179" width="3" height="1" fill="#262626"/><rect x="675" y="179" width="1" height="1" fill="#444"/>
<rect x="674" y="184" width="3" height="1" fill="#262626"/><rect x="675" y="184" width="1" height="1" fill="#444"/>
<rect x="674" y="188" width="3" height="1" fill="#262626"/><rect x="675" y="188" width="1" height="1" fill="#444"/>
<rect x="513" y="39" width="1" height="1" fill="#2c2c2c"/>
<rect x="513" y="61" width="1" height="1" fill="#2c2c2c"/>
<rect x="513" y="83" width="1" height="1" fill="#2c2c2c"/>
<rect x="513" y="105" width="1" height="1" fill="#2c2c2c"/>
<rect x="513" y="127" width="1" height="1" fill="#2c2c2c"/>
<rect x="513" y="149" width="1" height="1" fill="#2c2c2c"/>
<rect x="513" y="171" width="1" height="1" fill="#2c2c2c"/>
<rect x="554" y="39" width="1" height="1" fill="#2c2c2c"/>
<rect x="554" y="61" width="1" height="1" fill="#2c2c2c"/>
<rect x="554" y="83" width="1" height="1" fill="#2c2c2c"/>
<rect x="554" y="105" width="1" height="1" fill="#2c2c2c"/>
<rect x="554" y="127" width="1" height="1" fill="#2c2c2c"/>
<rect x="554" y="149" width="1" height="1" fill="#2c2c2c"/>
<rect x="554" y="171" width="1" height="1" fill="#2c2c2c"/>
<rect x="594" y="39" width="1" height="1" fill="#2c2c2c"/>
<rect x="594" y="61" width="1" height="1" fill="#2c2c2c"/>
<rect x="594" y="83" width="1" height="1" fill="#2c2c2c"/>
<rect x="594" y="105" width="1" height="1" fill="#2c2c2c"/>
<rect x="594" y="127" width="1" height="1" fill="#2c2c2c"/>
<rect x="594" y="149" width="1" height="1" fill="#2c2c2c"/>
<rect x="594" y="171" width="1" height="1" fill="#2c2c2c"/>
<rect x="635" y="39" width="1" height="1" fill="#2c2c2c"/>
<rect x="635" y="61" width="1" height="1" fill="#2c2c2c"/>
<rect x="635" y="83" width="1" height="1" fill="#2c2c2c"/>
<rect x="635" y="105" width="1" height="1" fill="#2c2c2c"/>
<rect x="635" y="127" width="1" height="1" fill="#2c2c2c"/>
<rect x="635" y="149" width="1" height="1" fill="#2c2c2c"/>
<rect x="635" y="171" width="1" height="1" fill="#2c2c2c"/>
<rect x="675" y="39" width="1" height="1" fill="#2c2c2c"/>
<rect x="675" y="61" width="1" height="1" fill="#2c2c2c"/>
<rect x="675" y="83" width="1" height="1" fill="#2c2c2c"/>
<rect x="675" y="105" width="1" height="1" fill="#2c2c2c"/>
<rect x="675" y="127" width="1" height="1" fill="#2c2c2c"/>
<rect x="675" y="149" width="1" height="1" fill="#2c2c2c"/>
<rect x="675" y="171" width="1" height="1" fill="#2c2c2c"/>
<rect x="715" y="39" width="1" height="1" fill="#2c2c2c"/>
<rect x="715" y="61" width="1" height="1" fill="#2c2c2c"/>
<rect x="715" y="83" width="1" height="1" fill="#2c2c2c"/>
<rect x="715" y="105" width="1" height="1" fill="#2c2c2c"/>
<rect x="715" y="127" width="1" height="1" fill="#2c2c2c"/>
<rect x="715" y="149" width="1" height="1" fill="#2c2c2c"/>
<rect x="715" y="171" width="1" height="1" fill="#2c2c2c"/>
<rect x="756" y="39" width="1" height="1" fill="#2c2c2c"/>
<rect x="756" y="61" width="1" height="1" fill="#2c2c2c"/>
<rect x="756" y="83" width="1" height="1" fill="#2c2c2c"/>
<rect x="756" y="105" width="1" height="1" fill="#2c2c2c"/>
<rect x="756" y="127" width="1" height="1" fill="#2c2c2c"/>
<rect x="756" y="149" width="1" height="1" fill="#2c2c2c"/>
<rect x="756" y="171" width="1" height="1" fill="#2c2c2c"/>
<rect x="796" y="39" width="1" height="1" fill="#2c2c2c"/>
<rect x="796" y="61" width="1" height="1" fill="#2c2c2c"/>
<rect x="796" y="83" width="1" height="1" fill="#2c2c2c"/>
<rect x="796" y="105" width="1" height="1" fill="#2c2c2c"/>
<rect x="796" y="127" width="1" height="1" fill="#2c2c2c"/>
<rect x="796" y="149" width="1" height="1" fill="#2c2c2c"/>
<rect x="796" y="171" width="1" height="1" fill="#2c2c2c"/>
<rect x="837" y="39" width="1" height="1" fill="#2c2c2c"/>
<rect x="837" y="61" width="1" height="1" fill="#2c2c2c"/>
<rect x="837" y="83" width="1" height="1" fill="#2c2c2c"/>
<rect x="837" y="105" width="1" height="1" fill="#2c2c2c"/>
<rect x="837" y="127" width="1" height="1" fill="#2c2c2c"/>
<rect x="837" y="149" width="1" height="1" fill="#2c2c2c"/>
<rect x="837" y="171" width="1" height="1" fill="#2c2c2c"/>
<rect x="473.5" y="17.5" width="404" height="176" fill="none" stroke="#353535" stroke-width="1"/>
<rect x="513" y="208" width="1" height="176" fill="#1f1f1f"/>
<rect x="554" y="208" width="1" height="176" fill="#1f1f1f"/>
<rect x="594" y="208" width="1" height="176" fill="#1f1f1f"/>
<rect x="635" y="208" width="1" height="176" fill="#1f1f1f"/>
<rect x="715" y="208" width="1" height="176" fill="#1f1f1f"/>
<rect x="756" y="208" width="1" height="176" fill="#1f1f1f"/>
<rect x="796" y="208" width="1" height="176" fill="#1f1f1f"/>
<rect x="837" y="208" width="1" height="176" fill="#1f1f1f"/>
<rect x="473" y="230" width="404" height="1" fill="#1f1f1f"/>
<rect x="473" y="252" width="404" height="1" fill="#1f1f1f"/>
<rect x="473" y="274" width="404" height="1" fill="#1f1f1f"/>
<rect x="473" y="318" width="404" height="1" fill="#1f1f1f"/>
<rect x="473" y="340" width="404" height="1" fill="#1f1f1f"/>
<rect x="473" y="362" width="404" height="1" fill="#1f1f1f"/>
<rect x="481" y="241" width="1" height="1" fill="#2a2a2a"/>
<rect x="489" y="241" width="1" height="1" fill="#2a2a2a"/>
<rect x="497" y="241" width="1" height="1" fill="#2a2a2a"/>
<rect x="505" y="241" width="1" height="1" fill="#2a2a2a"/>
<rect x="513" y="241" width="1" height="1" fill="#2a2a2a"/>
<rect x="521" y="241" width="1" height="1" fill="#2a2a2a"/>
<rect x="529" y="241" width="1" height="1" fill="#2a2a2a"/>
<rect x="537" y="241" width="1" height="1" fill="#2a2a2a"/>
<rect x="545" y="241" width="1" height="1" fill="#2a2a2a"/>
<rect x="553" y="241" width="1" height="1" fill="#2a2a2a"/>
<rect x="561" y="241" width="1" height="1" fill="#2a2a2a"/>
<rect x="569" y="241" width="1" height="1" fill="#2a2a2a"/>
<rect x="578" y="241" width="1" height="1" fill="#2a2a2a"/>
<rect x="586" y="241" width="1" height="1" fill="#2a2a2a"/>
<rect x="594" y="241" width="1" height="1" fill="#2a2a2a"/>
<rect x="602" y="241" width="1" height="1" fill="#2a2a2a"/>
<rect x="610" y="241" width="1" height="1" fill="#2a2a2a"/>
<rect x="618" y="241" width="1" height="1" fill="#2a2a2a"/>
<rect x="626" y="241" width="1" height="1" fill="#2a2a2a"/>
<rect x="634" y="241" width="1" height="1" fill="#2a2a2a"/>
<rect x="642" y="241" width="1" height="1" fill="#2a2a2a"/>
<rect x="650" y="241" width="1" height="1" fill="#2a2a2a"/>
<rect x="658" y="241" width="1" height="1" fill="#2a2a2a"/>
<rect x="666" y="241" width="1" height="1" fill="#2a2a2a"/>
<rect x="675" y="241" width="1" height="1" fill="#2a2a2a"/>
<rect x="683" y="241" width="1" height="1" fill="#2a2a2a"/>
<rect x="691" y="241" width="1" height="1" fill="#2a2a2a"/>
<rect x="699" y="241" width="1" height="1" fill="#2a2a2a"/>
<rect x="707" y="241" width="1" height="1" fill="#2a2a2a"/>
<rect x="715" y="241" width="1" height="1" fill="#2a2a2a"/>
<rect x="723" y="241" width="1" height="1" fill="#2a2a2a"/>
<rect x="731" y="241" width="1" height="1" fill="#2a2a2a"/>
<rect x="739" y="241" width="1" height="1" fill="#2a2a2a"/>
<rect x="747" y="241" width="1" height="1" fill="#2a2a2a"/>
<rect x="755" y="241" width="1" height="1" fill="#2a2a2a"/>
<rect x="763" y="241" width="1" height="1" fill="#2a2a2a"/>
<rect x="771" y="241" width="1" height="1" fill="#2a2a2a"/>
<rect x="780" y="241" width="1" height="1" fill="#2a2a2a"/>
<rect x="788" y="241" width="1" height="1" fill="#2a2a2a"/>
<rect x="796" y="241" width="1" height="1" fill="#2a2a2a"/>
<rect x="804" y="241" width="1" height="1" fill="#2a2a2a"/>
<rect x="812" y="241" width="1" height="1" fill="#2a2a2a"/>
<rect x="820" y="241" width="1" height="1" fill="#2a2a2a"/>
<rect x="828" y="241" width="1" height="1" fill="#2a2a2a"/>
<rect x="836" y="241" width="1" height="1" fill="#2a2a2a"/>
<rect x="844" y="241" width="1" height="1" fill="#2a2a2a"/>
<rect x="852" y="241" width="1" height="1" fill="#2a2a2a"/>
<rect x="860" y="241" width="1" height="1" fill="#2a2a2a"/>
<rect x="868" y="241" width="1" height="1" fill="#2a2a2a"/>
<rect x="481" y="351" width="1" height="1" fill="#2a2a2a"/>
<rect x="489" y="351" width="1" height="1" fill="#2a2a2a"/>
<rect x="497" y="351" width="1" height="1" fill="#2a2a2a"/>
<rect x="505" y="351" width="1" height="1" fill="#2a2a2a"/>
<rect x="513" y="351" width="1" height="1" fill="#2a2a2a"/>
<rect x="521" y="351" width="1" height="1" fill="#2a2a2a"/>
<rect x="529" y="351" width="1" height="1" fill="#2a2a2a"/>
<rect x="537" y="351" width="1" height="1" fill="#2a2a2a"/>
<rect x="545" y="351" width="1" height="1" fill="#2a2a2a"/>
<rect x="553" y="351" width="1" height="1" fill="#2a2a2a"/>
<rect x="561" y="351" width="1" height="1" fill="#2a2a2a"/>
<rect x="569" y="351" width="1" height="1" fill="#2a2a2a"/>
<rect x="578" y="351" width="1" height="1" fill="#2a2a2a"/>
<rect x="586" y="351" width="1" height="1" fill="#2a2a2a"/>
<rect x="594" y="351" width="1" height="1" fill="#2a2a2a"/>
<rect x="602" y="351" width="1" height="1" fill="#2a2a2a"/>
<rect x="610" y="351" width="1" height="1" fill="#2a2a2a"/>
<rect x="618" y="351" width="1" height="1" fill="#2a2a2a"/>
<rect x="626" y="351" width="1" height="1" fill="#2a2a2a"/>
<rect x="634" y="351" width="1" height="1" fill="#2a2a2a"/>
<rect x="642" y="351" width="1" height="1" fill="#2a2a2a"/>
<rect x="650" y="351" width="1" height="1" fill="#2a2a2a"/>
<rect x="658" y="351" width="1" height="1" fill="#2a2a2a"/>
<rect x="666" y="351" width="1" height="1" fill="#2a2a2a"/>
<rect x="675" y="351" width="1" height="1" fill="#2a2a2a"/>
<rect x="683" y="351" width="1" height="1" fill="#2a2a2a"/>
<rect x="691" y="351" width="1" height="1" fill="#2a2a2a"/>
<rect x="699" y="351" width="1" height="1" fill="#2a2a2a"/>
<rect x="707" y="351" width="1" height="1" fill="#2a2a2a"/>
<rect x="715" y="351" width="1" height="1" fill="#2a2a2a"/>
<rect x="723" y="351" width="1" height="1" fill="#2a2a2a"/>
<rect x="731" y="351" width="1" height="1" fill="#2a2a2a"/>
<rect x="739" y="351" width="1" height="1" fill="#2a2a2a"/>
<rect x="747" y="351" width="1" height="1" fill="#2a2a2a"/>
<rect x="755" y="351" width="1" height="1" fill="#2a2a2a"/>
<rect x="763" y="351" width="1" height="1" fill="#2a2a2a"/>
<rect x="771" y="351" width="1" height="1" fill="#2a2a2a"/>
<rect x="780" y="351" width="1" height="1" fill="#2a2a2a"/>
<rect x="788" y="351" width="1" height="1" fill="#2a2a2a"/>
<rect x="796" y="351" width="1" height="1" fill="#2a2a2a"/>
<rect x="804" y="351" width="1" height="1" fill="#2a2a2a"/>
<rect x="812" y="351" width="1" height="1" fill="#2a2a2a"/>
<rect x="820" y="351" width="1" height="1" fill="#2a2a2a"/>
<rect x="828" y="351" width="1" height="1" fill="#2a2a2a"/>
<rect x="836" y="351" width="1" height="1" fill="#2a2a2a"/>
<rect x="844" y="351" width="1" height="1" fill="#2a2a2a"/>
<rect x="852" y="351" width="1" height="1" fill="#2a2a2a"/>
<rect x="860" y="351" width="1" height="1" fill="#2a2a2a"/>
<rect x="868" y="351" width="1" height="1" fill="#2a2a2a"/>
<rect x="473" y="296" width="404" height="1" fill="#2a2a2a"/>
<rect x="675" y="208" width="1" height="176" fill="#2a2a2a"/>
<rect x="481" y="295" width="1" height="3" fill="#262626"/><rect x="481" y="296" width="1" height="1" fill="#444"/>
<rect x="489" y="295" width="1" height="3" fill="#262626"/><rect x="489" y="296" width="1" height="1" fill="#444"/>
<rect x="497" y="295" width="1" height="3" fill="#262626"/><rect x="497" y="296" width="1" height="1" fill="#444"/>
<rect x="505" y="295" width="1" height="3" fill="#262626"/><rect x="505" y="296" width="1" height="1" fill="#444"/>
<rect x="513" y="295" width="1" height="3" fill="#262626"/><rect x="513" y="296" width="1" height="1" fill="#444"/>
<rect x="521" y="295" width="1" height="3" fill="#262626"/><rect x="521" y="296" width="1" height="1" fill="#444"/>
<rect x="529" y="295" width="1" height="3" fill="#262626"/><rect x="529" y="296" width="1" height="1" fill="#444"/>
<rect x="537" y="295" width="1" height="3" fill="#262626"/><rect x="537" y="296" width="1" height="1" fill="#444"/>
<rect x="545" y="295" width="1" height="3" fill="#262626"/><rect x="545" y="296" width="1" height="1" fill="#444"/>
<rect x="553" y="295" width="1" height="3" fill="#262626"/><rect x="553" y="296" width="1" height="1" fill="#444"/>
<rect x="561" y="295" width="1" height="3" fill="#262626"/><rect x="561" y="296" width="1" height="1" fill="#444"/>
<rect x="569" y="295" width="1" height="3" fill="#262626"/><rect x="569" y="296" width="1" height="1" fill="#444"/>
<rect x="578" y="295" width="1" height="3" fill="#262626"/><rect x="578" y="296" width="1" height="1" fill="#444"/>
<rect x="586" y="295" width="1" height="3" fill="#262626"/><rect x="586" y="296" width="1" height="1" fill="#444"/>
<rect x="594" y="295" width="1" height="3" fill="#262626"/><rect x="594" y="296" width="1" height="1" fill="#444"/>
<rect x="602" y="295" width="1" height="3" fill="#262626"/><rect x="602" y="296" width="1" height="1" fill="#444"/>
<rect x="610" y="295" width="1" height="3" fill="#262626"/><rect x="610" y="296" width="1" height="1" fill="#444"/>
<rect x="618" y="295" width="1" height="3" fill="#262626"/><rect x="618" y="296" width="1" height="1" fill="#444"/>
<rect x="626" y="295" width="1" height="3" fill="#262626"/><rect x="626" y="296" width="1" height="1" fill="#444"/>
<rect x="634" y="295" width="1" height="3" fill="#262626"/><rect x="634" y="296" width="1" height="1" fill="#444"/>
<rect x="642" y="295" width="1" height="3" fill="#262626"/><rect x="642" y="296" width="1" height="1" fill="#444"/>
<rect x="650" y="295" width="1" height="3" fill="#262626"/><rect x="650" y="296" width="1" height="1" fill="#444"/>
<rect x="658" y="295" width="1" height="3" fill="#262626"/><rect x="658" y="296" width="1" height="1" fill="#444"/>
<rect x="666" y="295" width="1" height="3" fill="#262626"/><rect x="666" y="296" width="1" height="1" fill="#444"/>
<rect x="675" y="295" width="1" height="3" fill="#262626"/><rect x="675" y="296" width="1" height="1" fill="#444"/>
<rect x="683" y="295" width="1" height="3" fill="#262626"/><rect x="683" y="296" width="1" height="1" fill="#444"/>
<rect x="691" y="295" width="1" height="3" fill="#262626"/><rect x="691" y="296" width="1" height="1" fill="#444"/>
<rect x="699" y="295" width="1" height="3" fill="#262626"/><rect x="699" y="296" width="1" height="1" fill="#444"/>
<rect x="707" y="295" width="1" height="3" fill="#262626"/><rect x="707" y="296" width="1" height="1" fill="#444"/>
<rect x="715" y="295" width="1" height="3" fill="#262626"/><rect x="715" y="296" width="1" height="1" fill="#444"/>
<rect x="723" y="295" width="1" height="3" fill="#262626"/><rect x="723" y="296" width="1" height="1" fill="#444"/>
<rect x="731" y="295" width="1" height="3" fill="#262626"/><rect x="731" y="296" width="1" height="1" fill="#444"/>
<rect x="739" y="295" width="1" height="3" fill="#262626"/><rect x="739" y="296" width="1" height="1" fill="#444"/>
<rect x="747" y="295" width="1" height="3" fill="#262626"/><rect x="747" y="296" width="1" height="1" fill="#444"/>
<rect x="755" y="295" width="1" height="3" fill="#262626"/><rect x="755" y="296" width="1" height="1" fill="#444"/>
<rect x="763" y="295" width="1" height="3" fill="#262626"/><rect x="763" y="296" width="1" height="1" fill="#444"/>
<rect x="771" y="295" width="1" height="3" fill="#262626"/><rect x="771" y="296" width="1" height="1" fill="#444"/>
<rect x="780" y="295" width="1" height="3" fill="#262626"/><rect x="780" y="296" width="1" height="1" fill="#444"/>
<rect x="788" y="295" width="1" height="3" fill="#262626"/><rect x="788" y="296" width="1" height="1" fill="#444"/>
<rect x="796" y="295" width="1" height="3" fill="#262626"/><rect x="796" y="296" width="1" height="1" fill="#444"/>
<rect x="804" y="295" width="1" height="3" fill="#262626"/><rect x="804" y="296" width="1" height="1" fill="#444"/>
<rect x="812" y="295" width="1" height="3" fill="#262626"/><rect x="812" y="296" width="1" height="1" fill="#444"/>
<rect x="820" y="295" width="1" height="3" fill="#262626"/><rect x="820" y="296" width="1" height="1" fill="#444"/>
<rect x="828" y="295" width="1" height="3" fill="#262626"/><rect x="828" y="296" width="1" height="1" fill="#444"/>
<rect x="836" y="295" width="1" height="3" fill="#262626"/><rect x="836" y="296" width="1" height="1" fill="#444"/>
<rect x="844" y="295" width="1" height="3" fill="#262626"/><rect x="844" y="296" width="1" height="1" fill="#444"/>
<rect x="852" y="295" width="1" height="3" fill="#262626"/><rect x="852" y="296" width="1" height="1" fill="#444"/>
<rect x="860" y="295" width="1" height="3" fill="#262626"/><rect x="860" y="296" width="1" height="1" fill="#444"/>
<rect x="868" y="295" width="1" height="3" fill="#262626"/><rect x="868" y="296" width="1" height="1" fill="#444"/>
<rect x="674" y="212" width="3" height="1" fill="#262626"/><rect x="675" y="212" width="1" height="1" fill="#444"/>
<rect x="674" y="216" width="3" height="1" fill="#262626"/><rect x="675" y="216" width="1" height="1" fill="#444"/>
<rect x="674" y="221" width="3" height="1" fill="#262626"/><rect x="675" y="221" width="1" height="1" fill="#444"/>
<rect x="674" y="225" width="3" height="1" fill="#262626"/><rect x="675" y="225" width="1" height="1" fill="#444"/>
<rect x="674" y="230" width="3" height="1" fill="#262626"/><rect x="675" y="230" width="1" height="1" fill="#444"/>
<rect x="674" y="234" width="3" height="1" fill="#262626"/><rect x="675" y="234" width="1" height="1" fill="#444"/>
<rect x="674" y="238" width="3" height="1" fill="#262626"/><rect x="675" y="238" width="1" height="1" fill="#444"/>
<rect x="674" y="243" width="3" height="1" fill="#262626"/><rect x="675" y="243" width="1" height="1" fill="#444"/>
<rect x="674" y="247" width="3" height="1" fill="#262626"/><rect x="675" y="247" width="1" height="1" fill="#444"/>
<rect x="674" y="252" width="3" height="1" fill="#262626"/><rect x="675" y="252" width="1" height="1" fill="#444"/>
<rect x="674" y="256" width="3" height="1" fill="#262626"/><rect x="675" y="256" width="1" height="1" fill="#444"/>
<rect x="674" y="260" width="3" height="1" fill="#262626"/><rect x="675" y="260" width="1" height="1" fill="#444"/>
<rect x="674" y="265" width="3" height="1" fill="#262626"/><rect x="675" y="265" width="1" height="1" fill="#444"/>
<rect x="674" y="269" width="3" height="1" fill="#262626"/><rect x="675" y="269" width="1" height="1" fill="#444"/>
<rect x="674" y="274" width="3" height="1" fill="#262626"/><rect x="675" y="274" width="1" height="1" fill="#444"/>
<rect x="674" y="278" width="3" height="1" fill="#262626"/><rect x="675" y="278" width="1" height="1" fill="#444"/>
<rect x="674" y="282" width="3" height="1" fill="#262626"/><rect x="675" y="282" width="1" height="1" fill="#444"/>
<rect x="674" y="287" width="3" height="1" fill="#262626"/><rect x="675" y="287" width="1" height="1" fill="#444"/>
<rect x="674" y="291" width="3" height="1" fill="#262626"/><rect x="675" y="291" width="1" height="1" fill="#444"/>
<rect x="674" y="296" width="3" height="1" fill="#262626"/><rect x="675" y="296" width="1" height="1" fill="#444"/>
<rect x="674" y="300" width="3" height="1" fill="#262626"/><rect x="675" y="300" width="1" height="1" fill="#444"/>
<rect x="674" y="304" width="3" height="1" fill="#262626"/><rect x="675" y="304" width="1" height="1" fill="#444"/>
<rect x="674" y="309" width="3" height="1" fill="#262626"/><rect x="675" y="309" width="1" height="1" fill="#444"/>
<rect x="674" y="313" width="3" height="1" fill="#262626"/><rect x="675" y="313" width="1" height="1" fill="#444"/>
<rect x="674" y="318" width="3" height="1" fill="#262626"/><rect x="675" y="318" width="1" height="1" fill="#444"/>
<rect x="674" y="322" width="3" height="1" fill="#262626"/><rect x="675" y="322" width="1" height="1" fill="#444"/>
<rect x="674" y="326" width="3" height="1" fill="#262626"/><rect x="675" y="326" width="1" height="1" fill="#444"/>
<rect x="674" y="331" width="3" height="1" fill="#262626"/><rect x="675" y="331" width="1" height="1" fill="#444"/>
<rect x="674" y="335" width="3" height="1" fill="#262626"/><rect x="675" y="335" width="1" height="1" fill="#444"/>
<rect x="674" y="340" width="3" height="1" fill="#262626"/><rect x="675" y="340" width="1" height="1" fill="#444"/>
<rect x="674" y="344" width="3" height="1" fill="#262626"/><rect x="675" y="344" width="1" height="1" fill="#444"/>
<rect x="674" y="348" width="3" height="1" fill="#262626"/><rect x="675" y="348" width="1" height="1" fill="#444"/>
<rect x="674" y="353" width="3" height="1" fill="#262626"/><rect x="675" y="353" width="1" height="1" fill="#444"/>
<rect x="674" y="357" width="3" height="1" fill="#262626"/><rect x="675" y="357" width="1" height="1" fill="#444"/>
<rect x="674" y="362" width="3" height="1" fill="#262626"/><rect x="675" y="362" width="1" height="1" fill="#444"/>
<rect x="674" y="366" width="3" height="1" fill="#262626"/><rect x="675" y="366" width="1" height="1" fill="#444"/>
<rect x="674" y="370" width="3" height="1" fill="#262626"/><rect x="675" y="370" width="1" height="1" fill="#444"/>
<rect x="674" y="375" width="3" height="1" fill="#262626"/><rect x="675" y="375" width="1" height="1" fill="#444"/>
<rect x="674" y="379" width="3" height="1" fill="#262626"/><rect x="675" y="379" width="1" height="1" fill="#444"/>
<rect x="513" y="230" width="1" height="1" fill="#2c2c2c"/>
<rect x="513" y="252" width="1" height="1" fill="#2c2c2c"/>
<rect x="513" y="274" width="1" height="1" fill="#2c2c2c"/>
<rect x="513" y="296" width="1" height="1" fill="#2c2c2c"/>
<rect x="513" y="318" width="1" height="1" fill="#2c2c2c"/>
<rect x="513" y="340" width="1" height="1" fill="#2c2c2c"/>
<rect x="513" y="362" width="1" height="1" fill="#2c2c2c"/>
<rect x="554" y="230" width="1" height="1" fill="#2c2c2c"/>
<rect x="554" y="252" width="1" height="1" fill="#2c2c2c"/>
<rect x="554" y="274" width="1" height="1" fill="#2c2c2c"/>
<rect x="554" y="296" width="1" height="1" fill="#2c2c2c"/>
<rect x="554" y="318" width="1" height="1" fill="#2c2c2c"/>
<rect x="554" y="340" width="1" height="1" fill="#2c2c2c"/>
<rect x="554" y="362" width="1" height="1" fill="#2c2c2c"/>
<rect x="594" y="230" width="1" height="1" fill="#2c2c2c"/>
<rect x="594" y="252" width="1" height="1" fill="#2c2c2c"/>
<rect x="594" y="274" width="1" height="1" fill="#2c2c2c"/>
<rect x="594" y="296" width="1" height="1" fill="#2c2c2c"/>
<rect x="594" y="318" width="1" height="1" fill="#2c2c2c"/>
<rect x="594" y="340" width="1" height="1" fill="#2c2c2c"/>
<rect x="594" y="362" width="1" height="1" fill="#2c2c2c"/>
<rect x="635" y="230" width="1" height="1" fill="#2c2c2c"/>
<rect x="635" y="252" width="1" height="1" fill="#2c2c2c"/>
<rect x="635" y="274" width="1" height="1" fill="#2c2c2c"/>
<rect x="635" y="296" width="1" height="1" fill="#2c2c2c"/>
<rect x="635" y="318" width="1" height="1" fill="#2c2c2c"/>
<rect x="635" y="340" width="1" height="1" fill="#2c2c2c"/>
<rect x="635" y="362" width="1" height="1" fill="#2c2c2c"/>
<rect x="675" y="230" width="1" height="1" fill="#2c2c2c"/>
<rect x="675" y="252" width="1" height="1" fill="#2c2c2c"/>
<rect x="675" y="274" width="1" height="1" fill="#2c2c2c"/>
<rect x="675" y="296" width="1" height="1" fill="#2c2c2c"/>
<rect x="675" y="318" width="1" height="1" fill="#2c2c2c"/>
<rect x="675" y="340" width="1" height="1" fill="#2c2c2c"/>
<rect x="675" y="362" width="1" height="1" fill="#2c2c2c"/>
<rect x="715" y="230" width="1" height="1" fill="#2c2c2c"/>
<rect x="715" y="252" width="1" height="1" fill="#2c2c2c"/>
<rect x="715" y="274" width="1" height="1" fill="#2c2c2c"/>
<rect x="715" y="296" width="1" height="1" fill="#2c2c2c"/>
<rect x="715" y="318" width="1" height="1" fill="#2c2c2c"/>
<rect x="715" y="340" width="1" height="1" fill="#2c2c2c"/>
<rect x="715" y="362" width="1" height="1" fill="#2c2c2c"/>
<rect x="756" y="230" width="1" height="1" fill="#2c2c2c"/>
<rect x="756" y="252" width="1" height="1" fill="#2c2c2c"/>
<rect x="756" y="274" width="1" height="1" fill="#2c2c2c"/>
<rect x="756" y="296" width="1" height="1" fill="#2c2c2c"/>
<rect x="756" y="318" width="1" height="1" fill="#2c2c2c"/>
<rect x="756" y="340" width="1" height="1" fill="#2c2c2c"/>
<rect x="756" y="362" width="1" height="1" fill="#2c2c2c"/>
<rect x="796" y="230" width="1" height="1" fill="#2c2c2c"/>
<rect x="796" y="252" width="1" height="1" fill="#2c2c2c"/>
<rect x="796" y="274" width="1" height="1" fill="#2c2c2c"/>
<rect x="796" y="296" width="1" height="1" fill="#2c2c2c"/>
<rect x="796" y="318" width="1" height="1" fill="#2c2c2c"/>
<rect x="796" y="340" width="1" height="1" fill="#2c2c2c"/>
<rect x="796" y="362" width="1" height="1" fill="#2c2c2c"/>
<rect x="837" y="230" width="1" height="1" fill="#2c2c2c"/>
<rect x="837" y="252" width="1" height="1" fill="#2c2c2c"/>
<rect x="837" y="274" width="1" height="1" fill="#2c2c2c"/>
<rect x="837" y="296" width="1" height="1" fill="#2c2c2c"/>
<rect x="837" y="318" width="1" height="1" fill="#2c2c2c"/>
<rect x="837" y="340" width="1" height="1" fill="#2c2c2c"/>
<rect x="837" y="362" width="1" height="1" fill="#2c2c2c"/>
<rect x="473.5" y="208.5" width="404" height="176" fill="none" stroke="#353535" stroke-width="1"/>
<text transform="translate(30.80 22.90) scale(0.8 1)" letter-spacing="0.45" font-size="6.6" fill="#ccc400" text-anchor="end">400 V</text>
<text transform="translate(30.80 41.60) scale(0.8 1)" letter-spacing="0.45" font-size="6.6" fill="#ccc400" text-anchor="end">300 V</text>
<text transform="translate(30.80 63.60) scale(0.8 1)" letter-spacing="0.45" font-size="6.6" fill="#ccc400" text-anchor="end">200 V</text>
<text transform="translate(30.80 85.60) scale(0.8 1)" letter-spacing="0.45" font-size="6.6" fill="#ccc400" text-anchor="end">100 V</text>
<text transform="translate(30.80 107.60) scale(0.8 1)" letter-spacing="0.45" font-size="6.6" fill="#ccc400" text-anchor="end">0 V</text>
<text transform="translate(30.80 129.60) scale(0.8 1)" letter-spacing="0.45" font-size="6.6" fill="#ccc400" text-anchor="end">-100 V</text>
<text transform="translate(30.80 151.60) scale(0.8 1)" letter-spacing="0.45" font-size="6.6" fill="#ccc400" text-anchor="end">-200 V</text>
<text transform="translate(30.80 173.60) scale(0.8 1)" letter-spacing="0.45" font-size="6.6" fill="#ccc400" text-anchor="end">-300 V</text>
<text transform="translate(30.80 193.00) scale(0.8 1)" letter-spacing="0.45" font-size="6.6" fill="#ccc400" text-anchor="end">-400 V</text>
<text transform="translate(30.80 213.90) scale(0.8 1)" letter-spacing="0.45" font-size="6.6" fill="#f0108c" text-anchor="end">800 mA</text>
<text transform="translate(30.80 232.60) scale(0.8 1)" letter-spacing="0.45" font-size="6.6" fill="#f0108c" text-anchor="end">600 mA</text>
<text transform="translate(30.80 254.60) scale(0.8 1)" letter-spacing="0.45" font-size="6.6" fill="#f0108c" text-anchor="end">400 mA</text>
<text transform="translate(30.80 276.60) scale(0.8 1)" letter-spacing="0.45" font-size="6.6" fill="#f0108c" text-anchor="end">200 mA</text>
<text transform="translate(30.80 298.60) scale(0.8 1)" letter-spacing="0.45" font-size="6.6" fill="#f0108c" text-anchor="end">0 mA</text>
<text transform="translate(30.80 320.60) scale(0.8 1)" letter-spacing="0.45" font-size="6.6" fill="#f0108c" text-anchor="end">-200 mA</text>
<text transform="translate(30.80 342.60) scale(0.8 1)" letter-spacing="0.45" font-size="6.6" fill="#f0108c" text-anchor="end">-400 mA</text>
<text transform="translate(30.80 364.60) scale(0.8 1)" letter-spacing="0.45" font-size="6.6" fill="#f0108c" text-anchor="end">-600 mA</text>
<text transform="translate(30.80 384.00) scale(0.8 1)" letter-spacing="0.45" font-size="6.6" fill="#f0108c" text-anchor="end">-800 mA</text>
<text transform="translate(471.60 22.90) scale(0.8 1)" letter-spacing="0.45" font-size="6.6" fill="#e0a400" text-anchor="end">70 #</text>
<text transform="translate(471.60 41.60) scale(0.8 1)" letter-spacing="0.45" font-size="6.6" fill="#e0a400" text-anchor="end">60 #</text>
<text transform="translate(471.60 63.60) scale(0.8 1)" letter-spacing="0.45" font-size="6.6" fill="#e0a400" text-anchor="end">50 #</text>
<text transform="translate(471.60 85.60) scale(0.8 1)" letter-spacing="0.45" font-size="6.6" fill="#e0a400" text-anchor="end">40 #</text>
<text transform="translate(471.60 107.60) scale(0.8 1)" letter-spacing="0.45" font-size="6.6" fill="#e0a400" text-anchor="end">30 #</text>
<text transform="translate(471.60 129.60) scale(0.8 1)" letter-spacing="0.45" font-size="6.6" fill="#e0a400" text-anchor="end">20 #</text>
<text transform="translate(471.60 151.60) scale(0.8 1)" letter-spacing="0.45" font-size="6.6" fill="#e0a400" text-anchor="end">10 #</text>
<text transform="translate(471.60 173.60) scale(0.8 1)" letter-spacing="0.45" font-size="6.6" fill="#e0a400" text-anchor="end">0 #</text>
<text transform="translate(471.60 193.00) scale(0.8 1)" letter-spacing="0.45" font-size="6.6" fill="#e0a400" text-anchor="end">-10 #</text>
<text transform="translate(471.60 213.90) scale(0.8 1)" letter-spacing="0.45" font-size="6.6" fill="#f05888" text-anchor="end">35 #</text>
<text transform="translate(471.60 232.60) scale(0.8 1)" letter-spacing="0.45" font-size="6.6" fill="#f05888" text-anchor="end">30 #</text>
<text transform="translate(471.60 254.60) scale(0.8 1)" letter-spacing="0.45" font-size="6.6" fill="#f05888" text-anchor="end">25 #</text>
<text transform="translate(471.60 276.60) scale(0.8 1)" letter-spacing="0.45" font-size="6.6" fill="#f05888" text-anchor="end">20 #</text>
<text transform="translate(471.60 298.60) scale(0.8 1)" letter-spacing="0.45" font-size="6.6" fill="#f05888" text-anchor="end">15 #</text>
<text transform="translate(471.60 320.60) scale(0.8 1)" letter-spacing="0.45" font-size="6.6" fill="#f05888" text-anchor="end">10 #</text>
<text transform="translate(471.60 342.60) scale(0.8 1)" letter-spacing="0.45" font-size="6.6" fill="#f05888" text-anchor="end">5 #</text>
<text transform="translate(471.60 364.60) scale(0.8 1)" letter-spacing="0.45" font-size="6.6" fill="#f05888" text-anchor="end">0 #</text>
<text transform="translate(471.60 384.00) scale(0.8 1)" letter-spacing="0.45" font-size="6.6" fill="#f05888" text-anchor="end">-5 #</text>
<text transform="translate(32 200.2) scale(0.8 1)" letter-spacing="0.45" font-size="6.6" fill="#ccc400" text-anchor="start">-10.52 ms</text>
<text transform="translate(113.3 200.2) scale(0.8 1)" letter-spacing="0.45" font-size="6.6" fill="#ccc400" text-anchor="middle">-6.52 ms</text>
<text transform="translate(194.1 200.2) scale(0.8 1)" letter-spacing="0.45" font-size="6.6" fill="#ccc400" text-anchor="middle">-2.52 ms</text>
<text transform="translate(274.9 200.2) scale(0.8 1)" letter-spacing="0.45" font-size="6.6" fill="#ccc400" text-anchor="middle">1.48 ms</text>
<text transform="translate(355.7 200.2) scale(0.8 1)" letter-spacing="0.45" font-size="6.6" fill="#ccc400" text-anchor="middle">5.48 ms</text>
<text transform="translate(436.90 200.2) scale(0.8 1)" letter-spacing="0.45" font-size="6.6" fill="#ccc400" text-anchor="end">9.48 ms</text>
<text transform="translate(32 391.2) scale(0.8 1)" letter-spacing="0.45" font-size="6.6" fill="#f0108c" text-anchor="start">-10.52 ms</text>
<text transform="translate(113.3 391.2) scale(0.8 1)" letter-spacing="0.45" font-size="6.6" fill="#f0108c" text-anchor="middle">-6.52 ms</text>
<text transform="translate(194.1 391.2) scale(0.8 1)" letter-spacing="0.45" font-size="6.6" fill="#f0108c" text-anchor="middle">-2.52 ms</text>
<text transform="translate(274.9 391.2) scale(0.8 1)" letter-spacing="0.45" font-size="6.6" fill="#f0108c" text-anchor="middle">1.48 ms</text>
<text transform="translate(355.7 391.2) scale(0.8 1)" letter-spacing="0.45" font-size="6.6" fill="#f0108c" text-anchor="middle">5.48 ms</text>
<text transform="translate(436.90 391.2) scale(0.8 1)" letter-spacing="0.45" font-size="6.6" fill="#f0108c" text-anchor="end">9.48 ms</text>
<text transform="translate(472.6 200.2) scale(0.8 1)" letter-spacing="0.45" font-size="6.6" fill="#e0a400" text-anchor="start">232.852 V</text>
<text transform="translate(554.3 200.2) scale(0.8 1)" letter-spacing="0.45" font-size="6.6" fill="#e0a400" text-anchor="middle">233.252 V</text>
<text transform="translate(635.1 200.2) scale(0.8 1)" letter-spacing="0.45" font-size="6.6" fill="#e0a400" text-anchor="middle">233.652 V</text>
<text transform="translate(715.9 200.2) scale(0.8 1)" letter-spacing="0.45" font-size="6.6" fill="#e0a400" text-anchor="middle">234.052 V</text>
<text transform="translate(796.7 200.2) scale(0.8 1)" letter-spacing="0.45" font-size="6.6" fill="#e0a400" text-anchor="middle">234.452 V</text>
<text transform="translate(878.10 200.2) scale(0.8 1)" letter-spacing="0.45" font-size="6.6" fill="#e0a400" text-anchor="end">234.852 V</text>
<text transform="translate(472.6 391.2) scale(0.8 1)" letter-spacing="0.45" font-size="6.6" fill="#f05888" text-anchor="start">392.2 mA</text>
<text transform="translate(554.3 391.2) scale(0.8 1)" letter-spacing="0.45" font-size="6.6" fill="#f05888" text-anchor="middle">396.2 mA</text>
<text transform="translate(635.1 391.2) scale(0.8 1)" letter-spacing="0.45" font-size="6.6" fill="#f05888" text-anchor="middle">400.2 mA</text>
<text transform="translate(715.9 391.2) scale(0.8 1)" letter-spacing="0.45" font-size="6.6" fill="#f05888" text-anchor="middle">404.2 mA</text>
<text transform="translate(796.7 391.2) scale(0.8 1)" letter-spacing="0.45" font-size="6.6" fill="#f05888" text-anchor="middle">408.2 mA</text>
<text transform="translate(878.10 391.2) scale(0.8 1)" letter-spacing="0.45" font-size="6.6" fill="#f05888" text-anchor="end">412.2 mA</text>
<path d="M32.0 104.1 C34.7 107.1 41.3 114.5 48.1 122.1 C54.9 129.7 64.7 142.1 72.6 149.4 C80.5 156.7 88.8 161.8 95.3 165.7 C101.8 169.6 104.3 171.4 111.6 173.0 C118.8 174.6 132.2 174.9 138.8 175.4 C145.4 175.9 147.1 175.9 151.3 175.9 C155.5 175.9 160.6 176.4 163.8 175.4 C167.0 174.4 166.0 174.4 170.6 170.2 C175.2 166.0 184.6 156.8 191.6 150.1 C198.6 143.4 205.5 137.5 212.6 130.0 C219.7 122.5 227.3 113.1 234.3 105.3 C241.3 97.5 247.9 90.2 254.4 82.9 C260.9 75.6 266.8 67.9 273.5 61.7 C280.2 55.5 288.3 49.7 294.7 45.9 C301.1 42.1 305.7 40.5 311.6 38.9 C317.5 37.3 324.4 36.8 330.0 36.3 C335.6 35.8 339.2 35.8 345.0 35.6 C350.8 35.4 360.9 35.1 364.8 35.3 C368.7 35.5 365.7 34.3 368.3 36.6 C370.9 38.9 377.4 46.2 380.2 49.0 C383.0 51.8 383.5 51.9 385.4 53.3 C387.3 54.7 389.5 56.2 391.4 57.5 C393.2 58.8 392.4 57.2 396.5 61.3 C400.6 65.4 409.7 75.1 416.3 82.2 C422.9 89.3 432.7 100.2 436.0 103.8" fill="none" stroke="#aea400" stroke-width="0.95"/>
<path d="M32.30 311.1V314.9M32.80 309.3V312.7M33.30 310.0V313.6M33.80 309.7V314.3M34.30 310.3V317.6M34.80 309.4V313.9M35.30 311.1V315.3M35.80 311.3V315.6M36.30 313.8V321.6M36.80 314.2V335.0M37.30 314.5V335.0M37.80 317.6V331.1M38.30 317.4V322.7M38.80 317.7V322.8M39.30 320.6V324.0M39.80 321.3V325.5M40.30 322.3V325.3M40.80 323.9V328.1M41.30 324.6V327.8M41.80 325.4V329.1M42.30 326.3V331.0M42.80 326.8V332.6M43.30 329.2V333.2M43.80 328.7V336.2M44.30 328.8V335.3M44.80 330.6V335.5M45.30 330.6V339.1M45.80 331.7V341.4M46.30 333.1V340.3M46.80 332.6V341.3M47.30 332.6V341.1M47.80 333.1V343.7M48.30 335.2V342.0M48.80 335.0V344.8M49.30 336.0V343.0M49.80 336.2V346.4M50.30 335.6V346.2M50.80 336.3V348.7M51.30 338.8V347.2M51.80 339.5V349.7M52.30 337.7V348.4M52.80 339.6V345.7M53.30 338.6V343.3M53.80 336.0V342.4M54.30 335.6V340.9M54.80 331.8V338.9M55.30 331.6V340.9M55.80 331.9V338.4M56.30 333.0V340.8M56.80 330.8V339.5M57.30 333.7V339.8M57.80 333.1V339.0M58.30 333.9V339.2M58.80 334.4V339.9M59.30 329.4V341.0M59.80 334.2V341.8M60.30 331.6V339.9M60.80 332.6V340.2M61.30 333.4V340.2M61.80 333.2V341.6M62.30 331.7V338.4M62.80 328.2V338.8M63.30 331.9V339.2M63.80 330.6V338.2M64.30 328.6V340.5M64.80 328.9V339.0M65.30 328.1V335.6M65.80 326.7V333.6M66.30 326.4V332.8M66.80 326.0V332.5M67.30 324.7V330.4M67.80 324.5V332.2M68.30 324.6V331.8M68.80 326.4V330.6M69.30 325.0V332.5M69.80 324.3V331.2M70.30 324.3V333.3M70.80 323.7V331.4M71.30 323.7V331.7M71.80 323.7V329.6M72.30 324.1V330.6M72.80 325.4V329.8M73.30 324.7V331.4M73.80 321.8V330.9M74.30 323.1V329.3M74.80 324.0V330.6M75.30 323.4V330.4M75.80 322.9V329.1M76.30 323.3V330.9M76.80 323.7V330.7M77.30 322.3V330.2M77.80 323.5V328.9M78.30 323.2V330.9M78.80 323.3V331.2M79.30 324.1V330.2M79.80 321.9V328.5M80.30 322.3V328.5M80.80 323.9V328.9M81.30 322.1V328.4M81.80 321.8V330.6M82.30 321.6V328.5M82.80 320.7V328.9M83.30 321.1V327.3M83.80 320.6V328.4M84.30 320.8V328.6M84.80 321.9V329.5M85.30 320.7V327.2M85.80 319.3V329.2M86.30 321.6V326.8M86.80 320.7V328.7M87.30 320.8V328.2M87.80 318.8V327.1M88.30 321.2V327.7M88.80 320.5V325.7M89.30 320.6V327.2M89.80 318.3V327.2M90.30 320.1V327.5M90.80 319.3V326.6M91.30 319.9V327.7M91.80 318.2V325.7M92.30 316.2V326.7M92.80 319.1V326.1M93.30 318.3V327.1M93.80 319.7V324.2M94.30 319.0V325.4M94.80 316.9V324.8M95.30 316.5V327.6M95.80 318.7V327.8M96.30 316.5V327.3M96.80 317.3V326.4M97.30 316.6V330.9M97.80 319.0V329.6M98.30 319.9V327.8M98.80 320.9V328.2M99.30 318.2V330.4M99.80 322.0V328.7M100.30 320.1V331.4M100.80 323.0V331.5M101.30 322.8V329.0M101.80 323.0V331.2M102.30 322.0V329.8M102.80 323.1V332.0M103.30 323.1V330.9M103.80 323.7V330.7M104.30 325.6V331.2M104.80 326.1V331.2M105.30 323.4V331.3M105.80 324.2V334.1M106.30 324.9V333.2M106.80 323.8V334.9M107.30 325.7V334.9M107.80 325.1V333.6M108.30 327.6V336.0M108.80 327.0V334.4M109.30 324.9V336.2M109.80 328.0V334.2M110.30 325.9V335.9M110.80 328.0V336.5M111.30 325.6V334.9M111.80 328.2V334.8M112.30 328.4V336.6M112.80 328.6V335.9M113.30 327.4V338.3M113.80 330.6V340.0M114.30 329.9V342.5M114.80 329.8V344.0M115.30 331.6V346.7M115.80 332.3V346.3M116.30 337.4V349.2M116.80 341.9V350.2M117.30 346.5V357.4M117.80 353.7V360.9M118.30 356.1V369.6M118.80 360.5V375.4M119.30 360.3V377.2M119.80 363.8V377.0M120.30 361.1V377.8M120.80 361.4V374.1M121.30 359.4V373.9M121.80 359.4V373.0M122.30 362.4V375.1M122.80 361.9V372.9M123.30 364.1V377.3M123.80 362.6V379.6M124.30 367.4V379.1M124.80 369.6V380.7M125.30 367.8V380.8M125.80 370.3V385.6M126.30 368.5V384.7M126.80 367.6V382.8M127.30 367.3V383.8M127.80 369.7V382.1M128.30 368.0V381.1M128.80 369.6V382.7M129.30 367.9V384.4M129.80 367.6V381.2M130.30 369.4V381.7M130.80 369.1V383.8M131.30 369.4V384.2M131.80 369.0V383.8M132.30 367.8V381.4M132.80 369.2V382.4M133.30 368.9V384.1M133.80 371.0V382.7M134.30 370.4V381.0M134.80 367.5V384.7M135.30 370.9V384.3M135.80 368.2V384.6M136.30 369.6V381.7M136.80 367.9V381.8M137.30 370.0V380.8M137.80 370.1V382.1M138.30 370.7V381.1M138.80 369.1V383.4M139.30 368.0V382.5M139.80 367.5V382.1M140.30 366.6V384.3M140.80 365.5V383.7M141.30 363.0V382.5M141.80 363.5V380.1M142.30 360.8V378.3M142.80 360.0V374.7M143.30 359.1V372.8M143.80 359.0V373.8M144.30 359.3V374.2M144.80 358.2V371.8M145.30 361.1V370.7M145.80 359.4V373.3M146.30 359.3V371.4M146.80 360.1V370.6M147.30 360.6V374.7M147.80 359.0V371.5M148.30 359.8V371.5M148.80 361.2V372.5M149.30 360.5V371.9M149.80 360.4V370.6M150.30 359.1V369.0M150.80 358.5V368.8M151.30 361.0V368.5M151.80 359.1V368.6M152.30 361.3V371.2M152.80 361.0V371.6M153.30 357.3V372.5M153.80 359.4V371.0M154.30 359.3V369.3M154.80 356.6V369.2M155.30 355.6V367.6M155.80 357.8V367.5M156.30 355.2V369.2M156.80 358.0V368.5M157.30 354.6V368.3M157.80 357.1V369.2M158.30 355.0V366.5M158.80 353.5V365.2M159.30 355.6V366.4M159.80 349.8V365.7M160.30 351.7V363.2M160.80 350.7V363.6M161.30 349.0V364.1M161.80 347.4V363.1M162.30 349.4V361.3M162.80 347.2V362.6M163.30 342.8V360.2M163.80 345.2V360.3M164.30 342.6V355.2M164.80 341.5V353.7M165.30 338.0V355.8M165.80 336.8V352.6M166.30 337.4V350.3M166.80 332.4V350.7M167.30 330.4V349.1M167.80 331.4V346.5M168.30 326.3V348.8M168.80 328.1V346.9M169.30 326.8V348.1M169.80 328.6V347.0M170.30 327.0V347.3M170.80 331.8V347.8M171.30 330.2V350.3M171.80 332.7V350.7M172.30 334.3V350.3M172.80 333.9V348.3M173.30 330.7V348.5M173.80 333.7V348.5M174.30 332.3V350.3M174.80 329.2V348.8M175.30 331.8V347.2M175.80 331.7V347.1M176.30 325.7V349.6M176.80 330.5V347.2M177.30 327.4V346.5M177.80 327.6V346.5M178.30 328.2V348.9M178.80 330.0V344.8M179.30 328.2V345.8M179.80 328.5V347.5M180.30 329.5V343.7M180.80 329.1V343.5M181.30 327.9V344.1M181.80 327.2V344.3M182.30 326.8V346.0M182.80 325.9V343.4M183.30 328.1V345.5M183.80 326.8V346.4M184.30 327.7V343.8M184.80 326.9V346.2M185.30 326.6V345.6M185.80 327.2V343.7M186.30 327.9V345.3M186.80 326.1V344.5M187.30 326.1V343.1M187.80 325.3V345.4M188.30 324.5V343.2M188.80 324.4V342.5M189.30 326.6V345.6M189.80 325.0V344.8M190.30 325.1V344.0M190.80 324.0V341.4M191.30 326.2V342.9M191.80 324.6V343.0M192.30 325.6V342.0M192.80 325.4V340.8M193.30 325.7V342.4M193.80 324.7V341.0M194.30 324.3V340.5M194.80 324.4V339.5M195.30 323.2V339.8M195.80 324.9V340.4M196.30 322.5V343.0M196.80 321.4V340.9M197.30 320.9V338.9M197.80 322.4V339.8M198.30 321.8V336.9M198.80 321.5V336.2M199.30 320.1V338.3M199.80 321.2V336.4M200.30 320.2V338.5M200.80 320.0V335.9M201.30 319.4V337.2M201.80 320.5V334.4M202.30 319.7V336.3M202.80 319.9V334.8M203.30 321.1V335.6M203.80 319.0V333.4M204.30 317.2V332.4M204.80 318.2V332.6M205.30 319.3V334.2M205.80 316.6V333.6M206.30 316.7V332.6M206.80 319.7V330.1M207.30 316.2V331.8M207.80 316.0V331.4M208.30 318.7V330.9M208.80 318.4V330.7M209.30 317.3V329.9M209.80 317.8V327.5M210.30 314.3V325.7M210.80 313.6V326.0M211.30 313.5V324.4M211.80 314.1V322.7M212.30 312.6V324.0M212.80 312.6V319.8M213.30 311.3V322.1M213.80 310.8V318.6M214.30 309.6V316.9M214.80 308.8V315.1M215.30 307.7V313.7M215.80 306.9V314.2M216.30 307.4V311.6M216.80 306.2V313.7M217.30 306.1V309.1M217.80 303.4V310.0M218.30 304.1V309.0M218.80 303.3V307.6M219.30 302.7V306.5M219.80 301.6V306.6M220.30 300.7V303.9M220.80 299.1V302.6M221.30 297.0V302.0M221.80 295.2V300.0M222.30 295.3V301.1M222.80 291.9V299.3M223.30 293.1V297.8M223.80 290.9V296.6M224.30 289.7V297.2M224.80 288.8V292.7M225.30 285.8V293.4M225.80 285.6V290.9M226.30 284.0V288.4M226.80 282.2V287.7M227.30 282.6V284.3M227.80 282.2V283.6M228.30 281.2V283.4M228.80 281.8V283.7M229.30 281.6V283.2M229.80 281.8V283.8M230.30 278.7V283.8M230.80 281.2V284.2M231.30 281.6V283.5M231.80 281.3V283.8M232.30 281.9V283.0M232.80 281.3V284.2M233.30 280.8V284.3M233.80 281.6V284.4M234.30 281.8V283.7M234.80 281.6V283.5M235.30 282.2V284.2M235.80 281.4V283.7M236.30 282.0V283.5M236.80 281.9V284.4M237.30 282.1V284.2M237.80 276.5V282.5M238.30 269.7V281.4M238.80 258.9V280.0M239.30 256.0V277.9M239.80 255.1V278.6M240.30 257.4V277.1M240.80 262.2V277.4M241.30 268.1V274.7M241.80 269.5V272.8M242.30 269.5V273.2M242.80 266.6V271.1M243.30 267.1V270.4M243.80 265.8V269.1M244.30 262.7V269.4M244.80 261.1V266.9M245.30 261.9V265.1M245.80 260.1V267.2M246.30 258.9V264.6M246.80 257.2V262.1M247.30 254.9V262.1M247.80 253.5V263.6M248.30 249.7V259.3M248.80 253.2V258.0M249.30 250.1V259.1M249.80 250.3V258.0M250.30 250.0V257.3M250.80 249.0V256.2M251.30 247.8V253.5M251.80 246.8V253.1M252.30 247.5V255.7M252.80 246.1V251.1M253.30 244.3V249.9M253.80 245.3V248.3M254.30 242.2V247.8M254.80 243.2V249.3M255.30 245.4V252.7M255.80 248.8V254.8M256.30 250.2V259.4M256.80 252.0V262.0M257.30 253.2V262.6M257.80 254.9V263.3M258.30 253.3V260.9M258.80 252.9V263.8M259.30 251.5V262.5M259.80 252.3V263.9M260.30 251.7V264.7M260.80 252.4V261.3M261.30 253.5V262.2M261.80 251.2V261.2M262.30 253.1V263.1M262.80 248.4V262.1M263.30 248.6V265.4M263.80 250.5V261.8M264.30 249.6V264.9M264.80 250.3V262.6M265.30 248.2V263.9M265.80 249.3V265.5M266.30 250.1V266.4M266.80 254.7V265.3M267.30 256.6V265.7M267.80 258.0V265.5M268.30 258.5V267.9M268.80 261.4V266.1M269.30 262.5V267.0M269.80 261.7V269.5M270.30 260.6V269.7M270.80 262.7V269.4M271.30 260.8V267.9M271.80 260.9V269.9M272.30 260.8V268.6M272.80 261.0V269.4M273.30 262.0V269.1M273.80 261.7V268.1M274.30 260.7V269.0M274.80 261.1V269.5M275.30 262.3V270.0M275.80 262.7V269.8M276.30 262.0V268.9M276.80 262.2V271.3M277.30 263.3V270.2M277.80 261.6V269.4M278.30 259.0V271.3M278.80 262.2V269.1M279.30 263.9V269.3M279.80 262.0V271.0M280.30 263.7V271.5M280.80 263.6V271.8M281.30 264.3V274.3M281.80 263.3V272.7M282.30 262.9V272.6M282.80 262.9V271.4M283.30 262.8V271.9M283.80 263.0V273.0M284.30 263.5V271.3M284.80 264.1V270.8M285.30 263.4V273.4M285.80 263.2V274.4M286.30 264.5V274.0M286.80 264.6V272.8M287.30 265.2V272.5M287.80 264.2V273.7M288.30 263.5V272.9M288.80 265.2V275.0M289.30 264.9V275.2M289.80 265.4V272.6M290.30 267.1V273.9M290.80 266.9V275.1M291.30 267.1V273.0M291.80 266.0V273.2M292.30 266.6V273.9M292.80 265.5V275.4M293.30 266.0V275.7M293.80 267.2V274.7M294.30 266.1V275.0M294.80 267.3V273.8M295.30 268.1V273.8M295.80 267.5V275.6M296.30 264.2V274.8M296.80 267.3V274.8M297.30 269.2V275.2M297.80 265.5V276.0M298.30 267.9V277.3M298.80 268.8V276.9M299.30 266.6V276.9M299.80 268.4V274.9M300.30 265.5V276.3M300.80 267.1V273.7M301.30 264.6V273.9M301.80 263.9V274.1M302.30 263.3V275.5M302.80 263.5V273.3M303.30 262.3V273.3M303.80 264.5V272.9M304.30 261.8V274.9M304.80 261.4V274.3M305.30 264.1V275.1M305.80 260.7V271.6M306.30 260.3V273.3M306.80 259.7V271.6M307.30 258.7V272.8M307.80 260.9V273.1M308.30 258.5V270.6M308.80 260.2V272.7M309.30 258.5V271.9M309.80 256.0V270.6M310.30 258.2V271.1M310.80 257.9V272.3M311.30 253.5V270.9M311.80 255.4V270.4M312.30 256.7V269.5M312.80 253.3V269.3M313.30 251.8V266.5M313.80 252.4V267.6M314.30 255.0V267.3M314.80 252.9V267.4M315.30 253.9V263.3M315.80 251.8V263.0M316.30 250.8V264.9M316.80 252.3V264.3M317.30 250.2V264.5M317.80 252.5V263.0M318.30 250.3V259.2M318.80 246.7V260.3M319.30 243.3V257.3M319.80 241.5V254.2M320.30 236.3V250.8M320.80 234.9V249.6M321.30 231.8V246.3M321.80 231.8V243.0M322.30 225.7V240.7M322.80 225.4V237.5M323.30 223.5V237.4M323.80 219.6V233.2M324.30 217.3V230.0M324.80 216.9V228.1M325.30 214.5V227.0M325.80 214.1V224.6M326.30 211.3V221.2M326.80 209.8V219.3M327.30 211.5V223.0M327.80 209.9V221.8M328.30 212.1V220.0M328.80 212.1V219.9M329.30 212.0V220.5M329.80 211.9V220.7M330.30 210.0V221.8M330.80 211.0V222.1M331.30 212.2V221.2M331.80 209.5V219.5M332.30 208.9V223.1M332.80 208.5V220.0M333.30 208.5V222.7M333.80 211.1V221.9M334.30 212.4V221.1M334.80 215.1V221.1M335.30 215.1V222.7M335.80 215.3V224.1M336.30 219.2V226.7M336.80 219.6V225.0M337.30 220.9V227.6M337.80 221.1V227.7M338.30 221.8V229.8M338.80 220.3V229.8M339.30 221.7V231.4M339.80 220.8V233.6M340.30 221.1V232.1M340.80 223.0V234.1M341.30 222.0V233.5M341.80 223.2V237.1M342.30 224.0V238.0M342.80 220.6V237.8M343.30 223.1V235.1M343.80 221.6V234.5M344.30 219.2V236.6M344.80 219.5V235.8M345.30 221.8V236.0M345.80 221.2V232.6M346.30 218.1V234.2M346.80 216.3V234.0M347.30 216.2V230.9M347.80 217.5V233.7M348.30 214.4V231.3M348.80 217.1V231.0M349.30 220.7V235.9M349.80 223.0V237.0M350.30 225.2V242.5M350.80 224.1V240.8M351.30 227.3V240.1M351.80 226.9V241.4M352.30 224.0V241.2M352.80 224.5V240.3M353.30 224.5V240.7M353.80 225.1V242.2M354.30 222.5V243.7M354.80 225.0V239.8M355.30 223.2V240.6M355.80 224.3V241.4M356.30 224.8V240.7M356.80 222.6V241.5M357.30 224.0V240.8M357.80 223.8V239.0M358.30 223.2V238.7M358.80 225.6V238.6M359.30 226.0V238.1M359.80 227.4V240.9M360.30 226.2V240.3M360.80 229.3V241.0M361.30 229.2V240.8M361.80 230.5V243.7M362.30 228.3V244.7M362.80 226.3V242.7M363.30 226.7V242.9M363.80 229.0V243.6M364.30 229.2V244.3M364.80 229.9V245.7M365.30 231.6V248.8M365.80 233.3V250.4M366.30 237.1V251.2M366.80 238.7V251.0M367.30 243.8V255.1M367.80 245.5V253.5M368.30 245.9V257.8M368.80 243.3V262.1M369.30 244.2V268.4M369.80 244.9V269.7M370.30 243.0V270.7M370.80 243.0V270.9M371.30 242.6V270.0M371.80 241.2V268.2M372.30 242.4V265.8M372.80 240.5V264.4M373.30 244.1V267.3M373.80 243.3V265.7M374.30 242.2V263.0M374.80 246.5V263.2M375.30 247.2V266.7M375.80 247.5V266.0M376.30 247.4V267.3M376.80 251.9V267.8M377.30 250.0V269.1M377.80 251.6V270.7M378.30 249.0V270.9M378.80 251.2V272.3M379.30 248.3V270.3M379.80 247.4V269.7M380.30 248.7V267.1M380.80 247.4V268.8M381.30 249.0V266.2M381.80 246.6V263.9M382.30 245.0V265.1M382.80 245.5V264.4M383.30 246.7V264.9M383.80 243.7V262.9M384.30 241.7V263.4M384.80 244.5V262.9M385.30 244.9V263.1M385.80 246.4V264.2M386.30 248.4V263.8M386.80 248.4V264.2M387.30 245.6V265.4M387.80 247.5V263.6M388.30 248.2V265.9M388.80 249.7V266.8M389.30 247.2V268.1M389.80 247.7V264.9M390.30 246.4V268.3M390.80 249.1V265.7M391.30 247.3V268.1M391.80 247.3V266.4M392.30 249.8V271.4M392.80 251.5V268.2M393.30 249.5V269.1M393.80 252.0V268.6M394.30 252.3V269.3M394.80 251.0V268.2M395.30 252.5V269.5M395.80 252.0V271.5M396.30 253.7V271.4M396.80 252.8V270.3M397.30 256.0V273.5M397.80 256.5V269.6M398.30 254.6V270.9M398.80 256.2V270.1M399.30 258.7V271.9M399.80 258.4V271.0M400.30 257.1V271.7M400.80 257.5V271.2M401.30 258.1V274.3M401.80 258.5V275.1M402.30 260.2V272.9M402.80 261.3V275.3M403.30 260.0V273.7M403.80 261.5V274.1M404.30 261.7V273.7M404.80 262.6V275.7M405.30 260.4V274.8M405.80 262.5V278.1M406.30 262.8V277.0M406.80 263.2V275.5M407.30 263.8V276.6M407.80 261.9V276.3M408.30 265.6V277.3M408.80 263.3V277.5M409.30 263.5V277.5M409.80 263.9V276.4M410.30 268.2V278.4M410.80 265.9V275.1M411.30 266.0V276.5M411.80 268.8V277.5M412.30 266.5V279.1M412.80 270.2V278.4M413.30 269.3V278.1M413.80 270.1V277.7M414.30 270.4V279.6M414.80 272.4V279.6M415.30 272.3V282.1M415.80 273.7V281.8M416.30 273.2V285.5M416.80 274.0V282.5M417.30 276.5V284.4M417.80 278.0V284.3M418.30 277.5V285.2M418.80 278.6V288.3M419.30 281.4V289.1M419.80 279.2V287.6M420.30 282.7V290.2M420.80 284.6V292.1M421.30 286.5V292.8M421.80 285.2V293.4M422.30 288.1V293.9M422.80 289.0V294.0M423.30 289.4V297.3M423.80 291.7V296.7M424.30 292.9V297.1M424.80 295.1V299.7M425.30 294.5V302.2M425.80 296.0V301.5M426.30 299.3V305.6M426.80 298.0V305.8M427.30 301.3V308.4M427.80 300.6V307.9M428.30 304.1V312.1M428.80 303.2V311.1M429.30 305.2V313.2M429.80 306.0V312.3M430.30 308.8V312.0M430.80 309.8V312.9M431.30 309.5V312.4M431.80 311.0V312.6M432.30 310.6V312.7M432.80 311.0V312.4M433.30 311.0V313.2M433.80 310.7V312.6M434.30 310.4V313.1M434.80 311.6V313.2M435.30 311.2V314.3M435.80 311.2V312.4M436.30 311.3V312.8M436.80 311.0V312.4" stroke="#ff0a8c" stroke-width="1" fill="none"/>
<rect x="493.70" y="168.80" width="4.04" height="2.20" fill="#ffc400"/><rect x="496.74" y="168.80" width="1" height="2.20" fill="#86822e"/><rect x="493.70" y="168.80" width="0.8" height="2.20" fill="#ffdc2c"/>
<rect x="497.74" y="168.80" width="4.04" height="2.20" fill="#ffc400"/><rect x="500.77" y="168.80" width="1" height="2.20" fill="#86822e"/><rect x="497.74" y="168.80" width="0.8" height="2.20" fill="#ffdc2c"/>
<rect x="509.85" y="168.80" width="4.04" height="2.20" fill="#ffc400"/><rect x="512.88" y="168.80" width="1" height="2.20" fill="#86822e"/><rect x="509.85" y="168.80" width="0.8" height="2.20" fill="#ffdc2c"/>
<rect x="513.88" y="168.80" width="4.04" height="2.20" fill="#ffc400"/><rect x="516.92" y="168.80" width="1" height="2.20" fill="#86822e"/><rect x="513.88" y="168.80" width="0.8" height="2.20" fill="#ffdc2c"/>
<rect x="534.07" y="168.80" width="4.04" height="2.20" fill="#ffc400"/><rect x="537.11" y="168.80" width="1" height="2.20" fill="#86822e"/><rect x="534.07" y="168.80" width="0.8" height="2.20" fill="#ffdc2c"/>
<rect x="546.18" y="168.80" width="4.04" height="2.20" fill="#ffc400"/><rect x="549.22" y="168.80" width="1" height="2.20" fill="#86822e"/><rect x="546.18" y="168.80" width="0.8" height="2.20" fill="#ffdc2c"/>
<rect x="550.22" y="168.80" width="4.04" height="2.20" fill="#ffc400"/><rect x="553.25" y="168.80" width="1" height="2.20" fill="#86822e"/><rect x="550.22" y="168.80" width="0.8" height="2.20" fill="#ffdc2c"/>
<rect x="554.25" y="168.80" width="4.04" height="2.20" fill="#ffc400"/><rect x="557.29" y="168.80" width="1" height="2.20" fill="#86822e"/><rect x="554.25" y="168.80" width="0.8" height="2.20" fill="#ffdc2c"/>
<rect x="570.40" y="168.80" width="4.04" height="2.20" fill="#ffc400"/><rect x="573.44" y="168.80" width="1" height="2.20" fill="#86822e"/><rect x="570.40" y="168.80" width="0.8" height="2.20" fill="#ffdc2c"/>
<rect x="574.44" y="164.40" width="4.04" height="6.60" fill="#ffc400"/><rect x="577.48" y="164.40" width="1" height="6.60" fill="#86822e"/><rect x="574.44" y="164.40" width="0.8" height="6.60" fill="#ffdc2c"/>
<rect x="586.55" y="162.20" width="4.04" height="8.80" fill="#ffc400"/><rect x="589.59" y="162.20" width="1" height="8.80" fill="#86822e"/><rect x="586.55" y="162.20" width="0.8" height="8.80" fill="#ffdc2c"/>
<rect x="594.62" y="166.60" width="4.04" height="4.40" fill="#ffc400"/><rect x="597.66" y="166.60" width="1" height="4.40" fill="#86822e"/><rect x="594.62" y="166.60" width="0.8" height="4.40" fill="#ffdc2c"/>
<rect x="602.70" y="168.80" width="4.04" height="2.20" fill="#ffc400"/><rect x="605.74" y="168.80" width="1" height="2.20" fill="#86822e"/><rect x="602.70" y="168.80" width="0.8" height="2.20" fill="#ffdc2c"/>
<rect x="606.74" y="168.80" width="4.04" height="2.20" fill="#ffc400"/><rect x="609.77" y="168.80" width="1" height="2.20" fill="#86822e"/><rect x="606.74" y="168.80" width="0.8" height="2.20" fill="#ffdc2c"/>
<rect x="610.77" y="160.00" width="4.04" height="11.00" fill="#ffc400"/><rect x="613.81" y="160.00" width="1" height="11.00" fill="#86822e"/><rect x="610.77" y="160.00" width="0.8" height="11.00" fill="#ffdc2c"/>
<rect x="614.81" y="168.80" width="4.04" height="2.20" fill="#ffc400"/><rect x="617.85" y="168.80" width="1" height="2.20" fill="#86822e"/><rect x="614.81" y="168.80" width="0.8" height="2.20" fill="#ffdc2c"/>
<rect x="618.85" y="166.60" width="4.04" height="4.40" fill="#ffc400"/><rect x="621.88" y="166.60" width="1" height="4.40" fill="#86822e"/><rect x="618.85" y="166.60" width="0.8" height="4.40" fill="#ffdc2c"/>
<rect x="626.92" y="168.80" width="4.04" height="2.20" fill="#ffc400"/><rect x="629.96" y="168.80" width="1" height="2.20" fill="#86822e"/><rect x="626.92" y="168.80" width="0.8" height="2.20" fill="#ffdc2c"/>
<rect x="630.96" y="168.80" width="4.04" height="2.20" fill="#ffc400"/><rect x="634.00" y="168.80" width="1" height="2.20" fill="#86822e"/><rect x="630.96" y="168.80" width="0.8" height="2.20" fill="#ffdc2c"/>
<rect x="635.00" y="164.40" width="4.04" height="6.60" fill="#ffc400"/><rect x="638.03" y="164.40" width="1" height="6.60" fill="#86822e"/><rect x="635.00" y="164.40" width="0.8" height="6.60" fill="#ffdc2c"/>
<rect x="639.03" y="166.60" width="4.04" height="4.40" fill="#ffc400"/><rect x="642.07" y="166.60" width="1" height="4.40" fill="#86822e"/><rect x="639.03" y="166.60" width="0.8" height="4.40" fill="#ffdc2c"/>
<rect x="643.07" y="166.60" width="4.04" height="4.40" fill="#ffc400"/><rect x="646.11" y="166.60" width="1" height="4.40" fill="#86822e"/><rect x="643.07" y="166.60" width="0.8" height="4.40" fill="#ffdc2c"/>
<rect x="651.14" y="168.80" width="4.04" height="2.20" fill="#ffc400"/><rect x="654.18" y="168.80" width="1" height="2.20" fill="#86822e"/><rect x="651.14" y="168.80" width="0.8" height="2.20" fill="#ffdc2c"/>
<rect x="655.18" y="164.40" width="4.04" height="6.60" fill="#ffc400"/><rect x="658.22" y="164.40" width="1" height="6.60" fill="#86822e"/><rect x="655.18" y="164.40" width="0.8" height="6.60" fill="#ffdc2c"/>
<rect x="659.22" y="168.80" width="4.04" height="2.20" fill="#ffc400"/><rect x="662.25" y="168.80" width="1" height="2.20" fill="#86822e"/><rect x="659.22" y="168.80" width="0.8" height="2.20" fill="#ffdc2c"/>
<rect x="663.25" y="164.40" width="4.04" height="6.60" fill="#ffc400"/><rect x="666.29" y="164.40" width="1" height="6.60" fill="#86822e"/><rect x="663.25" y="164.40" width="0.8" height="6.60" fill="#ffdc2c"/>
<rect x="667.29" y="162.20" width="4.04" height="8.80" fill="#ffc400"/><rect x="670.33" y="162.20" width="1" height="8.80" fill="#86822e"/><rect x="667.29" y="162.20" width="0.8" height="8.80" fill="#ffdc2c"/>
<rect x="671.33" y="155.60" width="4.04" height="15.40" fill="#ffc400"/><rect x="674.37" y="155.60" width="1" height="15.40" fill="#86822e"/><rect x="671.33" y="155.60" width="0.8" height="15.40" fill="#ffdc2c"/>
<rect x="675.37" y="153.40" width="4.04" height="17.60" fill="#ffc400"/><rect x="678.40" y="153.40" width="1" height="17.60" fill="#86822e"/><rect x="675.37" y="153.40" width="0.8" height="17.60" fill="#ffdc2c"/>
<rect x="679.40" y="135.80" width="4.04" height="35.20" fill="#ffc400"/><rect x="682.44" y="135.80" width="1" height="35.20" fill="#86822e"/><rect x="679.40" y="135.80" width="0.8" height="35.20" fill="#ffdc2c"/>
<rect x="683.44" y="135.80" width="4.04" height="35.20" fill="#ffc400"/><rect x="686.48" y="135.80" width="1" height="35.20" fill="#86822e"/><rect x="683.44" y="135.80" width="0.8" height="35.20" fill="#ffdc2c"/>
<rect x="687.48" y="129.20" width="4.04" height="41.80" fill="#ffc400"/><rect x="690.51" y="129.20" width="1" height="41.80" fill="#86822e"/><rect x="687.48" y="129.20" width="0.8" height="41.80" fill="#ffdc2c"/>
<rect x="691.51" y="96.20" width="4.04" height="74.80" fill="#ffc400"/><rect x="694.55" y="96.20" width="1" height="74.80" fill="#86822e"/><rect x="691.51" y="96.20" width="0.8" height="74.80" fill="#ffdc2c"/>
<rect x="695.55" y="102.80" width="4.04" height="68.20" fill="#ffc400"/><rect x="698.59" y="102.80" width="1" height="68.20" fill="#86822e"/><rect x="695.55" y="102.80" width="0.8" height="68.20" fill="#ffdc2c"/>
<rect x="699.59" y="94.00" width="4.04" height="77.00" fill="#ffc400"/><rect x="702.62" y="94.00" width="1" height="77.00" fill="#86822e"/><rect x="699.59" y="94.00" width="0.8" height="77.00" fill="#ffdc2c"/>
<rect x="703.62" y="105.00" width="4.04" height="66.00" fill="#ffc400"/><rect x="706.66" y="105.00" width="1" height="66.00" fill="#86822e"/><rect x="703.62" y="105.00" width="0.8" height="66.00" fill="#ffdc2c"/>
<rect x="707.66" y="91.80" width="4.04" height="79.20" fill="#ffc400"/><rect x="710.70" y="91.80" width="1" height="79.20" fill="#86822e"/><rect x="707.66" y="91.80" width="0.8" height="79.20" fill="#ffdc2c"/>
<rect x="711.70" y="87.40" width="4.04" height="83.60" fill="#ffc400"/><rect x="714.74" y="87.40" width="1" height="83.60" fill="#86822e"/><rect x="711.70" y="87.40" width="0.8" height="83.60" fill="#ffdc2c"/>
<rect x="715.74" y="102.80" width="4.04" height="68.20" fill="#ffc400"/><rect x="718.77" y="102.80" width="1" height="68.20" fill="#86822e"/><rect x="715.74" y="102.80" width="0.8" height="68.20" fill="#ffdc2c"/>
<rect x="719.77" y="107.20" width="4.04" height="63.80" fill="#ffc400"/><rect x="722.81" y="107.20" width="1" height="63.80" fill="#86822e"/><rect x="719.77" y="107.20" width="0.8" height="63.80" fill="#ffdc2c"/>
<rect x="723.81" y="135.80" width="4.04" height="35.20" fill="#ffc400"/><rect x="726.85" y="135.80" width="1" height="35.20" fill="#86822e"/><rect x="723.81" y="135.80" width="0.8" height="35.20" fill="#ffdc2c"/>
<rect x="727.85" y="91.80" width="4.04" height="79.20" fill="#ffc400"/><rect x="730.88" y="91.80" width="1" height="79.20" fill="#86822e"/><rect x="727.85" y="91.80" width="0.8" height="79.20" fill="#ffdc2c"/>
<rect x="731.88" y="120.40" width="4.04" height="50.60" fill="#ffc400"/><rect x="734.92" y="120.40" width="1" height="50.60" fill="#86822e"/><rect x="731.88" y="120.40" width="0.8" height="50.60" fill="#ffdc2c"/>
<rect x="735.92" y="142.40" width="4.04" height="28.60" fill="#ffc400"/><rect x="738.96" y="142.40" width="1" height="28.60" fill="#86822e"/><rect x="735.92" y="142.40" width="0.8" height="28.60" fill="#ffdc2c"/>
<rect x="739.96" y="144.60" width="4.04" height="26.40" fill="#ffc400"/><rect x="742.99" y="144.60" width="1" height="26.40" fill="#86822e"/><rect x="739.96" y="144.60" width="0.8" height="26.40" fill="#ffdc2c"/>
<rect x="743.99" y="144.60" width="4.04" height="26.40" fill="#ffc400"/><rect x="747.03" y="144.60" width="1" height="26.40" fill="#86822e"/><rect x="743.99" y="144.60" width="0.8" height="26.40" fill="#ffdc2c"/>
<rect x="748.03" y="151.20" width="4.04" height="19.80" fill="#ffc400"/><rect x="751.07" y="151.20" width="1" height="19.80" fill="#86822e"/><rect x="748.03" y="151.20" width="0.8" height="19.80" fill="#ffdc2c"/>
<rect x="752.07" y="155.60" width="4.04" height="15.40" fill="#ffc400"/><rect x="755.11" y="155.60" width="1" height="15.40" fill="#86822e"/><rect x="752.07" y="155.60" width="0.8" height="15.40" fill="#ffdc2c"/>
<rect x="756.11" y="160.00" width="4.04" height="11.00" fill="#ffc400"/><rect x="759.14" y="160.00" width="1" height="11.00" fill="#86822e"/><rect x="756.11" y="160.00" width="0.8" height="11.00" fill="#ffdc2c"/>
<rect x="760.14" y="162.20" width="4.04" height="8.80" fill="#ffc400"/><rect x="763.18" y="162.20" width="1" height="8.80" fill="#86822e"/><rect x="760.14" y="162.20" width="0.8" height="8.80" fill="#ffdc2c"/>
<rect x="764.18" y="155.60" width="4.04" height="15.40" fill="#ffc400"/><rect x="767.22" y="155.60" width="1" height="15.40" fill="#86822e"/><rect x="764.18" y="155.60" width="0.8" height="15.40" fill="#ffdc2c"/>
<rect x="768.22" y="155.60" width="4.04" height="15.40" fill="#ffc400"/><rect x="771.25" y="155.60" width="1" height="15.40" fill="#86822e"/><rect x="768.22" y="155.60" width="0.8" height="15.40" fill="#ffdc2c"/>
<rect x="772.25" y="142.40" width="4.04" height="28.60" fill="#ffc400"/><rect x="775.29" y="142.40" width="1" height="28.60" fill="#86822e"/><rect x="772.25" y="142.40" width="0.8" height="28.60" fill="#ffdc2c"/>
<rect x="776.29" y="142.40" width="4.04" height="28.60" fill="#ffc400"/><rect x="779.33" y="142.40" width="1" height="28.60" fill="#86822e"/><rect x="776.29" y="142.40" width="0.8" height="28.60" fill="#ffdc2c"/>
<rect x="780.33" y="116.00" width="4.04" height="55.00" fill="#ffc400"/><rect x="783.36" y="116.00" width="1" height="55.00" fill="#86822e"/><rect x="780.33" y="116.00" width="0.8" height="55.00" fill="#ffdc2c"/>
<rect x="784.36" y="96.20" width="4.04" height="74.80" fill="#ffc400"/><rect x="787.40" y="96.20" width="1" height="74.80" fill="#86822e"/><rect x="784.36" y="96.20" width="0.8" height="74.80" fill="#ffdc2c"/>
<rect x="788.40" y="94.00" width="4.04" height="77.00" fill="#ffc400"/><rect x="791.44" y="94.00" width="1" height="77.00" fill="#86822e"/><rect x="788.40" y="94.00" width="0.8" height="77.00" fill="#ffdc2c"/>
<rect x="792.44" y="87.40" width="4.04" height="83.60" fill="#ffc400"/><rect x="795.48" y="87.40" width="1" height="83.60" fill="#86822e"/><rect x="792.44" y="87.40" width="0.8" height="83.60" fill="#ffdc2c"/>
<rect x="796.47" y="67.60" width="4.04" height="103.40" fill="#ffc400"/><rect x="799.51" y="67.60" width="1" height="103.40" fill="#86822e"/><rect x="796.47" y="67.60" width="0.8" height="103.40" fill="#ffdc2c"/>
<rect x="800.51" y="78.60" width="4.04" height="92.40" fill="#ffc400"/><rect x="803.55" y="78.60" width="1" height="92.40" fill="#86822e"/><rect x="800.51" y="78.60" width="0.8" height="92.40" fill="#ffdc2c"/>
<rect x="804.55" y="87.40" width="4.04" height="83.60" fill="#ffc400"/><rect x="807.59" y="87.40" width="1" height="83.60" fill="#86822e"/><rect x="804.55" y="87.40" width="0.8" height="83.60" fill="#ffdc2c"/>
<rect x="808.59" y="83.00" width="4.04" height="88.00" fill="#ffc400"/><rect x="811.62" y="83.00" width="1" height="88.00" fill="#86822e"/><rect x="808.59" y="83.00" width="0.8" height="88.00" fill="#ffdc2c"/>
<rect x="812.62" y="85.20" width="4.04" height="85.80" fill="#ffc400"/><rect x="815.66" y="85.20" width="1" height="85.80" fill="#86822e"/><rect x="812.62" y="85.20" width="0.8" height="85.80" fill="#ffdc2c"/>
<rect x="816.66" y="129.20" width="4.04" height="41.80" fill="#ffc400"/><rect x="819.70" y="129.20" width="1" height="41.80" fill="#86822e"/><rect x="816.66" y="129.20" width="0.8" height="41.80" fill="#ffdc2c"/>
<rect x="820.70" y="122.60" width="4.04" height="48.40" fill="#ffc400"/><rect x="823.73" y="122.60" width="1" height="48.40" fill="#86822e"/><rect x="820.70" y="122.60" width="0.8" height="48.40" fill="#ffdc2c"/>
<rect x="824.73" y="133.60" width="4.04" height="37.40" fill="#ffc400"/><rect x="827.77" y="133.60" width="1" height="37.40" fill="#86822e"/><rect x="824.73" y="133.60" width="0.8" height="37.40" fill="#ffdc2c"/>
<rect x="828.77" y="129.20" width="4.04" height="41.80" fill="#ffc400"/><rect x="831.81" y="129.20" width="1" height="41.80" fill="#86822e"/><rect x="828.77" y="129.20" width="0.8" height="41.80" fill="#ffdc2c"/>
<rect x="832.81" y="144.60" width="4.04" height="26.40" fill="#ffc400"/><rect x="835.85" y="144.60" width="1" height="26.40" fill="#86822e"/><rect x="832.81" y="144.60" width="0.8" height="26.40" fill="#ffdc2c"/>
<rect x="836.85" y="155.60" width="4.04" height="15.40" fill="#ffc400"/><rect x="839.88" y="155.60" width="1" height="15.40" fill="#86822e"/><rect x="836.85" y="155.60" width="0.8" height="15.40" fill="#ffdc2c"/>
<rect x="840.88" y="164.40" width="4.04" height="6.60" fill="#ffc400"/><rect x="843.92" y="164.40" width="1" height="6.60" fill="#86822e"/><rect x="840.88" y="164.40" width="0.8" height="6.60" fill="#ffdc2c"/>
<rect x="844.92" y="166.60" width="4.04" height="4.40" fill="#ffc400"/><rect x="847.96" y="166.60" width="1" height="4.40" fill="#86822e"/><rect x="844.92" y="166.60" width="0.8" height="4.40" fill="#ffdc2c"/>
<rect x="848.96" y="162.20" width="4.04" height="8.80" fill="#ffc400"/><rect x="851.99" y="162.20" width="1" height="8.80" fill="#86822e"/><rect x="848.96" y="162.20" width="0.8" height="8.80" fill="#ffdc2c"/>
<rect x="852.99" y="168.80" width="4.04" height="2.20" fill="#ffc400"/><rect x="856.03" y="168.80" width="1" height="2.20" fill="#86822e"/><rect x="852.99" y="168.80" width="0.8" height="2.20" fill="#ffdc2c"/>
<rect x="473" y="171" width="404" height="1" fill="#7a5c0c"/>
<rect x="505.70" y="357.60" width="4.04" height="4.40" fill="#ff5a8a"/><rect x="508.74" y="357.60" width="1" height="4.40" fill="#765c74"/><rect x="505.70" y="357.60" width="0.8" height="4.40" fill="#ff90bc"/>
<rect x="509.74" y="357.60" width="4.04" height="4.40" fill="#ff5a8a"/><rect x="512.77" y="357.60" width="1" height="4.40" fill="#765c74"/><rect x="509.74" y="357.60" width="0.8" height="4.40" fill="#ff90bc"/>
<rect x="513.77" y="357.60" width="4.04" height="4.40" fill="#ff5a8a"/><rect x="516.81" y="357.60" width="1" height="4.40" fill="#765c74"/><rect x="513.77" y="357.60" width="0.8" height="4.40" fill="#ff90bc"/>
<rect x="517.81" y="353.20" width="4.04" height="8.80" fill="#ff5a8a"/><rect x="520.85" y="353.20" width="1" height="8.80" fill="#765c74"/><rect x="517.81" y="353.20" width="0.8" height="8.80" fill="#ff90bc"/>
<rect x="525.88" y="357.60" width="4.04" height="4.40" fill="#ff5a8a"/><rect x="528.92" y="357.60" width="1" height="4.40" fill="#765c74"/><rect x="525.88" y="357.60" width="0.8" height="4.40" fill="#ff90bc"/>
<rect x="529.92" y="357.60" width="4.04" height="4.40" fill="#ff5a8a"/><rect x="532.96" y="357.60" width="1" height="4.40" fill="#765c74"/><rect x="529.92" y="357.60" width="0.8" height="4.40" fill="#ff90bc"/>
<rect x="533.96" y="357.60" width="4.04" height="4.40" fill="#ff5a8a"/><rect x="537.00" y="357.60" width="1" height="4.40" fill="#765c74"/><rect x="533.96" y="357.60" width="0.8" height="4.40" fill="#ff90bc"/>
<rect x="542.03" y="326.80" width="4.04" height="35.20" fill="#ff5a8a"/><rect x="545.07" y="326.80" width="1" height="35.20" fill="#765c74"/><rect x="542.03" y="326.80" width="0.8" height="35.20" fill="#ff90bc"/>
<rect x="546.07" y="348.80" width="4.04" height="13.20" fill="#ff5a8a"/><rect x="549.11" y="348.80" width="1" height="13.20" fill="#765c74"/><rect x="546.07" y="348.80" width="0.8" height="13.20" fill="#ff90bc"/>
<rect x="550.11" y="357.60" width="4.04" height="4.40" fill="#ff5a8a"/><rect x="553.14" y="357.60" width="1" height="4.40" fill="#765c74"/><rect x="550.11" y="357.60" width="0.8" height="4.40" fill="#ff90bc"/>
<rect x="554.14" y="340.00" width="4.04" height="22.00" fill="#ff5a8a"/><rect x="557.18" y="340.00" width="1" height="22.00" fill="#765c74"/><rect x="554.14" y="340.00" width="0.8" height="22.00" fill="#ff90bc"/>
<rect x="558.18" y="340.00" width="4.04" height="22.00" fill="#ff5a8a"/><rect x="561.22" y="340.00" width="1" height="22.00" fill="#765c74"/><rect x="558.18" y="340.00" width="0.8" height="22.00" fill="#ff90bc"/>
<rect x="562.22" y="331.20" width="4.04" height="30.80" fill="#ff5a8a"/><rect x="565.25" y="331.20" width="1" height="30.80" fill="#765c74"/><rect x="562.22" y="331.20" width="0.8" height="30.80" fill="#ff90bc"/>
<rect x="566.25" y="340.00" width="4.04" height="22.00" fill="#ff5a8a"/><rect x="569.29" y="340.00" width="1" height="22.00" fill="#765c74"/><rect x="566.25" y="340.00" width="0.8" height="22.00" fill="#ff90bc"/>
<rect x="570.29" y="322.40" width="4.04" height="39.60" fill="#ff5a8a"/><rect x="573.33" y="322.40" width="1" height="39.60" fill="#765c74"/><rect x="570.29" y="322.40" width="0.8" height="39.60" fill="#ff90bc"/>
<rect x="574.33" y="318.00" width="4.04" height="44.00" fill="#ff5a8a"/><rect x="577.37" y="318.00" width="1" height="44.00" fill="#765c74"/><rect x="574.33" y="318.00" width="0.8" height="44.00" fill="#ff90bc"/>
<rect x="578.37" y="309.20" width="4.04" height="52.80" fill="#ff5a8a"/><rect x="581.40" y="309.20" width="1" height="52.80" fill="#765c74"/><rect x="578.37" y="309.20" width="0.8" height="52.80" fill="#ff90bc"/>
<rect x="582.40" y="344.40" width="4.04" height="17.60" fill="#ff5a8a"/><rect x="585.44" y="344.40" width="1" height="17.60" fill="#765c74"/><rect x="582.40" y="344.40" width="0.8" height="17.60" fill="#ff90bc"/>
<rect x="586.44" y="326.80" width="4.04" height="35.20" fill="#ff5a8a"/><rect x="589.48" y="326.80" width="1" height="35.20" fill="#765c74"/><rect x="586.44" y="326.80" width="0.8" height="35.20" fill="#ff90bc"/>
<rect x="590.48" y="296.00" width="4.04" height="66.00" fill="#ff5a8a"/><rect x="593.51" y="296.00" width="1" height="66.00" fill="#765c74"/><rect x="590.48" y="296.00" width="0.8" height="66.00" fill="#ff90bc"/>
<rect x="594.51" y="313.60" width="4.04" height="48.40" fill="#ff5a8a"/><rect x="597.55" y="313.60" width="1" height="48.40" fill="#765c74"/><rect x="594.51" y="313.60" width="0.8" height="48.40" fill="#ff90bc"/>
<rect x="598.55" y="291.60" width="4.04" height="70.40" fill="#ff5a8a"/><rect x="601.59" y="291.60" width="1" height="70.40" fill="#765c74"/><rect x="598.55" y="291.60" width="0.8" height="70.40" fill="#ff90bc"/>
<rect x="602.59" y="256.40" width="4.04" height="105.60" fill="#ff5a8a"/><rect x="605.62" y="256.40" width="1" height="105.60" fill="#765c74"/><rect x="602.59" y="256.40" width="0.8" height="105.60" fill="#ff90bc"/>
<rect x="606.62" y="300.40" width="4.04" height="61.60" fill="#ff5a8a"/><rect x="609.66" y="300.40" width="1" height="61.60" fill="#765c74"/><rect x="606.62" y="300.40" width="0.8" height="61.60" fill="#ff90bc"/>
<rect x="610.66" y="300.40" width="4.04" height="61.60" fill="#ff5a8a"/><rect x="613.70" y="300.40" width="1" height="61.60" fill="#765c74"/><rect x="610.66" y="300.40" width="0.8" height="61.60" fill="#ff90bc"/>
<rect x="614.70" y="291.60" width="4.04" height="70.40" fill="#ff5a8a"/><rect x="617.74" y="291.60" width="1" height="70.40" fill="#765c74"/><rect x="614.70" y="291.60" width="0.8" height="70.40" fill="#ff90bc"/>
<rect x="618.74" y="260.80" width="4.04" height="101.20" fill="#ff5a8a"/><rect x="621.77" y="260.80" width="1" height="101.20" fill="#765c74"/><rect x="618.74" y="260.80" width="0.8" height="101.20" fill="#ff90bc"/>
<rect x="622.77" y="247.60" width="4.04" height="114.40" fill="#ff5a8a"/><rect x="625.81" y="247.60" width="1" height="114.40" fill="#765c74"/><rect x="622.77" y="247.60" width="0.8" height="114.40" fill="#ff90bc"/>
<rect x="626.81" y="265.20" width="4.04" height="96.80" fill="#ff5a8a"/><rect x="629.85" y="265.20" width="1" height="96.80" fill="#765c74"/><rect x="626.81" y="265.20" width="0.8" height="96.80" fill="#ff90bc"/>
<rect x="630.85" y="256.40" width="4.04" height="105.60" fill="#ff5a8a"/><rect x="633.88" y="256.40" width="1" height="105.60" fill="#765c74"/><rect x="630.85" y="256.40" width="0.8" height="105.60" fill="#ff90bc"/>
<rect x="634.88" y="291.60" width="4.04" height="70.40" fill="#ff5a8a"/><rect x="637.92" y="291.60" width="1" height="70.40" fill="#765c74"/><rect x="634.88" y="291.60" width="0.8" height="70.40" fill="#ff90bc"/>
<rect x="638.92" y="269.60" width="4.04" height="92.40" fill="#ff5a8a"/><rect x="641.96" y="269.60" width="1" height="92.40" fill="#765c74"/><rect x="638.92" y="269.60" width="0.8" height="92.40" fill="#ff90bc"/>
<rect x="642.96" y="247.60" width="4.04" height="114.40" fill="#ff5a8a"/><rect x="646.00" y="247.60" width="1" height="114.40" fill="#765c74"/><rect x="642.96" y="247.60" width="0.8" height="114.40" fill="#ff90bc"/>
<rect x="647.00" y="287.20" width="4.04" height="74.80" fill="#ff5a8a"/><rect x="650.03" y="287.20" width="1" height="74.80" fill="#765c74"/><rect x="647.00" y="287.20" width="0.8" height="74.80" fill="#ff90bc"/>
<rect x="651.03" y="208.00" width="4.04" height="154.00" fill="#ff5a8a"/><rect x="654.07" y="208.00" width="1" height="154.00" fill="#765c74"/><rect x="651.03" y="208.00" width="0.8" height="154.00" fill="#ff90bc"/>
<rect x="655.07" y="256.40" width="4.04" height="105.60" fill="#ff5a8a"/><rect x="658.11" y="256.40" width="1" height="105.60" fill="#765c74"/><rect x="655.07" y="256.40" width="0.8" height="105.60" fill="#ff90bc"/>
<rect x="659.11" y="269.60" width="4.04" height="92.40" fill="#ff5a8a"/><rect x="662.14" y="269.60" width="1" height="92.40" fill="#765c74"/><rect x="659.11" y="269.60" width="0.8" height="92.40" fill="#ff90bc"/>
<rect x="663.14" y="256.40" width="4.04" height="105.60" fill="#ff5a8a"/><rect x="666.18" y="256.40" width="1" height="105.60" fill="#765c74"/><rect x="663.14" y="256.40" width="0.8" height="105.60" fill="#ff90bc"/>
<rect x="667.18" y="247.60" width="4.04" height="114.40" fill="#ff5a8a"/><rect x="670.22" y="247.60" width="1" height="114.40" fill="#765c74"/><rect x="667.18" y="247.60" width="0.8" height="114.40" fill="#ff90bc"/>
<rect x="671.22" y="256.40" width="4.04" height="105.60" fill="#ff5a8a"/><rect x="674.25" y="256.40" width="1" height="105.60" fill="#765c74"/><rect x="671.22" y="256.40" width="0.8" height="105.60" fill="#ff90bc"/>
<rect x="675.25" y="282.80" width="4.04" height="79.20" fill="#ff5a8a"/><rect x="678.29" y="282.80" width="1" height="79.20" fill="#765c74"/><rect x="675.25" y="282.80" width="0.8" height="79.20" fill="#ff90bc"/>
<rect x="679.29" y="238.80" width="4.04" height="123.20" fill="#ff5a8a"/><rect x="682.33" y="238.80" width="1" height="123.20" fill="#765c74"/><rect x="679.29" y="238.80" width="0.8" height="123.20" fill="#ff90bc"/>
<rect x="683.33" y="265.20" width="4.04" height="96.80" fill="#ff5a8a"/><rect x="686.37" y="265.20" width="1" height="96.80" fill="#765c74"/><rect x="683.33" y="265.20" width="0.8" height="96.80" fill="#ff90bc"/>
<rect x="687.37" y="265.20" width="4.04" height="96.80" fill="#ff5a8a"/><rect x="690.40" y="265.20" width="1" height="96.80" fill="#765c74"/><rect x="687.37" y="265.20" width="0.8" height="96.80" fill="#ff90bc"/>
<rect x="691.40" y="265.20" width="4.04" height="96.80" fill="#ff5a8a"/><rect x="694.44" y="265.20" width="1" height="96.80" fill="#765c74"/><rect x="691.40" y="265.20" width="0.8" height="96.80" fill="#ff90bc"/>
<rect x="695.44" y="225.60" width="4.04" height="136.40" fill="#ff5a8a"/><rect x="698.48" y="225.60" width="1" height="136.40" fill="#765c74"/><rect x="695.44" y="225.60" width="0.8" height="136.40" fill="#ff90bc"/>
<rect x="699.48" y="230.00" width="4.04" height="132.00" fill="#ff5a8a"/><rect x="702.51" y="230.00" width="1" height="132.00" fill="#765c74"/><rect x="699.48" y="230.00" width="0.8" height="132.00" fill="#ff90bc"/>
<rect x="703.51" y="282.80" width="4.04" height="79.20" fill="#ff5a8a"/><rect x="706.55" y="282.80" width="1" height="79.20" fill="#765c74"/><rect x="703.51" y="282.80" width="0.8" height="79.20" fill="#ff90bc"/>
<rect x="707.55" y="274.00" width="4.04" height="88.00" fill="#ff5a8a"/><rect x="710.59" y="274.00" width="1" height="88.00" fill="#765c74"/><rect x="707.55" y="274.00" width="0.8" height="88.00" fill="#ff90bc"/>
<rect x="711.59" y="260.80" width="4.04" height="101.20" fill="#ff5a8a"/><rect x="714.62" y="260.80" width="1" height="101.20" fill="#765c74"/><rect x="711.59" y="260.80" width="0.8" height="101.20" fill="#ff90bc"/>
<rect x="715.62" y="269.60" width="4.04" height="92.40" fill="#ff5a8a"/><rect x="718.66" y="269.60" width="1" height="92.40" fill="#765c74"/><rect x="715.62" y="269.60" width="0.8" height="92.40" fill="#ff90bc"/>
<rect x="719.66" y="252.00" width="4.04" height="110.00" fill="#ff5a8a"/><rect x="722.70" y="252.00" width="1" height="110.00" fill="#765c74"/><rect x="719.66" y="252.00" width="0.8" height="110.00" fill="#ff90bc"/>
<rect x="723.70" y="278.40" width="4.04" height="83.60" fill="#ff5a8a"/><rect x="726.74" y="278.40" width="1" height="83.60" fill="#765c74"/><rect x="723.70" y="278.40" width="0.8" height="83.60" fill="#ff90bc"/>
<rect x="727.74" y="304.80" width="4.04" height="57.20" fill="#ff5a8a"/><rect x="730.77" y="304.80" width="1" height="57.20" fill="#765c74"/><rect x="727.74" y="304.80" width="0.8" height="57.20" fill="#ff90bc"/>
<rect x="731.77" y="265.20" width="4.04" height="96.80" fill="#ff5a8a"/><rect x="734.81" y="265.20" width="1" height="96.80" fill="#765c74"/><rect x="731.77" y="265.20" width="0.8" height="96.80" fill="#ff90bc"/>
<rect x="735.81" y="326.80" width="4.04" height="35.20" fill="#ff5a8a"/><rect x="738.85" y="326.80" width="1" height="35.20" fill="#765c74"/><rect x="735.81" y="326.80" width="0.8" height="35.20" fill="#ff90bc"/>
<rect x="739.85" y="291.60" width="4.04" height="70.40" fill="#ff5a8a"/><rect x="742.88" y="291.60" width="1" height="70.40" fill="#765c74"/><rect x="739.85" y="291.60" width="0.8" height="70.40" fill="#ff90bc"/>
<rect x="743.88" y="291.60" width="4.04" height="70.40" fill="#ff5a8a"/><rect x="746.92" y="291.60" width="1" height="70.40" fill="#765c74"/><rect x="743.88" y="291.60" width="0.8" height="70.40" fill="#ff90bc"/>
<rect x="747.92" y="291.60" width="4.04" height="70.40" fill="#ff5a8a"/><rect x="750.96" y="291.60" width="1" height="70.40" fill="#765c74"/><rect x="747.92" y="291.60" width="0.8" height="70.40" fill="#ff90bc"/>
<rect x="751.96" y="309.20" width="4.04" height="52.80" fill="#ff5a8a"/><rect x="754.99" y="309.20" width="1" height="52.80" fill="#765c74"/><rect x="751.96" y="309.20" width="0.8" height="52.80" fill="#ff90bc"/>
<rect x="755.99" y="335.60" width="4.04" height="26.40" fill="#ff5a8a"/><rect x="759.03" y="335.60" width="1" height="26.40" fill="#765c74"/><rect x="755.99" y="335.60" width="0.8" height="26.40" fill="#ff90bc"/>
<rect x="760.03" y="309.20" width="4.04" height="52.80" fill="#ff5a8a"/><rect x="763.07" y="309.20" width="1" height="52.80" fill="#765c74"/><rect x="760.03" y="309.20" width="0.8" height="52.80" fill="#ff90bc"/>
<rect x="764.07" y="340.00" width="4.04" height="22.00" fill="#ff5a8a"/><rect x="767.11" y="340.00" width="1" height="22.00" fill="#765c74"/><rect x="764.07" y="340.00" width="0.8" height="22.00" fill="#ff90bc"/>
<rect x="768.11" y="335.60" width="4.04" height="26.40" fill="#ff5a8a"/><rect x="771.14" y="335.60" width="1" height="26.40" fill="#765c74"/><rect x="768.11" y="335.60" width="0.8" height="26.40" fill="#ff90bc"/>
<rect x="772.14" y="335.60" width="4.04" height="26.40" fill="#ff5a8a"/><rect x="775.18" y="335.60" width="1" height="26.40" fill="#765c74"/><rect x="772.14" y="335.60" width="0.8" height="26.40" fill="#ff90bc"/>
<rect x="776.18" y="331.20" width="4.04" height="30.80" fill="#ff5a8a"/><rect x="779.22" y="331.20" width="1" height="30.80" fill="#765c74"/><rect x="776.18" y="331.20" width="0.8" height="30.80" fill="#ff90bc"/>
<rect x="780.22" y="348.80" width="4.04" height="13.20" fill="#ff5a8a"/><rect x="783.25" y="348.80" width="1" height="13.20" fill="#765c74"/><rect x="780.22" y="348.80" width="0.8" height="13.20" fill="#ff90bc"/>
<rect x="784.25" y="326.80" width="4.04" height="35.20" fill="#ff5a8a"/><rect x="787.29" y="326.80" width="1" height="35.20" fill="#765c74"/><rect x="784.25" y="326.80" width="0.8" height="35.20" fill="#ff90bc"/>
<rect x="788.29" y="344.40" width="4.04" height="17.60" fill="#ff5a8a"/><rect x="791.33" y="344.40" width="1" height="17.60" fill="#765c74"/><rect x="788.29" y="344.40" width="0.8" height="17.60" fill="#ff90bc"/>
<rect x="792.33" y="353.20" width="4.04" height="8.80" fill="#ff5a8a"/><rect x="795.36" y="353.20" width="1" height="8.80" fill="#765c74"/><rect x="792.33" y="353.20" width="0.8" height="8.80" fill="#ff90bc"/>
<rect x="796.36" y="348.80" width="4.04" height="13.20" fill="#ff5a8a"/><rect x="799.40" y="348.80" width="1" height="13.20" fill="#765c74"/><rect x="796.36" y="348.80" width="0.8" height="13.20" fill="#ff90bc"/>
<rect x="800.40" y="353.20" width="4.04" height="8.80" fill="#ff5a8a"/><rect x="803.44" y="353.20" width="1" height="8.80" fill="#765c74"/><rect x="800.40" y="353.20" width="0.8" height="8.80" fill="#ff90bc"/>
<rect x="804.44" y="357.60" width="4.04" height="4.40" fill="#ff5a8a"/><rect x="807.48" y="357.60" width="1" height="4.40" fill="#765c74"/><rect x="804.44" y="357.60" width="0.8" height="4.40" fill="#ff90bc"/>
<rect x="808.47" y="353.20" width="4.04" height="8.80" fill="#ff5a8a"/><rect x="811.51" y="353.20" width="1" height="8.80" fill="#765c74"/><rect x="808.47" y="353.20" width="0.8" height="8.80" fill="#ff90bc"/>
<rect x="812.51" y="353.20" width="4.04" height="8.80" fill="#ff5a8a"/><rect x="815.55" y="353.20" width="1" height="8.80" fill="#765c74"/><rect x="812.51" y="353.20" width="0.8" height="8.80" fill="#ff90bc"/>
<rect x="816.55" y="357.60" width="4.04" height="4.40" fill="#ff5a8a"/><rect x="819.59" y="357.60" width="1" height="4.40" fill="#765c74"/><rect x="816.55" y="357.60" width="0.8" height="4.40" fill="#ff90bc"/>
<rect x="824.62" y="357.60" width="4.04" height="4.40" fill="#ff5a8a"/><rect x="827.66" y="357.60" width="1" height="4.40" fill="#765c74"/><rect x="824.62" y="357.60" width="0.8" height="4.40" fill="#ff90bc"/>
<rect x="832.70" y="353.20" width="4.04" height="8.80" fill="#ff5a8a"/><rect x="835.73" y="353.20" width="1" height="8.80" fill="#765c74"/><rect x="832.70" y="353.20" width="0.8" height="8.80" fill="#ff90bc"/>
<rect x="836.73" y="357.60" width="4.04" height="4.40" fill="#ff5a8a"/><rect x="839.77" y="357.60" width="1" height="4.40" fill="#765c74"/><rect x="836.73" y="357.60" width="0.8" height="4.40" fill="#ff90bc"/>
<rect x="473" y="362" width="404" height="1" fill="#6a2438"/>
<line x1="495.5" y1="18" x2="495.5" y2="193" stroke="#30307a" stroke-width="1" stroke-dasharray="1.2 1.6"/>
<line x1="714.5" y1="18" x2="714.5" y2="193" stroke="#30307a" stroke-width="1" stroke-dasharray="1.2 1.6"/>
<line x1="801.5" y1="18" x2="801.5" y2="193" stroke="#30307a" stroke-width="1" stroke-dasharray="1.2 1.6"/>
<line x1="854.5" y1="18" x2="854.5" y2="193" stroke="#30307a" stroke-width="1" stroke-dasharray="1.2 1.6"/>
<line x1="506.5" y1="209" x2="506.5" y2="384" stroke="#30307a" stroke-width="1" stroke-dasharray="1.2 1.6"/>
<line x1="612.5" y1="209" x2="612.5" y2="384" stroke="#30307a" stroke-width="1" stroke-dasharray="1.2 1.6"/>
<line x1="731.5" y1="209" x2="731.5" y2="384" stroke="#30307a" stroke-width="1" stroke-dasharray="1.2 1.6"/>
<line x1="838.5" y1="209" x2="838.5" y2="384" stroke="#30307a" stroke-width="1" stroke-dasharray="1.2 1.6"/>
<rect x="498.5" y="175.0" width="353.0" height="1" fill="#6868cc"/>
<path d="M495.5 175.5 l4 -2.2 v4.4 z M854.5 175.5 l-4 -2.2 v4.4 z" fill="#6868cc"/>
<rect x="509.5" y="366.0" width="326.0" height="1" fill="#6868cc"/>
<path d="M506.5 366.5 l4 -2.2 v4.4 z M838.5 366.5 l-4 -2.2 v4.4 z" fill="#6868cc"/>
<rect x="718" y="105.0" width="80.5" height="1" fill="#9c9ce4"/>
<path d="M715 105.5 l4 -2.2 v4.4 z M801.5 105.5 l-4 -2.2 v4.4 z" fill="#f0d8ff"/>
<rect x="615.5" y="241.0" width="52.799999999999955" height="1" fill="#6868cc"/>
<path d="M612.5 241.5 l4 -2.2 v4.4 z M671.3 241.5 l-4 -2.2 v4.4 z" fill="#6868cc"/>
<rect x="674.8" y="241.0" width="53.700000000000045" height="1" fill="#6868cc"/>
<path d="M671.8 241.5 l4 -2.2 v4.4 z M731.5 241.5 l-4 -2.2 v4.4 z" fill="#6868cc"/>
<text x="732" y="98" font-size="4.6" fill="#e8e8e8">ampl</text><rect x="731" y="99" width="13" height="0.5" fill="#aaa"/><line x1="736" y1="99" x2="749" y2="105" stroke="#bbb" stroke-width="0.4"/>
<text x="607" y="233.5" font-size="4.6" fill="#e8e8e8">mean ± sdev</text><rect x="607" y="234.4" width="29" height="0.6" fill="#bbb"/><line x1="620" y1="234.5" x2="643" y2="241" stroke="#bbb" stroke-width="0.4"/>
<text x="485.6" y="167.8" font-size="4.6" fill="#e8e8e8">range</text><rect x="485" y="168.6" width="14" height="0.6" fill="#bbb"/><line x1="498" y1="169" x2="503" y2="175" stroke="#ccc" stroke-width="0.4"/>
<text x="496.6" y="358.8" font-size="4.6" fill="#e8e8e8">range</text><rect x="496" y="359.6" width="14" height="0.6" fill="#bbb"/><line x1="509" y1="360" x2="514" y2="366" stroke="#ccc" stroke-width="0.4"/>
<path d="M471.2 193.6 v2.2 M470.1 194.7 h2.2" stroke="#e0a400" stroke-width="0.7"/><path d="M471.2 384.6 v2.2 M470.1 385.7 h2.2" stroke="#f05888" stroke-width="0.7"/>
<rect x="25.5" y="99.4" width="7" height="4.8" rx="0.8" fill="#d8d400"/>
<text x="29.0" y="103.10000000000001" font-size="3.9" fill="#333" text-anchor="middle">Z1</text>
<rect x="25.5" y="290.4" width="7" height="4.8" rx="0.8" fill="#ff1493"/>
<text x="29.0" y="294.09999999999997" font-size="3.9" fill="#333" text-anchor="middle">Z2</text>
<rect x="466.2" y="165.2" width="7" height="4.8" rx="0.8" fill="#f0b800"/>
<text x="469.7" y="168.9" font-size="3.9" fill="#333" text-anchor="middle">F1</text>
<rect x="466.2" y="356.2" width="7" height="4.8" rx="0.8" fill="#f86090"/>
<text x="469.7" y="359.9" font-size="3.9" fill="#333" text-anchor="middle">F2</text>
<path d="M245 193.4 l-1.9 3.2 h3.8 z" fill="#e0dc00"/>
<path d="M245 384.4 l-1.9 3.2 h3.8 z" fill="#ff1090"/>
<text transform="translate(2 405) scale(0.8 1)" letter-spacing="0.45" font-size="6.6" font-weight="bold" fill="#e4eaf0">Measure</text>
<rect x="1" y="406" width="877" height="1" fill="#4a4a4a"/>
<rect x="1" y="407.00" width="877" height="7.21" fill="#1e1e1e"/>
<text transform="translate(2 412.80) scale(0.8 1)" letter-spacing="0.45" font-size="6.6" fill="#e4eaf0">value</text>
<text transform="translate(2 420.01) scale(0.8 1)" letter-spacing="0.45" font-size="6.6" fill="#e4eaf0">mean</text>
<rect x="1" y="421.42" width="877" height="7.21" fill="#1e1e1e"/>
<text transform="translate(2 427.22) scale(0.8 1)" letter-spacing="0.45" font-size="6.6" fill="#e4eaf0">min</text>
<text transform="translate(2 434.43) scale(0.8 1)" letter-spacing="0.45" font-size="6.6" fill="#e4eaf0">max</text>
<rect x="1" y="435.84" width="877" height="7.21" fill="#1e1e1e"/>
<text transform="translate(2 441.64) scale(0.8 1)" letter-spacing="0.45" font-size="6.6" fill="#e4eaf0">sdev</text>
<text transform="translate(2 448.85) scale(0.8 1)" letter-spacing="0.45" font-size="6.6" fill="#e4eaf0">num</text>
<rect x="1" y="450.26" width="877" height="7.21" fill="#1e1e1e"/>
<text transform="translate(2 456.06) scale(0.8 1)" letter-spacing="0.45" font-size="6.6" fill="#e4eaf0">status</text>
<text transform="translate(195.40 405) scale(0.8 1)" letter-spacing="0.45" font-size="6.6" fill="#e4eaf0" text-anchor="end">P1:rms(M1)</text>
<text transform="translate(195.40 412.80) scale(0.8 1)" letter-spacing="0.45" font-size="6.6" fill="#e4eaf0" text-anchor="end">233.91 V</text>
<text transform="translate(195.40 420.01) scale(0.8 1)" letter-spacing="0.45" font-size="6.6" fill="#e4eaf0" text-anchor="end">234.2310 V</text>
<text transform="translate(195.40 427.22) scale(0.8 1)" letter-spacing="0.45" font-size="6.6" fill="#e4eaf0" text-anchor="end">232.96 V</text>
<text transform="translate(195.40 434.43) scale(0.8 1)" letter-spacing="0.45" font-size="6.6" fill="#e4eaf0" text-anchor="end">234.74 V</text>
<text transform="translate(195.40 441.64) scale(0.8 1)" letter-spacing="0.45" font-size="6.6" fill="#e4eaf0" text-anchor="end">290.4 mV</text>
<text transform="translate(195.40 448.85) scale(0.8 1)" letter-spacing="0.45" font-size="6.6" fill="#e4eaf0" text-anchor="end">1.000e+3</text>
<path d="M190.3 453.7 l1.5 1.8 l3.2 -3.6" stroke="#22dd22" stroke-width="1.2" fill="none"/>
<text transform="translate(293.10 405) scale(0.8 1)" letter-spacing="0.45" font-size="6.6" fill="#e4eaf0" text-anchor="end">P2:rms(M2)</text>
<text transform="translate(293.10 412.80) scale(0.8 1)" letter-spacing="0.45" font-size="6.6" fill="#e4eaf0" text-anchor="end">407.3 mA</text>
<text transform="translate(293.10 420.01) scale(0.8 1)" letter-spacing="0.45" font-size="6.6" fill="#e4eaf0" text-anchor="end">402.014 mA</text>
<text transform="translate(293.10 427.22) scale(0.8 1)" letter-spacing="0.45" font-size="6.6" fill="#e4eaf0" text-anchor="end">393.8 mA</text>
<text transform="translate(293.10 434.43) scale(0.8 1)" letter-spacing="0.45" font-size="6.6" fill="#e4eaf0" text-anchor="end">410.3 mA</text>
<text transform="translate(293.10 441.64) scale(0.8 1)" letter-spacing="0.45" font-size="6.6" fill="#e4eaf0" text-anchor="end">2.946 mA</text>
<text transform="translate(293.10 448.85) scale(0.8 1)" letter-spacing="0.45" font-size="6.6" fill="#e4eaf0" text-anchor="end">1.000e+3</text>
<path d="M288.0 453.7 l1.5 1.8 l3.2 -3.6" stroke="#22dd22" stroke-width="1.2" fill="none"/>
<text transform="translate(391.10 405) scale(0.8 1)" letter-spacing="0.45" font-size="6.6" fill="#e4eaf0" text-anchor="end">P3:range(F1)</text>
<text transform="translate(391.10 412.80) scale(0.8 1)" letter-spacing="0.45" font-size="6.6" fill="#e4eaf0" text-anchor="end">1.78 V</text>
<text transform="translate(391.10 420.01) scale(0.8 1)" letter-spacing="0.45" font-size="6.6" fill="#e4eaf0" text-anchor="end">1.78 V</text>
<text transform="translate(391.10 427.22) scale(0.8 1)" letter-spacing="0.45" font-size="6.6" fill="#e4eaf0" text-anchor="end">1.78 V</text>
<text transform="translate(391.10 434.43) scale(0.8 1)" letter-spacing="0.45" font-size="6.6" fill="#e4eaf0" text-anchor="end">1.78 V</text>
<text transform="translate(391.10 441.64) scale(0.8 1)" letter-spacing="0.45" font-size="6.6" fill="#e4eaf0" text-anchor="end">—</text>
<text transform="translate(391.10 448.85) scale(0.8 1)" letter-spacing="0.45" font-size="6.6" fill="#e4eaf0" text-anchor="end">1</text>
<path d="M386.0 453.7 l1.5 1.8 l3.2 -3.6" stroke="#22dd22" stroke-width="1.2" fill="none"/>
<text transform="translate(488.10 405) scale(0.8 1)" letter-spacing="0.45" font-size="6.6" fill="#e4eaf0" text-anchor="end">P4:hampl(F1)</text>
<text transform="translate(488.10 412.80) scale(0.8 1)" letter-spacing="0.45" font-size="6.6" fill="#e4eaf0" text-anchor="end">430.8 mV</text>
<text transform="translate(488.10 420.01) scale(0.8 1)" letter-spacing="0.45" font-size="6.6" fill="#e4eaf0" text-anchor="end">430.8 mV</text>
<text transform="translate(488.10 427.22) scale(0.8 1)" letter-spacing="0.45" font-size="6.6" fill="#e4eaf0" text-anchor="end">430.8 mV</text>
<text transform="translate(488.10 434.43) scale(0.8 1)" letter-spacing="0.45" font-size="6.6" fill="#e4eaf0" text-anchor="end">430.8 mV</text>
<text transform="translate(488.10 441.64) scale(0.8 1)" letter-spacing="0.45" font-size="6.6" fill="#e4eaf0" text-anchor="end">—</text>
<text transform="translate(488.10 448.85) scale(0.8 1)" letter-spacing="0.45" font-size="6.6" fill="#e4eaf0" text-anchor="end">1</text>
<path d="M483.0 453.7 l1.5 1.8 l3.2 -3.6" stroke="#22dd22" stroke-width="1.2" fill="none"/>
<text transform="translate(585.80 405) scale(0.8 1)" letter-spacing="0.45" font-size="6.6" fill="#e4eaf0" text-anchor="end">P5:range(F2)</text>
<text transform="translate(585.80 412.80) scale(0.8 1)" letter-spacing="0.45" font-size="6.6" fill="#e4eaf0" text-anchor="end">16.4 mA</text>
<text transform="translate(585.80 420.01) scale(0.8 1)" letter-spacing="0.45" font-size="6.6" fill="#e4eaf0" text-anchor="end">16.4 mA</text>
<text transform="translate(585.80 427.22) scale(0.8 1)" letter-spacing="0.45" font-size="6.6" fill="#e4eaf0" text-anchor="end">16.4 mA</text>
<text transform="translate(585.80 434.43) scale(0.8 1)" letter-spacing="0.45" font-size="6.6" fill="#e4eaf0" text-anchor="end">16.4 mA</text>
<text transform="translate(585.80 441.64) scale(0.8 1)" letter-spacing="0.45" font-size="6.6" fill="#e4eaf0" text-anchor="end">—</text>
<text transform="translate(585.80 448.85) scale(0.8 1)" letter-spacing="0.45" font-size="6.6" fill="#e4eaf0" text-anchor="end">1</text>
<path d="M580.7 453.7 l1.5 1.8 l3.2 -3.6" stroke="#22dd22" stroke-width="1.2" fill="none"/>
<text transform="translate(683.90 405) scale(0.8 1)" letter-spacing="0.45" font-size="6.6" fill="#e4eaf0" text-anchor="end">P6:hsdev(F2)</text>
<text transform="translate(683.90 412.80) scale(0.8 1)" letter-spacing="0.45" font-size="6.6" fill="#e4eaf0" text-anchor="end">2.9 mA</text>
<text transform="translate(683.90 420.01) scale(0.8 1)" letter-spacing="0.45" font-size="6.6" fill="#e4eaf0" text-anchor="end">2.9 mA</text>
<text transform="translate(683.90 427.22) scale(0.8 1)" letter-spacing="0.45" font-size="6.6" fill="#e4eaf0" text-anchor="end">2.9 mA</text>
<text transform="translate(683.90 434.43) scale(0.8 1)" letter-spacing="0.45" font-size="6.6" fill="#e4eaf0" text-anchor="end">2.9 mA</text>
<text transform="translate(683.90 441.64) scale(0.8 1)" letter-spacing="0.45" font-size="6.6" fill="#e4eaf0" text-anchor="end">—</text>
<text transform="translate(683.90 448.85) scale(0.8 1)" letter-spacing="0.45" font-size="6.6" fill="#e4eaf0" text-anchor="end">1</text>
<path d="M678.8 453.7 l1.5 1.8 l3.2 -3.6" stroke="#22dd22" stroke-width="1.2" fill="none"/>
<text transform="translate(781.10 405) scale(0.8 1)" letter-spacing="0.45" font-size="6.6" fill="#5a5a5a" text-anchor="end">P7:- - -</text>
<text transform="translate(877.60 405) scale(0.8 1)" letter-spacing="0.45" font-size="6.6" fill="#5a5a5a" text-anchor="end">P8:- - -</text>
<rect x="1.2" y="457.6" width="45.8" height="29.69999999999999" fill="#2c5a88"/>
<rect x="1.7999999999999998" y="458.20000000000005" width="44.599999999999994" height="7.0" fill="#f6bc00"/>
<rect x="1.7" y="458.1" width="44.8" height="28.69999999999999" fill="none" stroke="#3a7cc0" stroke-width="1"/>
<text transform="translate(3.0 464.20000000000005) scale(0.8 1)" letter-spacing="0.45" font-size="6.6" fill="#1a1a1a">F1</text>
<text transform="translate(45.60 464.20000000000005) scale(0.8 1)" letter-spacing="0.45" font-size="6.6" fill="#1a1a1a" text-anchor="end">zoom(hist...</text>
<text transform="translate(45.60 472.10) scale(0.8 1)" letter-spacing="0.45" font-size="6.6" fill="#e4eaf0" text-anchor="end">10.0 #/div</text>
<text transform="translate(45.60 479.00) scale(0.8 1)" letter-spacing="0.45" font-size="6.6" fill="#e4eaf0" text-anchor="end">200 mV/div</text>
<text transform="translate(45.60 485.90) scale(0.8 1)" letter-spacing="0.45" font-size="6.6" fill="#e4eaf0" text-anchor="end">1.000 k#</text>
<rect x="47.6" y="457.6" width="44.9" height="29.69999999999999" fill="#454545"/>
<rect x="48.2" y="458.20000000000005" width="43.699999999999996" height="7.0" fill="#ff6090"/>
<text transform="translate(49.4 464.20000000000005) scale(0.8 1)" letter-spacing="0.45" font-size="6.6" fill="#222">F2</text>
<text transform="translate(91.10 464.20000000000005) scale(0.8 1)" letter-spacing="0.45" font-size="6.6" fill="#222" text-anchor="end">hist(P2)</text>
<text transform="translate(91.10 472.10) scale(0.8 1)" letter-spacing="0.45" font-size="6.6" fill="#e4eaf0" text-anchor="end">5.00 #/div</text>
<text transform="translate(91.10 479.00) scale(0.8 1)" letter-spacing="0.45" font-size="6.6" fill="#e4eaf0" text-anchor="end">2.00 mA/div</text>
<text transform="translate(91.10 485.90) scale(0.8 1)" letter-spacing="0.45" font-size="6.6" fill="#e4eaf0" text-anchor="end">1.000 k#</text>
<rect x="93.6" y="457.6" width="45.0" height="29.69999999999999" fill="#454545"/>
<rect x="94.19999999999999" y="458.20000000000005" width="43.8" height="7.0" fill="#ffff00"/>
<text transform="translate(95.39999999999999 464.20000000000005) scale(0.8 1)" letter-spacing="0.45" font-size="6.6" fill="#111">Z1</text>
<text transform="translate(137.20 464.20000000000005) scale(0.8 1)" letter-spacing="0.45" font-size="6.6" fill="#111" text-anchor="end">zoom(M1)</text>
<text transform="translate(137.20 472.10) scale(0.8 1)" letter-spacing="0.45" font-size="6.6" fill="#e4eaf0" text-anchor="end">100 V/div</text>
<text transform="translate(137.20 479.00) scale(0.8 1)" letter-spacing="0.45" font-size="6.6" fill="#e4eaf0" text-anchor="end">2.00 ms/div</text>
<text transform="translate(137.20 485.90) scale(0.8 1)" letter-spacing="0.45" font-size="6.6" fill="#e4eaf0" text-anchor="end">[1] 1Seg</text>
<rect x="94.1" y="486.3" width="44.0" height="1" fill="#22bb22"/>
<rect x="139.6" y="457.6" width="44.599999999999994" height="29.69999999999999" fill="#454545"/>
<rect x="140.2" y="458.20000000000005" width="43.39999999999999" height="7.0" fill="#ff0090"/>
<text transform="translate(141.4 464.20000000000005) scale(0.8 1)" letter-spacing="0.45" font-size="6.6" fill="#222">Z2</text>
<text transform="translate(182.80 464.20000000000005) scale(0.8 1)" letter-spacing="0.45" font-size="6.6" fill="#222" text-anchor="end">zoom(M2)</text>
<text transform="translate(182.80 472.10) scale(0.8 1)" letter-spacing="0.45" font-size="6.6" fill="#e4eaf0" text-anchor="end">200 mA/div</text>
<text transform="translate(182.80 479.00) scale(0.8 1)" letter-spacing="0.45" font-size="6.6" fill="#e4eaf0" text-anchor="end">2.00 ms/div</text>
<text transform="translate(182.80 485.90) scale(0.8 1)" letter-spacing="0.45" font-size="6.6" fill="#e4eaf0" text-anchor="end">[1] 1Seg</text>
<rect x="140.1" y="486.3" width="43.599999999999994" height="1" fill="#22bb22"/>
<rect x="185.5" y="458.1" width="44.6" height="28.69999999999999" fill="#000" stroke="#aaa" stroke-width="0.7" stroke-dasharray="1.2 1.2"/>
<path d="M207.8 468.5 v8 M203.8 472.5 h8" stroke="#eee" stroke-width="0.9"/>
<rect x="755" y="458" width="26" height="22" fill="#4a4a4a"/>
<rect x="755.5" y="458.5" width="25" height="6.5" fill="#11ee11"/>
<text transform="translate(768 464.3) scale(0.8 1)" letter-spacing="0.45" font-size="6.6" fill="#000" text-anchor="middle">HD</text>
<text transform="translate(768 474.5) scale(0.8 1)" letter-spacing="0.45" font-size="6.6" fill="#e4eaf0" text-anchor="middle">12 Bits</text>
<rect x="782" y="458" width="51.5" height="22" fill="#4a4a4a"/>
<rect x="782.5" y="458.5" width="50.5" height="6.5" fill="#f4f4f4"/>
<text transform="translate(783.5 464.3) scale(0.8 1)" letter-spacing="0.45" font-size="6.6" fill="#111">Timebase</text><text transform="translate(832.60 464.3) scale(0.8 1)" letter-spacing="0.45" font-size="6.6" fill="#111" text-anchor="end">0 ns</text>
<text transform="translate(832.60 471.9) scale(0.8 1)" letter-spacing="0.45" font-size="6.6" fill="#e4eaf0" text-anchor="end">50.0 ns/div</text>
<text transform="translate(783.5 478.6) scale(0.8 1)" letter-spacing="0.45" font-size="6.6" fill="#e4eaf0">5 kS</text><text transform="translate(832.60 478.6) scale(0.8 1)" letter-spacing="0.45" font-size="6.6" fill="#e4eaf0" text-anchor="end">10 GS/s</text>
<rect x="835" y="458" width="44" height="22" fill="#4a4a4a"/>
<rect x="835.5" y="458.5" width="43" height="6.5" fill="#f4f4f4"/>
<text transform="translate(836.5 464.3) scale(0.8 1)" letter-spacing="0.45" font-size="6.6" fill="#111">Trigger</text>
<rect x="859.5" y="458.8" width="8.3" height="6" fill="#111"/><text x="863.6" y="464" font-size="5" fill="#fff" text-anchor="middle">C1</text>
<rect x="869" y="458.8" width="9" height="6" fill="#111"/><text x="873.5" y="464" font-size="5" fill="#fff" text-anchor="middle">DC</text>
<text transform="translate(836.5 471.9) scale(0.8 1)" letter-spacing="0.45" font-size="6.6" fill="#e4eaf0">Stop</text><text transform="translate(878.10 471.9) scale(0.8 1)" letter-spacing="0.45" font-size="6.6" fill="#e4eaf0" text-anchor="end">0.0 mV</text>
<text transform="translate(836.5 478.6) scale(0.8 1)" letter-spacing="0.45" font-size="6.6" fill="#e4eaf0">Edge</text><text transform="translate(878.10 478.6) scale(0.8 1)" letter-spacing="0.45" font-size="6.6" fill="#e4eaf0" text-anchor="end">Positive</text>
<rect x="0" y="488" width="882" height="8" fill="#262626"/>
<text transform="translate(2 495) scale(0.8 1)" letter-spacing="0.45" font-size="6.6" font-weight="bold" fill="#e8e8e8">TELEDYNE <tspan font-weight="normal">LECROY</tspan></text>
<text transform="translate(875.10 494.2) scale(0.8 1)" letter-spacing="0.45" font-size="6.6" fill="#e4eaf0" text-anchor="end">26.02.2023 13:55:26</text>
</svg></body></html>
